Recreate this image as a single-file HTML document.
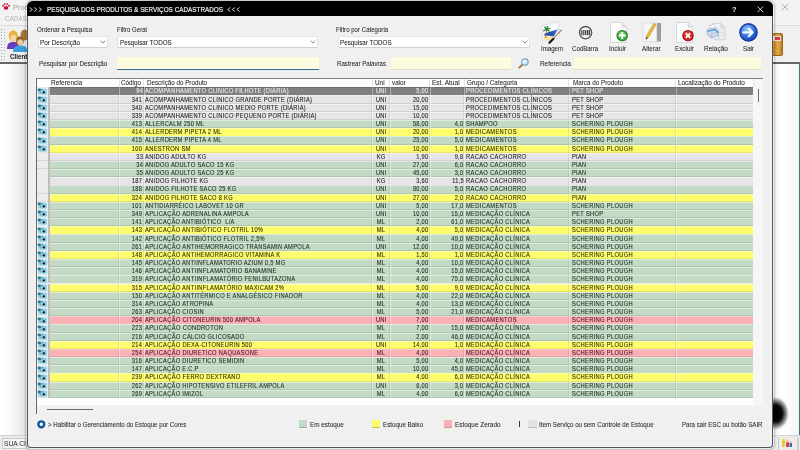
<!DOCTYPE html>
<html><head><meta charset="utf-8">
<style>
*{margin:0;padding:0;box-sizing:border-box}
html,body{width:800px;height:450px;overflow:hidden;background:#fff}
#root{position:absolute;left:0;top:0;width:800px;height:450px;overflow:hidden;will-change:transform;font-family:"Liberation Sans",sans-serif;color:#222}
.a{position:absolute}
.t{position:absolute;white-space:pre;line-height:1}
svg{position:absolute;overflow:visible}
</style></head><body><div id="root">

<div class="a" style="left:0.00px;top:0.00px;width:800.00px;height:25.00px;background:#f3f3f3"></div>
<div class="a" style="left:0.00px;top:25.00px;width:800.00px;height:1.00px;background:#dcdcdc"></div>
<div class="a" style="left:0.00px;top:26.00px;width:800.00px;height:36.30px;background:#f0f0f0"></div>
<div class="a" style="left:0.00px;top:62.30px;width:800.00px;height:1.30px;background:#666"></div>
<div class="a" style="left:0.00px;top:63.60px;width:27.00px;height:371.40px;background:linear-gradient(to right,#ffffff 0%,#fafafa 40%,#e2e2e2 100%)"></div>
<div class="a" style="left:773.00px;top:63.60px;width:27.00px;height:371.40px;background:linear-gradient(to right,#f0f0f0 0%,#ffffff 35%,#f4f4f4 100%)"></div>
<div class="a" style="left:798.60px;top:63.60px;width:1.40px;height:371.40px;background:#3d7a74"></div>
<div class="a" style="left:0.00px;top:435.00px;width:800.00px;height:15.00px;background:#ececec;border-top:1px solid #d0d0d0"></div>
<div class="a" style="left:1.50px;top:437.60px;width:25.50px;height:11.40px;background:#f4f4f4;border:1px solid #c8c8c8"></div>
<div class="t" style="left:4.00px;top:440.30px;font-size:7.0px;color:#333;transform:scaleX(0.9500);transform-origin:0 0;-webkit-text-stroke:0.05px #333;">SUA CI</div>
<div class="a" style="left:777.60px;top:437.00px;width:1.00px;height:13.00px;background:#c8c8c8"></div>
<div class="a" style="left:797.00px;top:437.00px;width:1.50px;height:13.00px;background:#d0d0d0"></div>
<svg style="left:780.5px;top:437.5px" width="12" height="10" viewBox="0 0 12 10"><path d="M1 2 L4 2 L3.5 9 L1.5 9Z" fill="#e8c020"/><circle cx="2.6" cy="2" r="1.6" fill="#f0d040"/><path d="M5 4 L8 4 L8 9 L5 9Z" fill="#d04848"/><circle cx="6.5" cy="3" r="1.5" fill="#f0c8a0"/><path d="M8.5 5 L11 5 L11 9 L8.5 9Z" fill="#3a68c8"/><circle cx="9.8" cy="4" r="1.3" fill="#f0c8a0"/></svg>
<div class="a" style="left:762.00px;top:397.00px;width:27.00px;height:33.00px;border-radius:50%;background:radial-gradient(ellipse 50% 50% at 50% 50%,#000 0%,#080808 50%,rgba(0,0,0,.5) 75%,rgba(0,0,0,0) 100%)"></div>
<svg style="left:2px;top:3.2px" width="8" height="7" viewBox="0 0 8 7"><ellipse cx="4" cy="4.9" rx="2.3" ry="1.8" fill="#c81430"/><circle cx="1" cy="2.7" r=".95" fill="#c81430"/><circle cx="2.8" cy="1.1" r=".95" fill="#c81430"/><circle cx="5.2" cy="1.1" r=".95" fill="#c81430"/><circle cx="7" cy="2.7" r=".95" fill="#c81430"/></svg>
<div class="t" style="left:13.47px;top:3.60px;font-size:7.8px;color:#a0a0a0;transform:scaleX(0.9500);transform-origin:0 0;-webkit-text-stroke:0px #a0a0a0;">Produtos</div>
<div class="t" style="left:4.61px;top:15.40px;font-size:7.4px;color:#b2b2b2;transform:scaleX(0.8600);transform-origin:0 0;-webkit-text-stroke:0px #b2b2b2;">CADASTRO</div>
<svg style="left:780.5px;top:2.5px" width="8" height="8" viewBox="0 0 8 8"><path d="M.8 .8 L7.2 7.2 M7.2 .8 L.8 7.2" stroke="#a0a0a0" stroke-width=".8"/></svg>
<div class="a" style="left:1.00px;top:28.50px;width:1.00px;height:1.00px;background:#9aa4ae"></div>
<div class="a" style="left:4.00px;top:28.50px;width:1.00px;height:1.00px;background:#aab2ba"></div>
<div class="a" style="left:1.00px;top:31.50px;width:1.00px;height:1.00px;background:#9aa4ae"></div>
<div class="a" style="left:4.00px;top:31.50px;width:1.00px;height:1.00px;background:#aab2ba"></div>
<div class="a" style="left:1.00px;top:34.50px;width:1.00px;height:1.00px;background:#9aa4ae"></div>
<div class="a" style="left:4.00px;top:34.50px;width:1.00px;height:1.00px;background:#aab2ba"></div>
<div class="a" style="left:1.00px;top:37.50px;width:1.00px;height:1.00px;background:#9aa4ae"></div>
<div class="a" style="left:4.00px;top:37.50px;width:1.00px;height:1.00px;background:#aab2ba"></div>
<div class="a" style="left:1.00px;top:40.50px;width:1.00px;height:1.00px;background:#9aa4ae"></div>
<div class="a" style="left:4.00px;top:40.50px;width:1.00px;height:1.00px;background:#aab2ba"></div>
<div class="a" style="left:1.00px;top:43.50px;width:1.00px;height:1.00px;background:#9aa4ae"></div>
<div class="a" style="left:4.00px;top:43.50px;width:1.00px;height:1.00px;background:#aab2ba"></div>
<div class="a" style="left:1.00px;top:46.50px;width:1.00px;height:1.00px;background:#9aa4ae"></div>
<div class="a" style="left:4.00px;top:46.50px;width:1.00px;height:1.00px;background:#aab2ba"></div>
<div class="a" style="left:1.00px;top:49.50px;width:1.00px;height:1.00px;background:#9aa4ae"></div>
<div class="a" style="left:4.00px;top:49.50px;width:1.00px;height:1.00px;background:#aab2ba"></div>
<div class="a" style="left:1.00px;top:52.50px;width:1.00px;height:1.00px;background:#9aa4ae"></div>
<div class="a" style="left:4.00px;top:52.50px;width:1.00px;height:1.00px;background:#aab2ba"></div>
<div class="a" style="left:1.00px;top:55.50px;width:1.00px;height:1.00px;background:#9aa4ae"></div>
<div class="a" style="left:4.00px;top:55.50px;width:1.00px;height:1.00px;background:#aab2ba"></div>
<div class="a" style="left:1.00px;top:58.50px;width:1.00px;height:1.00px;background:#9aa4ae"></div>
<div class="a" style="left:4.00px;top:58.50px;width:1.00px;height:1.00px;background:#aab2ba"></div>
<svg style="left:6px;top:28px" width="22" height="25" viewBox="0 0 22 25">
<ellipse cx="18.5" cy="7" rx="4" ry="5.5" fill="#a87838"/>
<path d="M1 21 Q1 14 6 14 L9 14 Q13 14 13 21Z" fill="#6a3ab8"/>
<ellipse cx="7.3" cy="8" rx="4.6" ry="5.8" fill="#e4b640"/>
<ellipse cx="7.5" cy="10" rx="2.8" ry="3.2" fill="#f6d4ac"/>
<path d="M7 24 Q7 17.5 13 17.5 L16 17.5 Q21.5 17.5 21.5 24Z" fill="#3a9ede"/>
<ellipse cx="14" cy="13" rx="3.8" ry="4.4" fill="#8c6028"/>
<ellipse cx="14.2" cy="14.3" rx="2.8" ry="3.1" fill="#f2c89e"/>
</svg>
<div class="t" style="left:9.52px;top:54.30px;font-size:6.6px;color:#1a1a1a;transform:scaleX(0.9500);transform-origin:0 0;font-weight:bold;-webkit-text-stroke:0.05px #1a1a1a;">Clientes</div>
<div class="a" style="left:772.00px;top:33.00px;width:10.50px;height:23.00px;border-radius:2px;background:linear-gradient(to right,#c98a2a,#e0a848 60%,#b87a22);border:1px solid #9a6a1c"></div>
<div class="a" style="left:773.00px;top:36.00px;width:8.00px;height:5.00px;background:#e8e0e0"></div>
<div class="a" style="left:774.50px;top:37.00px;width:5.00px;height:3.00px;background:#d83848"></div>
<div class="a" style="left:25.60px;top:1.40px;width:748.90px;height:447.30px;border-radius:7px 7px 5px 5px;box-shadow:0 0 2px 0.4px rgba(0,0,0,.22)"></div>
<div class="a" style="left:26.60px;top:1.40px;width:746.90px;height:446.50px;background:#f0f0f0;border:1px solid #555;border-top:none;border-radius:6px 6px 4px 4px"></div>
<div class="a" style="left:26.60px;top:1.40px;width:746.90px;height:15.00px;background:#000;border-radius:6px 6px 0 0"></div>
<svg style="left:29px;top:7px" width="14" height="5" viewBox="0 0 14 5"><path d="M.6 .5 L3.4 2.5 L.6 4.5 M5.2 .5 L8 2.5 L5.2 4.5 M9.8 .5 L12.6 2.5 L9.8 4.5" fill="none" stroke="#d8d8d8" stroke-width=".9"/></svg>
<div class="t" style="left:47.01px;top:6.00px;font-size:8.0px;color:#ececec;transform:scaleX(0.7945);transform-origin:0 0;-webkit-text-stroke:0.22px #ececec;">PESQUISA DOS PRODUTOS &amp; SERVIÇOS CADASTRADOS</div>
<svg style="left:227px;top:7px" width="14" height="5" viewBox="0 0 14 5"><path d="M3.4 .5 L.6 2.5 L3.4 4.5 M8 .5 L5.2 2.5 L8 4.5 M12.6 .5 L9.8 2.5 L12.6 4.5" fill="none" stroke="#d8d8d8" stroke-width=".9"/></svg>
<div class="t" style="left:731.57px;top:6.00px;font-size:7.8px;color:#e0e0e0;transform:scaleX(0.9500);transform-origin:0 0;font-weight:bold;-webkit-text-stroke:0.05px #e0e0e0;">?</div>
<svg style="left:756.6px;top:5.6px" width="7" height="7" viewBox="0 0 7 7"><path d="M.5 .5 L6.2 6.2 M6.2 .5 L.5 6.2" stroke="#e8e8e8" stroke-width=".9"/></svg>
<div class="t" style="left:36.82px;top:26.70px;font-size:6.3px;color:#262626;transform:scaleX(0.9846);transform-origin:0 0;-webkit-text-stroke:0.05px #262626;">Ordenar a Pesquisa</div>
<div class="t" style="left:116.73px;top:26.70px;font-size:6.3px;color:#262626;transform:scaleX(0.9587);transform-origin:0 0;-webkit-text-stroke:0.05px #262626;">Filtro Geral</div>
<div class="t" style="left:336.23px;top:26.70px;font-size:6.3px;color:#262626;transform:scaleX(0.9675);transform-origin:0 0;-webkit-text-stroke:0.05px #262626;">Filtro por Categoria</div>
<div class="a" style="left:37.60px;top:36.20px;width:70.40px;height:11.60px;background:#fff;border:1px solid #e2e2e2;border-bottom:1px solid #d0d0d0;border-radius:1.5px"></div>
<div class="t" style="left:39.91px;top:39.70px;font-size:6.5px;color:#1a1a1a;transform:scaleX(0.9796);transform-origin:0 0;-webkit-text-stroke:0.05px #1a1a1a;">Por Descrição</div>
<svg style="left:99.80px;top:40.4px" width="6" height="4" viewBox="0 0 6 4"><path d="M0.6 0.7 L3 3.1 L5.4 0.7" fill="none" stroke="#5a5a5a" stroke-width=".75"/></svg>
<div class="a" style="left:117.30px;top:36.20px;width:201.10px;height:11.60px;background:#fff;border:1px solid #e2e2e2;border-bottom:1px solid #d0d0d0;border-radius:1.5px"></div>
<div class="t" style="left:119.62px;top:39.70px;font-size:6.5px;color:#1a1a1a;transform:scaleX(0.9664);transform-origin:0 0;-webkit-text-stroke:0.05px #1a1a1a;">Pesquisar TODOS</div>
<svg style="left:310.20px;top:40.4px" width="6" height="4" viewBox="0 0 6 4"><path d="M0.6 0.7 L3 3.1 L5.4 0.7" fill="none" stroke="#5a5a5a" stroke-width=".75"/></svg>
<div class="a" style="left:337.60px;top:36.20px;width:192.60px;height:11.60px;background:#fff;border:1px solid #e2e2e2;border-bottom:1px solid #d0d0d0;border-radius:1.5px"></div>
<div class="t" style="left:339.92px;top:39.70px;font-size:6.5px;color:#1a1a1a;transform:scaleX(0.9627);transform-origin:0 0;-webkit-text-stroke:0.05px #1a1a1a;">Pesquisar TODOS</div>
<svg style="left:522.00px;top:40.4px" width="6" height="4" viewBox="0 0 6 4"><path d="M0.6 0.7 L3 3.1 L5.4 0.7" fill="none" stroke="#5a5a5a" stroke-width=".75"/></svg>
<div class="t" style="left:38.62px;top:60.60px;font-size:6.6px;color:#262626;transform:scaleX(0.9513);transform-origin:0 0;-webkit-text-stroke:0.05px #262626;">Pesquisar por Descrição</div>
<div class="t" style="left:337.22px;top:60.60px;font-size:6.6px;color:#262626;transform:scaleX(0.9295);transform-origin:0 0;-webkit-text-stroke:0.05px #262626;">Rastrear Palavras</div>
<div class="t" style="left:539.91px;top:60.60px;font-size:6.6px;color:#262626;transform:scaleX(0.9680);transform-origin:0 0;-webkit-text-stroke:0.05px #262626;">Referencia</div>
<div class="a" style="left:116.70px;top:56.70px;width:202.00px;height:13.50px;background:#fdfcdf;border-bottom:1.6px solid #3a6c94"></div>
<div class="a" style="left:391.00px;top:57.00px;width:120.00px;height:12.60px;background:#fdfcdf;border-bottom:0.8px solid #e0dfcc"></div>
<div class="a" style="left:574.00px;top:56.70px;width:186.50px;height:13.80px;background:#fdfcdf;border-bottom:0.8px solid #e0dfcc"></div>
<svg style="left:517.5px;top:57px" width="12" height="12" viewBox="0 0 12 12"><line x1="4.3" y1="7.6" x2="1.3" y2="10.7" stroke="#9a6a34" stroke-width="1.8" stroke-linecap="round"/><line x1="3.6" y1="8.3" x2="1.6" y2="10.3" stroke="#d0a070" stroke-width=".5" stroke-linecap="round"/><circle cx="6.9" cy="5" r="3.3" fill="#cfe8f4" stroke="#7098b4" stroke-width="1.05"/><circle cx="6.2" cy="4.3" r="1.2" fill="#f4fbff" opacity=".9"/></svg>
<svg style="left:538px;top:18px" width="30" height="28" viewBox="0 0 30 28">
<defs><linearGradient id="bw" x1="0" y1="0" x2="1" y2="0"><stop offset="0" stop-color="#1a3c9c"/><stop offset=".7" stop-color="#2a5cc0"/><stop offset="1" stop-color="#7ab8e8"/></linearGradient></defs>
<path d="M4 7.6 L20.8 3.6 L21.4 20.2 L4.6 23.2 Z" fill="#f6f8fa" stroke="#cfd6de" stroke-width=".6"/>
<path d="M5.6 9 L19.6 5.6 L20 18.8 L6 21.6 Z" fill="#fbfdff"/>
<ellipse cx="10.2" cy="20" rx="4.6" ry="2.4" fill="#f2e4a4"/>
<path d="M6.2 16 Q12 13.5 20.6 11 L15.6 18.6 Q11 17.2 6.4 17.4 Z" fill="url(#bw)"/>
<path d="M8.6 12 L7.6 20" stroke="#8a6a3a" stroke-width=".9"/>
<path d="M8.8 11.4 L5.8 12.6 M8.8 11.4 L11.8 10.4 M8.8 11.4 L6.8 9.2 M8.8 11.4 L11 13 M8.8 11.4 L9.4 8.8" stroke="#2a8c3c" stroke-width="1.5" stroke-linecap="round"/>
<path d="M23.6 11.8 L15.8 20.2" stroke="#a8703a" stroke-width="1.1"/>
<path d="M15.4 20.8 L11.4 24.8" stroke="#111" stroke-width="2.1" stroke-linecap="round"/>
</svg>
<div class="t" style="left:540.53px;top:45.50px;font-size:6.6px;color:#262626;transform:scaleX(0.9226);transform-origin:0 0;-webkit-text-stroke:0.05px #262626;">Imagem</div>
<svg style="left:576px;top:23px" width="20" height="20" viewBox="0 0 20 20">
<circle cx="9.6" cy="9.6" r="6.9" fill="#fafafa" stroke="#fff" stroke-width="1.2" opacity=".8"/>
<circle cx="9.6" cy="9.6" r="6.1" fill="#f8f8f8" stroke="#595959" stroke-width="1.5"/>
<path d="M5.9 6.9V12.3M7.8 6.9V12.3M9.7 6.9V12.3M11.6 6.9V12.3M13.4 6.9V12.3" stroke="#383838" stroke-width="1.15"/>
<path d="M6.85 7.2V12M8.75 7.2V12M10.65 7.2V12M12.5 7.2V12" stroke="#9a9a9a" stroke-width=".4"/>
</svg>
<div class="t" style="left:572.03px;top:45.50px;font-size:6.6px;color:#262626;transform:scaleX(0.9238);transform-origin:0 0;-webkit-text-stroke:0.05px #262626;">CodBarra</div>
<svg style="left:607.5px;top:20.5px" width="22" height="23" viewBox="0 0 22 23">
<path d="M2.5 1.5 L14 1.5 L18.5 6 L18.5 21.5 L2.5 21.5 Z" fill="#fbfbfb" stroke="#c4c4c4" stroke-width=".6"/>
<path d="M14 1.5 L14 6 L18.5 6" fill="#e2e2e2" stroke="#c4c4c4" stroke-width=".5"/>
<circle cx="14.2" cy="14.6" r="5.7" fill="#1e7a22"/>
<circle cx="14.2" cy="14.6" r="4.8" fill="#48b048"/>
<ellipse cx="13.6" cy="12.6" rx="3.2" ry="1.8" fill="#8ad88a" opacity=".6"/>
<path d="M14.2 11.2V18M10.8 14.6H17.6" stroke="#fff" stroke-width="2"/>
</svg>
<div class="t" style="left:609.21px;top:45.50px;font-size:6.6px;color:#262626;transform:scaleX(0.9710);transform-origin:0 0;-webkit-text-stroke:0.05px #262626;">Incluir</div>
<svg style="left:641px;top:21px" width="22" height="23" viewBox="0 0 22 23">
<rect x="15.5" y="2" width="4.5" height="18.5" fill="#9c9c9c"/>
<path d="M2 2 L15.8 2 L15.8 20.5 L2 20.5 Z" fill="#f4f6f8" stroke="#c4c8cc" stroke-width=".5"/>
<path d="M13 2.2 L5.4 14.8 L4.8 18.4 L7.6 16.2 L15 3.6 Z" fill="#f2bc34" stroke="#b07a12" stroke-width=".5"/>
<path d="M4.8 18.4 L5.3 16 L7 16.8Z" fill="#333"/>
</svg>
<div class="t" style="left:642.12px;top:45.50px;font-size:6.6px;color:#262626;transform:scaleX(0.9514);transform-origin:0 0;-webkit-text-stroke:0.05px #262626;">Alterar</div>
<svg style="left:674px;top:20.5px" width="22" height="23" viewBox="0 0 22 23">
<path d="M2.5 1.5 L14 1.5 L18.5 6 L18.5 21.5 L2.5 21.5 Z" fill="#fbfbfb" stroke="#c4c4c4" stroke-width=".6"/>
<path d="M14 1.5 L14 6 L18.5 6" fill="#e2e2e2" stroke="#c4c4c4" stroke-width=".5"/>
<circle cx="14" cy="14.6" r="5.7" fill="#9a1010"/>
<circle cx="14" cy="14.6" r="4.8" fill="#d42828"/>
<ellipse cx="13.4" cy="12.6" rx="3.2" ry="1.8" fill="#f07070" opacity=".5"/>
<path d="M11.7 12.3L16.3 16.9M16.3 12.3L11.7 16.9" stroke="#fff" stroke-width="1.7"/>
</svg>
<div class="t" style="left:674.72px;top:45.50px;font-size:6.6px;color:#262626;transform:scaleX(0.9541);transform-origin:0 0;-webkit-text-stroke:0.05px #262626;">Excluir</div>
<svg style="left:700px;top:18px" width="30" height="26" viewBox="0 0 30 26">
<path d="M13.2 5.6 L20.6 5.2 L24.6 9 L25.4 21.6 L15.8 22 Z" fill="#f0f2f5" stroke="#aeb6c0" stroke-width=".5"/>
<path d="M20.6 5.2 L21 9.2 L24.6 9" fill="#dde2e8" stroke="#aeb6c0" stroke-width=".4"/>
<path d="M16 10.5 L24 10.2 M16.3 12.6 L24.2 12.3 M16.6 14.7 L24.4 14.4 M16.9 16.8 L24.6 16.5 M17.2 18.9 L24.8 18.6" stroke="#c6ccd6" stroke-width=".5"/>
<path d="M9.6 7.4 L13.8 6.4 L16.2 10.2 L11.6 11.4 Z" fill="#fdfeff" stroke="#8898b0" stroke-width=".45"/>
<path d="M7.2 11.6 L14.4 9.8 L18.4 13.2 L18.4 17.4 L11.2 19.8 L7.2 16.2 Z" fill="#d0dcec" stroke="#7088a8" stroke-width=".5"/>
<path d="M7.4 13.4 L14.6 11.6 L18.2 14.8" fill="none" stroke="#3e9ad8" stroke-width="1.3"/>
<path d="M11.2 19.8 L11.2 15.8 L18.4 13.6" fill="none" stroke="#8ea2bc" stroke-width=".45"/>
<path d="M9.8 17.6 L14.6 21.4 L19.4 19.4 L18.4 17.4 L11.2 19.8 Z" fill="#eef2f8" stroke="#90a0b8" stroke-width=".4"/>
</svg>
<div class="t" style="left:704.41px;top:45.50px;font-size:6.6px;color:#262626;transform:scaleX(0.9909);transform-origin:0 0;-webkit-text-stroke:0.05px #262626;">Relação</div>
<svg style="left:737.6px;top:22px" width="22" height="22" viewBox="0 0 22 22">
<defs><radialGradient id="sg" cx="42%" cy="32%" r="70%"><stop offset="0" stop-color="#9ccaff"/><stop offset=".55" stop-color="#3c7ce8"/><stop offset="1" stop-color="#1846b4"/></radialGradient></defs>
<circle cx="10.5" cy="10.4" r="9.9" fill="#ffffff" opacity=".7"/>
<circle cx="10.5" cy="10.4" r="9.3" fill="#14369a"/>
<circle cx="10.5" cy="10.4" r="8.0" fill="url(#sg)"/>
<path d="M5.4 10.4H14.6M10.8 6.6L14.6 10.4L10.8 14.2" fill="none" stroke="#f4f8ff" stroke-width="2.2" stroke-linejoin="round" stroke-linecap="round"/>
</svg>
<div class="t" style="left:742.52px;top:45.50px;font-size:6.6px;color:#262626;transform:scaleX(0.9452);transform-origin:0 0;-webkit-text-stroke:0.05px #262626;">Sair</div>
<div class="a" style="left:36.00px;top:77.50px;width:726.80px;height:336.50px;background:#f1f1f1;border-left:1.1px solid #6a6a6a;border-top:1.2px solid #7e7e7e"></div>
<div class="a" style="left:37.10px;top:78.70px;width:716.10px;height:326.30px;background:#fff"></div>
<div class="a" style="left:753.20px;top:78.70px;width:9.60px;height:326.30px;background:#f6f6f6"></div>
<div class="a" style="left:757.50px;top:89.00px;width:1.10px;height:12.50px;background:#6e6e6e"></div>
<div class="a" style="left:47.00px;top:408.60px;width:46.10px;height:1.10px;background:#686868"></div>
<div class="t" style="left:51.01px;top:80.00px;font-size:6.5px;color:#1e1e1e;transform:scaleX(0.9953);transform-origin:0 0;-webkit-text-stroke:0.05px #1e1e1e;">Referencia</div>
<div class="t" style="left:121.32px;top:80.00px;font-size:6.5px;color:#1e1e1e;transform:scaleX(0.9654);transform-origin:0 0;-webkit-text-stroke:0.05px #1e1e1e;">Código</div>
<div class="t" style="left:146.72px;top:80.00px;font-size:6.5px;color:#1e1e1e;transform:scaleX(0.9613);transform-origin:0 0;-webkit-text-stroke:0.05px #1e1e1e;">Descrição do Produto</div>
<div class="t" style="left:374.71px;top:80.00px;font-size:6.5px;color:#1e1e1e;transform:scaleX(0.9828);transform-origin:0 0;-webkit-text-stroke:0.05px #1e1e1e;">Uni</div>
<div class="t" style="left:391.72px;top:80.00px;font-size:6.5px;color:#1e1e1e;transform:scaleX(0.9643);transform-origin:0 0;-webkit-text-stroke:0.05px #1e1e1e;">valor</div>
<div class="t" style="left:431.71px;top:80.00px;font-size:6.5px;color:#1e1e1e;transform:scaleX(1.0046);transform-origin:0 0;-webkit-text-stroke:0.05px #1e1e1e;">Est. Atual</div>
<div class="t" style="left:467.12px;top:80.00px;font-size:6.5px;color:#1e1e1e;transform:scaleX(0.9714);transform-origin:0 0;-webkit-text-stroke:0.05px #1e1e1e;">Grupo / Categoria</div>
<div class="t" style="left:572.72px;top:80.00px;font-size:6.5px;color:#1e1e1e;transform:scaleX(0.9695);transform-origin:0 0;-webkit-text-stroke:0.05px #1e1e1e;">Marca do Produto</div>
<div class="t" style="left:677.71px;top:80.00px;font-size:6.5px;color:#1e1e1e;transform:scaleX(0.9831);transform-origin:0 0;-webkit-text-stroke:0.05px #1e1e1e;">Localização do Produto</div>
<div class="a" style="left:118.50px;top:79.20px;width:1.00px;height:7.60px;background:#e2e2e2"></div>
<div class="a" style="left:143.30px;top:79.20px;width:1.00px;height:7.60px;background:#e2e2e2"></div>
<div class="a" style="left:371.90px;top:79.20px;width:1.00px;height:7.60px;background:#e2e2e2"></div>
<div class="a" style="left:389.10px;top:79.20px;width:1.00px;height:7.60px;background:#e2e2e2"></div>
<div class="a" style="left:429.30px;top:79.20px;width:1.00px;height:7.60px;background:#e2e2e2"></div>
<div class="a" style="left:463.90px;top:79.20px;width:1.00px;height:7.60px;background:#e2e2e2"></div>
<div class="a" style="left:568.30px;top:79.20px;width:1.00px;height:7.60px;background:#e2e2e2"></div>
<div class="a" style="left:675.00px;top:79.20px;width:1.00px;height:7.60px;background:#e2e2e2"></div>
<div class="a" style="left:752.70px;top:79.20px;width:1.00px;height:7.60px;background:#e2e2e2"></div>
<div class="a" style="left:37.10px;top:87.30px;width:11.10px;height:8.17px;background:#ececec"></div>
<div class="a" style="left:37.10px;top:94.88px;width:11.10px;height:0.60px;background:#d8d8d8"></div>
<svg style="left:37.3px;top:87.60px" width="10.8" height="7.6" viewBox="0 0 10.8 7.6"><rect x="0" y="0" width="10.8" height="7.6" fill="#dcf2f6"/><rect x="1" y=".7" width="8.9" height="6" rx="1.3" fill="#a6dbe8"/><rect x="3.4" y="1.4" width="6.2" height="4.9" rx="1" fill="#8ccbdc"/><ellipse cx="2.3" cy="2" rx="1.8" ry="1.4" fill="#2a7890"/><ellipse cx="5" cy="1.6" rx="1.6" ry=".8" fill="#5aa8c0"/><circle cx="3.3" cy="4.7" r=".7" fill="#7e8ea0"/><circle cx="6.8" cy="4.4" r="1.15" fill="#08141a"/></svg>
<div class="a" style="left:48.20px;top:87.30px;width:1.40px;height:8.17px;background:#bdbdbd"></div>
<div class="a" style="left:49.60px;top:87.30px;width:703.60px;height:8.17px;background:#808080"></div>
<div class="a" style="left:49.60px;top:87.30px;width:703.60px;height:0.80px;background:#6c6c6c"></div>
<div class="a" style="left:49.60px;top:94.67px;width:703.60px;height:0.80px;background:rgba(0,0,0,.12)"></div>
<div class="a" style="left:118.00px;top:87.30px;width:1.00px;height:8.17px;background:rgba(0,0,0,.07)"></div>
<div class="a" style="left:119.00px;top:87.30px;width:1.00px;height:8.17px;background:rgba(255,255,255,.4)"></div>
<div class="a" style="left:142.80px;top:87.30px;width:1.00px;height:8.17px;background:rgba(0,0,0,.07)"></div>
<div class="a" style="left:143.80px;top:87.30px;width:1.00px;height:8.17px;background:rgba(255,255,255,.4)"></div>
<div class="a" style="left:371.40px;top:87.30px;width:1.00px;height:8.17px;background:rgba(0,0,0,.07)"></div>
<div class="a" style="left:372.40px;top:87.30px;width:1.00px;height:8.17px;background:rgba(255,255,255,.4)"></div>
<div class="a" style="left:388.60px;top:87.30px;width:1.00px;height:8.17px;background:rgba(0,0,0,.07)"></div>
<div class="a" style="left:389.60px;top:87.30px;width:1.00px;height:8.17px;background:rgba(255,255,255,.4)"></div>
<div class="a" style="left:428.80px;top:87.30px;width:1.00px;height:8.17px;background:rgba(0,0,0,.07)"></div>
<div class="a" style="left:429.80px;top:87.30px;width:1.00px;height:8.17px;background:rgba(255,255,255,.4)"></div>
<div class="a" style="left:463.40px;top:87.30px;width:1.00px;height:8.17px;background:rgba(0,0,0,.07)"></div>
<div class="a" style="left:464.40px;top:87.30px;width:1.00px;height:8.17px;background:rgba(255,255,255,.4)"></div>
<div class="a" style="left:567.80px;top:87.30px;width:1.00px;height:8.17px;background:rgba(0,0,0,.07)"></div>
<div class="a" style="left:568.80px;top:87.30px;width:1.00px;height:8.17px;background:rgba(255,255,255,.4)"></div>
<div class="a" style="left:674.50px;top:87.30px;width:1.00px;height:8.17px;background:rgba(0,0,0,.07)"></div>
<div class="a" style="left:675.50px;top:87.30px;width:1.00px;height:8.17px;background:rgba(255,255,255,.4)"></div>
<div class="t" style="right:657.34px;top:88.35px;font-size:6.7px;color:#ececec;transform:scaleX(0.8520);transform-origin:100% 0;-webkit-text-stroke:0.09px #ececec;letter-spacing:0.35px;">94</div>
<div class="t" style="left:145.04px;top:88.35px;font-size:6.7px;color:#ececec;transform:scaleX(0.8564);transform-origin:0 0;-webkit-text-stroke:0.09px #ececec;letter-spacing:0.35px;">ACOMPANHAMENTO CLINICO FILHOTE (DIÁRIA)</div>
<div class="t" style="left:281.00px;width:200px;text-align:center;top:88.35px;font-size:6.7px;color:#ececec;-webkit-text-stroke:0.09px #ececec;letter-spacing:0.35px;"><span style="display:inline-block;transform:scaleX(0.8543)">UNI</span></div>
<div class="t" style="right:371.15px;top:88.35px;font-size:6.7px;color:#ececec;transform:scaleX(0.8416);transform-origin:100% 0;-webkit-text-stroke:0.09px #ececec;letter-spacing:0.35px;">5,00</div>
<div class="t" style="left:466.34px;top:88.35px;font-size:6.7px;color:#ececec;transform:scaleX(0.8604);transform-origin:0 0;-webkit-text-stroke:0.09px #ececec;letter-spacing:0.35px;">PROCEDIMENTOS CLÍNICOS</div>
<div class="t" style="left:571.74px;top:88.35px;font-size:6.7px;color:#ececec;transform:scaleX(0.8606);transform-origin:0 0;-webkit-text-stroke:0.09px #ececec;letter-spacing:0.35px;">PET SHOP</div>
<div class="a" style="left:37.10px;top:95.47px;width:11.10px;height:8.17px;background:#ececec"></div>
<div class="a" style="left:37.10px;top:103.05px;width:11.10px;height:0.60px;background:#d8d8d8"></div>
<svg style="left:37.3px;top:95.77px" width="10.8" height="7.6" viewBox="0 0 10.8 7.6"><rect x="0" y="0" width="10.8" height="7.6" fill="#dcf2f6"/><rect x="1" y=".7" width="8.9" height="6" rx="1.3" fill="#a6dbe8"/><rect x="3.4" y="1.4" width="6.2" height="4.9" rx="1" fill="#8ccbdc"/><ellipse cx="2.3" cy="2" rx="1.8" ry="1.4" fill="#2a7890"/><ellipse cx="5" cy="1.6" rx="1.6" ry=".8" fill="#5aa8c0"/><circle cx="3.3" cy="4.7" r=".7" fill="#7e8ea0"/><circle cx="6.8" cy="4.4" r="1.15" fill="#08141a"/></svg>
<div class="a" style="left:48.20px;top:95.47px;width:1.40px;height:8.17px;background:#bdbdbd"></div>
<div class="a" style="left:49.60px;top:95.47px;width:703.60px;height:8.17px;background:#e5e5e7"></div>
<div class="a" style="left:49.60px;top:95.47px;width:703.60px;height:0.70px;background:rgba(255,255,255,.55)"></div>
<div class="a" style="left:49.60px;top:102.85px;width:703.60px;height:0.80px;background:rgba(0,0,0,.09)"></div>
<div class="a" style="left:118.00px;top:95.47px;width:1.00px;height:8.17px;background:rgba(0,0,0,.07)"></div>
<div class="a" style="left:119.00px;top:95.47px;width:1.00px;height:8.17px;background:rgba(255,255,255,.4)"></div>
<div class="a" style="left:142.80px;top:95.47px;width:1.00px;height:8.17px;background:rgba(0,0,0,.07)"></div>
<div class="a" style="left:143.80px;top:95.47px;width:1.00px;height:8.17px;background:rgba(255,255,255,.4)"></div>
<div class="a" style="left:371.40px;top:95.47px;width:1.00px;height:8.17px;background:rgba(0,0,0,.07)"></div>
<div class="a" style="left:372.40px;top:95.47px;width:1.00px;height:8.17px;background:rgba(255,255,255,.4)"></div>
<div class="a" style="left:388.60px;top:95.47px;width:1.00px;height:8.17px;background:rgba(0,0,0,.07)"></div>
<div class="a" style="left:389.60px;top:95.47px;width:1.00px;height:8.17px;background:rgba(255,255,255,.4)"></div>
<div class="a" style="left:428.80px;top:95.47px;width:1.00px;height:8.17px;background:rgba(0,0,0,.07)"></div>
<div class="a" style="left:429.80px;top:95.47px;width:1.00px;height:8.17px;background:rgba(255,255,255,.4)"></div>
<div class="a" style="left:463.40px;top:95.47px;width:1.00px;height:8.17px;background:rgba(0,0,0,.07)"></div>
<div class="a" style="left:464.40px;top:95.47px;width:1.00px;height:8.17px;background:rgba(255,255,255,.4)"></div>
<div class="a" style="left:567.80px;top:95.47px;width:1.00px;height:8.17px;background:rgba(0,0,0,.07)"></div>
<div class="a" style="left:568.80px;top:95.47px;width:1.00px;height:8.17px;background:rgba(255,255,255,.4)"></div>
<div class="a" style="left:674.50px;top:95.47px;width:1.00px;height:8.17px;background:rgba(0,0,0,.07)"></div>
<div class="a" style="left:675.50px;top:95.47px;width:1.00px;height:8.17px;background:rgba(255,255,255,.4)"></div>
<div class="t" style="right:657.34px;top:96.52px;font-size:6.7px;color:#1c1c1c;transform:scaleX(0.8520);transform-origin:100% 0;-webkit-text-stroke:0.09px #1c1c1c;letter-spacing:0.35px;">341</div>
<div class="t" style="left:145.04px;top:96.52px;font-size:6.7px;color:#1c1c1c;transform:scaleX(0.8585);transform-origin:0 0;-webkit-text-stroke:0.09px #1c1c1c;letter-spacing:0.35px;">ACOMPANHAMENTO CLINICO GRANDE PORTE (DIÁRIA)</div>
<div class="t" style="left:281.00px;width:200px;text-align:center;top:96.52px;font-size:6.7px;color:#1c1c1c;-webkit-text-stroke:0.09px #1c1c1c;letter-spacing:0.35px;"><span style="display:inline-block;transform:scaleX(0.8543)">UNI</span></div>
<div class="t" style="right:371.15px;top:96.52px;font-size:6.7px;color:#1c1c1c;transform:scaleX(0.8439);transform-origin:100% 0;-webkit-text-stroke:0.09px #1c1c1c;letter-spacing:0.35px;">20,00</div>
<div class="t" style="left:466.34px;top:96.52px;font-size:6.7px;color:#1c1c1c;transform:scaleX(0.8604);transform-origin:0 0;-webkit-text-stroke:0.09px #1c1c1c;letter-spacing:0.35px;">PROCEDIMENTOS CLÍNICOS</div>
<div class="t" style="left:571.74px;top:96.52px;font-size:6.7px;color:#1c1c1c;transform:scaleX(0.8606);transform-origin:0 0;-webkit-text-stroke:0.09px #1c1c1c;letter-spacing:0.35px;">PET SHOP</div>
<div class="a" style="left:37.10px;top:103.65px;width:11.10px;height:8.17px;background:#ececec"></div>
<div class="a" style="left:37.10px;top:111.23px;width:11.10px;height:0.60px;background:#d8d8d8"></div>
<svg style="left:37.3px;top:103.95px" width="10.8" height="7.6" viewBox="0 0 10.8 7.6"><rect x="0" y="0" width="10.8" height="7.6" fill="#dcf2f6"/><rect x="1" y=".7" width="8.9" height="6" rx="1.3" fill="#a6dbe8"/><rect x="3.4" y="1.4" width="6.2" height="4.9" rx="1" fill="#8ccbdc"/><ellipse cx="2.3" cy="2" rx="1.8" ry="1.4" fill="#2a7890"/><ellipse cx="5" cy="1.6" rx="1.6" ry=".8" fill="#5aa8c0"/><circle cx="3.3" cy="4.7" r=".7" fill="#7e8ea0"/><circle cx="6.8" cy="4.4" r="1.15" fill="#08141a"/></svg>
<div class="a" style="left:48.20px;top:103.65px;width:1.40px;height:8.17px;background:#bdbdbd"></div>
<div class="a" style="left:49.60px;top:103.65px;width:703.60px;height:8.17px;background:#e5e5e7"></div>
<div class="a" style="left:49.60px;top:103.65px;width:703.60px;height:0.70px;background:rgba(255,255,255,.55)"></div>
<div class="a" style="left:49.60px;top:111.03px;width:703.60px;height:0.80px;background:rgba(0,0,0,.09)"></div>
<div class="a" style="left:118.00px;top:103.65px;width:1.00px;height:8.17px;background:rgba(0,0,0,.07)"></div>
<div class="a" style="left:119.00px;top:103.65px;width:1.00px;height:8.17px;background:rgba(255,255,255,.4)"></div>
<div class="a" style="left:142.80px;top:103.65px;width:1.00px;height:8.17px;background:rgba(0,0,0,.07)"></div>
<div class="a" style="left:143.80px;top:103.65px;width:1.00px;height:8.17px;background:rgba(255,255,255,.4)"></div>
<div class="a" style="left:371.40px;top:103.65px;width:1.00px;height:8.17px;background:rgba(0,0,0,.07)"></div>
<div class="a" style="left:372.40px;top:103.65px;width:1.00px;height:8.17px;background:rgba(255,255,255,.4)"></div>
<div class="a" style="left:388.60px;top:103.65px;width:1.00px;height:8.17px;background:rgba(0,0,0,.07)"></div>
<div class="a" style="left:389.60px;top:103.65px;width:1.00px;height:8.17px;background:rgba(255,255,255,.4)"></div>
<div class="a" style="left:428.80px;top:103.65px;width:1.00px;height:8.17px;background:rgba(0,0,0,.07)"></div>
<div class="a" style="left:429.80px;top:103.65px;width:1.00px;height:8.17px;background:rgba(255,255,255,.4)"></div>
<div class="a" style="left:463.40px;top:103.65px;width:1.00px;height:8.17px;background:rgba(0,0,0,.07)"></div>
<div class="a" style="left:464.40px;top:103.65px;width:1.00px;height:8.17px;background:rgba(255,255,255,.4)"></div>
<div class="a" style="left:567.80px;top:103.65px;width:1.00px;height:8.17px;background:rgba(0,0,0,.07)"></div>
<div class="a" style="left:568.80px;top:103.65px;width:1.00px;height:8.17px;background:rgba(255,255,255,.4)"></div>
<div class="a" style="left:674.50px;top:103.65px;width:1.00px;height:8.17px;background:rgba(0,0,0,.07)"></div>
<div class="a" style="left:675.50px;top:103.65px;width:1.00px;height:8.17px;background:rgba(255,255,255,.4)"></div>
<div class="t" style="right:657.34px;top:104.70px;font-size:6.7px;color:#1c1c1c;transform:scaleX(0.8520);transform-origin:100% 0;-webkit-text-stroke:0.09px #1c1c1c;letter-spacing:0.35px;">340</div>
<div class="t" style="left:145.04px;top:104.70px;font-size:6.7px;color:#1c1c1c;transform:scaleX(0.8574);transform-origin:0 0;-webkit-text-stroke:0.09px #1c1c1c;letter-spacing:0.35px;">ACOMPANHAMENTO CLINICO MEDIO PORTE (DIÁRIA)</div>
<div class="t" style="left:281.00px;width:200px;text-align:center;top:104.70px;font-size:6.7px;color:#1c1c1c;-webkit-text-stroke:0.09px #1c1c1c;letter-spacing:0.35px;"><span style="display:inline-block;transform:scaleX(0.8543)">UNI</span></div>
<div class="t" style="right:371.15px;top:104.70px;font-size:6.7px;color:#1c1c1c;transform:scaleX(0.8439);transform-origin:100% 0;-webkit-text-stroke:0.09px #1c1c1c;letter-spacing:0.35px;">15,00</div>
<div class="t" style="left:466.34px;top:104.70px;font-size:6.7px;color:#1c1c1c;transform:scaleX(0.8604);transform-origin:0 0;-webkit-text-stroke:0.09px #1c1c1c;letter-spacing:0.35px;">PROCEDIMENTOS CLÍNICOS</div>
<div class="t" style="left:571.74px;top:104.70px;font-size:6.7px;color:#1c1c1c;transform:scaleX(0.8606);transform-origin:0 0;-webkit-text-stroke:0.09px #1c1c1c;letter-spacing:0.35px;">PET SHOP</div>
<div class="a" style="left:37.10px;top:111.83px;width:11.10px;height:8.17px;background:#ececec"></div>
<div class="a" style="left:37.10px;top:119.40px;width:11.10px;height:0.60px;background:#d8d8d8"></div>
<svg style="left:37.3px;top:112.12px" width="10.8" height="7.6" viewBox="0 0 10.8 7.6"><rect x="0" y="0" width="10.8" height="7.6" fill="#dcf2f6"/><rect x="1" y=".7" width="8.9" height="6" rx="1.3" fill="#a6dbe8"/><rect x="3.4" y="1.4" width="6.2" height="4.9" rx="1" fill="#8ccbdc"/><ellipse cx="2.3" cy="2" rx="1.8" ry="1.4" fill="#2a7890"/><ellipse cx="5" cy="1.6" rx="1.6" ry=".8" fill="#5aa8c0"/><circle cx="3.3" cy="4.7" r=".7" fill="#7e8ea0"/><circle cx="6.8" cy="4.4" r="1.15" fill="#08141a"/></svg>
<div class="a" style="left:48.20px;top:111.83px;width:1.40px;height:8.17px;background:#bdbdbd"></div>
<div class="a" style="left:49.60px;top:111.83px;width:703.60px;height:8.17px;background:#e5e5e7"></div>
<div class="a" style="left:49.60px;top:111.83px;width:703.60px;height:0.70px;background:rgba(255,255,255,.55)"></div>
<div class="a" style="left:49.60px;top:119.20px;width:703.60px;height:0.80px;background:rgba(0,0,0,.09)"></div>
<div class="a" style="left:118.00px;top:111.83px;width:1.00px;height:8.17px;background:rgba(0,0,0,.07)"></div>
<div class="a" style="left:119.00px;top:111.83px;width:1.00px;height:8.17px;background:rgba(255,255,255,.4)"></div>
<div class="a" style="left:142.80px;top:111.83px;width:1.00px;height:8.17px;background:rgba(0,0,0,.07)"></div>
<div class="a" style="left:143.80px;top:111.83px;width:1.00px;height:8.17px;background:rgba(255,255,255,.4)"></div>
<div class="a" style="left:371.40px;top:111.83px;width:1.00px;height:8.17px;background:rgba(0,0,0,.07)"></div>
<div class="a" style="left:372.40px;top:111.83px;width:1.00px;height:8.17px;background:rgba(255,255,255,.4)"></div>
<div class="a" style="left:388.60px;top:111.83px;width:1.00px;height:8.17px;background:rgba(0,0,0,.07)"></div>
<div class="a" style="left:389.60px;top:111.83px;width:1.00px;height:8.17px;background:rgba(255,255,255,.4)"></div>
<div class="a" style="left:428.80px;top:111.83px;width:1.00px;height:8.17px;background:rgba(0,0,0,.07)"></div>
<div class="a" style="left:429.80px;top:111.83px;width:1.00px;height:8.17px;background:rgba(255,255,255,.4)"></div>
<div class="a" style="left:463.40px;top:111.83px;width:1.00px;height:8.17px;background:rgba(0,0,0,.07)"></div>
<div class="a" style="left:464.40px;top:111.83px;width:1.00px;height:8.17px;background:rgba(255,255,255,.4)"></div>
<div class="a" style="left:567.80px;top:111.83px;width:1.00px;height:8.17px;background:rgba(0,0,0,.07)"></div>
<div class="a" style="left:568.80px;top:111.83px;width:1.00px;height:8.17px;background:rgba(255,255,255,.4)"></div>
<div class="a" style="left:674.50px;top:111.83px;width:1.00px;height:8.17px;background:rgba(0,0,0,.07)"></div>
<div class="a" style="left:675.50px;top:111.83px;width:1.00px;height:8.17px;background:rgba(255,255,255,.4)"></div>
<div class="t" style="right:657.34px;top:112.88px;font-size:6.7px;color:#1c1c1c;transform:scaleX(0.8520);transform-origin:100% 0;-webkit-text-stroke:0.09px #1c1c1c;letter-spacing:0.35px;">339</div>
<div class="t" style="left:145.04px;top:112.88px;font-size:6.7px;color:#1c1c1c;transform:scaleX(0.8587);transform-origin:0 0;-webkit-text-stroke:0.09px #1c1c1c;letter-spacing:0.35px;">ACOMPANHAMENTO CLINICO PEQUENO PORTE (DIÁRIA)</div>
<div class="t" style="left:281.00px;width:200px;text-align:center;top:112.88px;font-size:6.7px;color:#1c1c1c;-webkit-text-stroke:0.09px #1c1c1c;letter-spacing:0.35px;"><span style="display:inline-block;transform:scaleX(0.8543)">UNI</span></div>
<div class="t" style="right:371.15px;top:112.88px;font-size:6.7px;color:#1c1c1c;transform:scaleX(0.8439);transform-origin:100% 0;-webkit-text-stroke:0.09px #1c1c1c;letter-spacing:0.35px;">10,00</div>
<div class="t" style="left:466.34px;top:112.88px;font-size:6.7px;color:#1c1c1c;transform:scaleX(0.8604);transform-origin:0 0;-webkit-text-stroke:0.09px #1c1c1c;letter-spacing:0.35px;">PROCEDIMENTOS CLÍNICOS</div>
<div class="t" style="left:571.74px;top:112.88px;font-size:6.7px;color:#1c1c1c;transform:scaleX(0.8606);transform-origin:0 0;-webkit-text-stroke:0.09px #1c1c1c;letter-spacing:0.35px;">PET SHOP</div>
<div class="a" style="left:37.10px;top:120.00px;width:11.10px;height:8.18px;background:#ececec"></div>
<div class="a" style="left:37.10px;top:127.58px;width:11.10px;height:0.60px;background:#d8d8d8"></div>
<svg style="left:37.3px;top:120.30px" width="10.8" height="7.6" viewBox="0 0 10.8 7.6"><rect x="0" y="0" width="10.8" height="7.6" fill="#dcf2f6"/><rect x="1" y=".7" width="8.9" height="6" rx="1.3" fill="#a6dbe8"/><rect x="3.4" y="1.4" width="6.2" height="4.9" rx="1" fill="#8ccbdc"/><ellipse cx="2.3" cy="2" rx="1.8" ry="1.4" fill="#2a7890"/><ellipse cx="5" cy="1.6" rx="1.6" ry=".8" fill="#5aa8c0"/><circle cx="3.3" cy="4.7" r=".7" fill="#7e8ea0"/><circle cx="6.8" cy="4.4" r="1.15" fill="#08141a"/></svg>
<div class="a" style="left:48.20px;top:120.00px;width:1.40px;height:8.18px;background:#bdbdbd"></div>
<div class="a" style="left:49.60px;top:120.00px;width:703.60px;height:8.18px;background:#c3dac4"></div>
<div class="a" style="left:49.60px;top:120.00px;width:703.60px;height:0.70px;background:rgba(255,255,255,.45)"></div>
<div class="a" style="left:49.60px;top:127.38px;width:703.60px;height:0.80px;background:rgba(0,0,0,.09)"></div>
<div class="a" style="left:118.00px;top:120.00px;width:1.00px;height:8.18px;background:rgba(0,0,0,.07)"></div>
<div class="a" style="left:119.00px;top:120.00px;width:1.00px;height:8.18px;background:rgba(255,255,255,.4)"></div>
<div class="a" style="left:142.80px;top:120.00px;width:1.00px;height:8.18px;background:rgba(0,0,0,.07)"></div>
<div class="a" style="left:143.80px;top:120.00px;width:1.00px;height:8.18px;background:rgba(255,255,255,.4)"></div>
<div class="a" style="left:371.40px;top:120.00px;width:1.00px;height:8.18px;background:rgba(0,0,0,.07)"></div>
<div class="a" style="left:372.40px;top:120.00px;width:1.00px;height:8.18px;background:rgba(255,255,255,.4)"></div>
<div class="a" style="left:388.60px;top:120.00px;width:1.00px;height:8.18px;background:rgba(0,0,0,.07)"></div>
<div class="a" style="left:389.60px;top:120.00px;width:1.00px;height:8.18px;background:rgba(255,255,255,.4)"></div>
<div class="a" style="left:428.80px;top:120.00px;width:1.00px;height:8.18px;background:rgba(0,0,0,.07)"></div>
<div class="a" style="left:429.80px;top:120.00px;width:1.00px;height:8.18px;background:rgba(255,255,255,.4)"></div>
<div class="a" style="left:463.40px;top:120.00px;width:1.00px;height:8.18px;background:rgba(0,0,0,.07)"></div>
<div class="a" style="left:464.40px;top:120.00px;width:1.00px;height:8.18px;background:rgba(255,255,255,.4)"></div>
<div class="a" style="left:567.80px;top:120.00px;width:1.00px;height:8.18px;background:rgba(0,0,0,.07)"></div>
<div class="a" style="left:568.80px;top:120.00px;width:1.00px;height:8.18px;background:rgba(255,255,255,.4)"></div>
<div class="a" style="left:674.50px;top:120.00px;width:1.00px;height:8.18px;background:rgba(0,0,0,.07)"></div>
<div class="a" style="left:675.50px;top:120.00px;width:1.00px;height:8.18px;background:rgba(255,255,255,.4)"></div>
<div class="t" style="right:657.34px;top:121.05px;font-size:6.7px;color:#1a2c20;transform:scaleX(0.8520);transform-origin:100% 0;-webkit-text-stroke:0.09px #1a2c20;letter-spacing:0.35px;">413</div>
<div class="t" style="left:145.04px;top:121.05px;font-size:6.7px;color:#1a2c20;transform:scaleX(0.8571);transform-origin:0 0;-webkit-text-stroke:0.09px #1a2c20;letter-spacing:0.35px;">ALLERCALM 250 ML</div>
<div class="t" style="left:281.00px;width:200px;text-align:center;top:121.05px;font-size:6.7px;color:#1a2c20;-webkit-text-stroke:0.09px #1a2c20;letter-spacing:0.35px;"><span style="display:inline-block;transform:scaleX(0.8543)">UNI</span></div>
<div class="t" style="right:371.15px;top:121.05px;font-size:6.7px;color:#1a2c20;transform:scaleX(0.8439);transform-origin:100% 0;-webkit-text-stroke:0.09px #1a2c20;letter-spacing:0.35px;">58,00</div>
<div class="t" style="right:336.55px;top:121.05px;font-size:6.7px;color:#1a2c20;transform:scaleX(0.8376);transform-origin:100% 0;-webkit-text-stroke:0.09px #1a2c20;letter-spacing:0.35px;">4,0</div>
<div class="t" style="left:466.34px;top:121.05px;font-size:6.7px;color:#1a2c20;transform:scaleX(0.8698);transform-origin:0 0;-webkit-text-stroke:0.09px #1a2c20;letter-spacing:0.35px;">SHAMPOO</div>
<div class="t" style="left:571.74px;top:121.05px;font-size:6.7px;color:#1a2c20;transform:scaleX(0.8629);transform-origin:0 0;-webkit-text-stroke:0.09px #1a2c20;letter-spacing:0.35px;">SCHERING PLOUGH</div>
<div class="a" style="left:37.10px;top:128.18px;width:11.10px;height:8.18px;background:#ececec"></div>
<div class="a" style="left:37.10px;top:135.75px;width:11.10px;height:0.60px;background:#d8d8d8"></div>
<svg style="left:37.3px;top:128.48px" width="10.8" height="7.6" viewBox="0 0 10.8 7.6"><rect x="0" y="0" width="10.8" height="7.6" fill="#dcf2f6"/><rect x="1" y=".7" width="8.9" height="6" rx="1.3" fill="#a6dbe8"/><rect x="3.4" y="1.4" width="6.2" height="4.9" rx="1" fill="#8ccbdc"/><ellipse cx="2.3" cy="2" rx="1.8" ry="1.4" fill="#2a7890"/><ellipse cx="5" cy="1.6" rx="1.6" ry=".8" fill="#5aa8c0"/><circle cx="3.3" cy="4.7" r=".7" fill="#7e8ea0"/><circle cx="6.8" cy="4.4" r="1.15" fill="#08141a"/></svg>
<div class="a" style="left:48.20px;top:128.18px;width:1.40px;height:8.18px;background:#bdbdbd"></div>
<div class="a" style="left:49.60px;top:128.18px;width:703.60px;height:8.18px;background:#fdfc6c"></div>
<div class="a" style="left:49.60px;top:128.18px;width:703.60px;height:0.70px;background:rgba(255,255,255,.45)"></div>
<div class="a" style="left:49.60px;top:135.55px;width:703.60px;height:0.80px;background:rgba(0,0,0,.09)"></div>
<div class="a" style="left:118.00px;top:128.18px;width:1.00px;height:8.18px;background:rgba(0,0,0,.07)"></div>
<div class="a" style="left:119.00px;top:128.18px;width:1.00px;height:8.18px;background:rgba(255,255,255,.4)"></div>
<div class="a" style="left:142.80px;top:128.18px;width:1.00px;height:8.18px;background:rgba(0,0,0,.07)"></div>
<div class="a" style="left:143.80px;top:128.18px;width:1.00px;height:8.18px;background:rgba(255,255,255,.4)"></div>
<div class="a" style="left:371.40px;top:128.18px;width:1.00px;height:8.18px;background:rgba(0,0,0,.07)"></div>
<div class="a" style="left:372.40px;top:128.18px;width:1.00px;height:8.18px;background:rgba(255,255,255,.4)"></div>
<div class="a" style="left:388.60px;top:128.18px;width:1.00px;height:8.18px;background:rgba(0,0,0,.07)"></div>
<div class="a" style="left:389.60px;top:128.18px;width:1.00px;height:8.18px;background:rgba(255,255,255,.4)"></div>
<div class="a" style="left:428.80px;top:128.18px;width:1.00px;height:8.18px;background:rgba(0,0,0,.07)"></div>
<div class="a" style="left:429.80px;top:128.18px;width:1.00px;height:8.18px;background:rgba(255,255,255,.4)"></div>
<div class="a" style="left:463.40px;top:128.18px;width:1.00px;height:8.18px;background:rgba(0,0,0,.07)"></div>
<div class="a" style="left:464.40px;top:128.18px;width:1.00px;height:8.18px;background:rgba(255,255,255,.4)"></div>
<div class="a" style="left:567.80px;top:128.18px;width:1.00px;height:8.18px;background:rgba(0,0,0,.07)"></div>
<div class="a" style="left:568.80px;top:128.18px;width:1.00px;height:8.18px;background:rgba(255,255,255,.4)"></div>
<div class="a" style="left:674.50px;top:128.18px;width:1.00px;height:8.18px;background:rgba(0,0,0,.07)"></div>
<div class="a" style="left:675.50px;top:128.18px;width:1.00px;height:8.18px;background:rgba(255,255,255,.4)"></div>
<div class="t" style="right:657.34px;top:129.23px;font-size:6.7px;color:#302c00;transform:scaleX(0.8520);transform-origin:100% 0;-webkit-text-stroke:0.09px #302c00;letter-spacing:0.35px;">414</div>
<div class="t" style="left:145.04px;top:129.23px;font-size:6.7px;color:#302c00;transform:scaleX(0.8558);transform-origin:0 0;-webkit-text-stroke:0.09px #302c00;letter-spacing:0.35px;">ALLERDERM PIPETA 2 ML</div>
<div class="t" style="left:281.00px;width:200px;text-align:center;top:129.23px;font-size:6.7px;color:#302c00;-webkit-text-stroke:0.09px #302c00;letter-spacing:0.35px;"><span style="display:inline-block;transform:scaleX(0.8543)">UNI</span></div>
<div class="t" style="right:371.15px;top:129.23px;font-size:6.7px;color:#302c00;transform:scaleX(0.8439);transform-origin:100% 0;-webkit-text-stroke:0.09px #302c00;letter-spacing:0.35px;">20,00</div>
<div class="t" style="right:336.55px;top:129.23px;font-size:6.7px;color:#302c00;transform:scaleX(0.8376);transform-origin:100% 0;-webkit-text-stroke:0.09px #302c00;letter-spacing:0.35px;">1,0</div>
<div class="t" style="left:466.34px;top:129.23px;font-size:6.7px;color:#302c00;transform:scaleX(0.8654);transform-origin:0 0;-webkit-text-stroke:0.09px #302c00;letter-spacing:0.35px;">MEDICAMENTOS</div>
<div class="t" style="left:571.74px;top:129.23px;font-size:6.7px;color:#302c00;transform:scaleX(0.8629);transform-origin:0 0;-webkit-text-stroke:0.09px #302c00;letter-spacing:0.35px;">SCHERING PLOUGH</div>
<div class="a" style="left:37.10px;top:136.35px;width:11.10px;height:8.18px;background:#ececec"></div>
<div class="a" style="left:37.10px;top:143.93px;width:11.10px;height:0.60px;background:#d8d8d8"></div>
<svg style="left:37.3px;top:136.65px" width="10.8" height="7.6" viewBox="0 0 10.8 7.6"><rect x="0" y="0" width="10.8" height="7.6" fill="#dcf2f6"/><rect x="1" y=".7" width="8.9" height="6" rx="1.3" fill="#a6dbe8"/><rect x="3.4" y="1.4" width="6.2" height="4.9" rx="1" fill="#8ccbdc"/><ellipse cx="2.3" cy="2" rx="1.8" ry="1.4" fill="#2a7890"/><ellipse cx="5" cy="1.6" rx="1.6" ry=".8" fill="#5aa8c0"/><circle cx="3.3" cy="4.7" r=".7" fill="#7e8ea0"/><circle cx="6.8" cy="4.4" r="1.15" fill="#08141a"/></svg>
<div class="a" style="left:48.20px;top:136.35px;width:1.40px;height:8.18px;background:#bdbdbd"></div>
<div class="a" style="left:49.60px;top:136.35px;width:703.60px;height:8.18px;background:#c3dac4"></div>
<div class="a" style="left:49.60px;top:136.35px;width:703.60px;height:0.70px;background:rgba(255,255,255,.45)"></div>
<div class="a" style="left:49.60px;top:143.72px;width:703.60px;height:0.80px;background:rgba(0,0,0,.09)"></div>
<div class="a" style="left:118.00px;top:136.35px;width:1.00px;height:8.18px;background:rgba(0,0,0,.07)"></div>
<div class="a" style="left:119.00px;top:136.35px;width:1.00px;height:8.18px;background:rgba(255,255,255,.4)"></div>
<div class="a" style="left:142.80px;top:136.35px;width:1.00px;height:8.18px;background:rgba(0,0,0,.07)"></div>
<div class="a" style="left:143.80px;top:136.35px;width:1.00px;height:8.18px;background:rgba(255,255,255,.4)"></div>
<div class="a" style="left:371.40px;top:136.35px;width:1.00px;height:8.18px;background:rgba(0,0,0,.07)"></div>
<div class="a" style="left:372.40px;top:136.35px;width:1.00px;height:8.18px;background:rgba(255,255,255,.4)"></div>
<div class="a" style="left:388.60px;top:136.35px;width:1.00px;height:8.18px;background:rgba(0,0,0,.07)"></div>
<div class="a" style="left:389.60px;top:136.35px;width:1.00px;height:8.18px;background:rgba(255,255,255,.4)"></div>
<div class="a" style="left:428.80px;top:136.35px;width:1.00px;height:8.18px;background:rgba(0,0,0,.07)"></div>
<div class="a" style="left:429.80px;top:136.35px;width:1.00px;height:8.18px;background:rgba(255,255,255,.4)"></div>
<div class="a" style="left:463.40px;top:136.35px;width:1.00px;height:8.18px;background:rgba(0,0,0,.07)"></div>
<div class="a" style="left:464.40px;top:136.35px;width:1.00px;height:8.18px;background:rgba(255,255,255,.4)"></div>
<div class="a" style="left:567.80px;top:136.35px;width:1.00px;height:8.18px;background:rgba(0,0,0,.07)"></div>
<div class="a" style="left:568.80px;top:136.35px;width:1.00px;height:8.18px;background:rgba(255,255,255,.4)"></div>
<div class="a" style="left:674.50px;top:136.35px;width:1.00px;height:8.18px;background:rgba(0,0,0,.07)"></div>
<div class="a" style="left:675.50px;top:136.35px;width:1.00px;height:8.18px;background:rgba(255,255,255,.4)"></div>
<div class="t" style="right:657.34px;top:137.40px;font-size:6.7px;color:#1a2c20;transform:scaleX(0.8520);transform-origin:100% 0;-webkit-text-stroke:0.09px #1a2c20;letter-spacing:0.35px;">415</div>
<div class="t" style="left:145.04px;top:137.40px;font-size:6.7px;color:#1a2c20;transform:scaleX(0.8558);transform-origin:0 0;-webkit-text-stroke:0.09px #1a2c20;letter-spacing:0.35px;">ALLERDERM PIPETA 4 ML</div>
<div class="t" style="left:281.00px;width:200px;text-align:center;top:137.40px;font-size:6.7px;color:#1a2c20;-webkit-text-stroke:0.09px #1a2c20;letter-spacing:0.35px;"><span style="display:inline-block;transform:scaleX(0.8543)">UNI</span></div>
<div class="t" style="right:371.15px;top:137.40px;font-size:6.7px;color:#1a2c20;transform:scaleX(0.8439);transform-origin:100% 0;-webkit-text-stroke:0.09px #1a2c20;letter-spacing:0.35px;">25,00</div>
<div class="t" style="right:336.55px;top:137.40px;font-size:6.7px;color:#1a2c20;transform:scaleX(0.8376);transform-origin:100% 0;-webkit-text-stroke:0.09px #1a2c20;letter-spacing:0.35px;">5,0</div>
<div class="t" style="left:466.34px;top:137.40px;font-size:6.7px;color:#1a2c20;transform:scaleX(0.8654);transform-origin:0 0;-webkit-text-stroke:0.09px #1a2c20;letter-spacing:0.35px;">MEDICAMENTOS</div>
<div class="t" style="left:571.74px;top:137.40px;font-size:6.7px;color:#1a2c20;transform:scaleX(0.8629);transform-origin:0 0;-webkit-text-stroke:0.09px #1a2c20;letter-spacing:0.35px;">SCHERING PLOUGH</div>
<div class="a" style="left:37.10px;top:144.53px;width:11.10px;height:8.18px;background:#ececec"></div>
<div class="a" style="left:37.10px;top:152.10px;width:11.10px;height:0.60px;background:#d8d8d8"></div>
<svg style="left:37.3px;top:144.83px" width="10.8" height="7.6" viewBox="0 0 10.8 7.6"><rect x="0" y="0" width="10.8" height="7.6" fill="#dcf2f6"/><rect x="1" y=".7" width="8.9" height="6" rx="1.3" fill="#a6dbe8"/><rect x="3.4" y="1.4" width="6.2" height="4.9" rx="1" fill="#8ccbdc"/><ellipse cx="2.3" cy="2" rx="1.8" ry="1.4" fill="#2a7890"/><ellipse cx="5" cy="1.6" rx="1.6" ry=".8" fill="#5aa8c0"/><circle cx="3.3" cy="4.7" r=".7" fill="#7e8ea0"/><circle cx="6.8" cy="4.4" r="1.15" fill="#08141a"/></svg>
<div class="a" style="left:48.20px;top:144.53px;width:1.40px;height:8.18px;background:#bdbdbd"></div>
<div class="a" style="left:49.60px;top:144.53px;width:703.60px;height:8.18px;background:#fdfc6c"></div>
<div class="a" style="left:49.60px;top:144.53px;width:703.60px;height:0.70px;background:rgba(255,255,255,.45)"></div>
<div class="a" style="left:49.60px;top:151.90px;width:703.60px;height:0.80px;background:rgba(0,0,0,.09)"></div>
<div class="a" style="left:118.00px;top:144.53px;width:1.00px;height:8.18px;background:rgba(0,0,0,.07)"></div>
<div class="a" style="left:119.00px;top:144.53px;width:1.00px;height:8.18px;background:rgba(255,255,255,.4)"></div>
<div class="a" style="left:142.80px;top:144.53px;width:1.00px;height:8.18px;background:rgba(0,0,0,.07)"></div>
<div class="a" style="left:143.80px;top:144.53px;width:1.00px;height:8.18px;background:rgba(255,255,255,.4)"></div>
<div class="a" style="left:371.40px;top:144.53px;width:1.00px;height:8.18px;background:rgba(0,0,0,.07)"></div>
<div class="a" style="left:372.40px;top:144.53px;width:1.00px;height:8.18px;background:rgba(255,255,255,.4)"></div>
<div class="a" style="left:388.60px;top:144.53px;width:1.00px;height:8.18px;background:rgba(0,0,0,.07)"></div>
<div class="a" style="left:389.60px;top:144.53px;width:1.00px;height:8.18px;background:rgba(255,255,255,.4)"></div>
<div class="a" style="left:428.80px;top:144.53px;width:1.00px;height:8.18px;background:rgba(0,0,0,.07)"></div>
<div class="a" style="left:429.80px;top:144.53px;width:1.00px;height:8.18px;background:rgba(255,255,255,.4)"></div>
<div class="a" style="left:463.40px;top:144.53px;width:1.00px;height:8.18px;background:rgba(0,0,0,.07)"></div>
<div class="a" style="left:464.40px;top:144.53px;width:1.00px;height:8.18px;background:rgba(255,255,255,.4)"></div>
<div class="a" style="left:567.80px;top:144.53px;width:1.00px;height:8.18px;background:rgba(0,0,0,.07)"></div>
<div class="a" style="left:568.80px;top:144.53px;width:1.00px;height:8.18px;background:rgba(255,255,255,.4)"></div>
<div class="a" style="left:674.50px;top:144.53px;width:1.00px;height:8.18px;background:rgba(0,0,0,.07)"></div>
<div class="a" style="left:675.50px;top:144.53px;width:1.00px;height:8.18px;background:rgba(255,255,255,.4)"></div>
<div class="t" style="right:657.34px;top:145.58px;font-size:6.7px;color:#302c00;transform:scaleX(0.8520);transform-origin:100% 0;-webkit-text-stroke:0.09px #302c00;letter-spacing:0.35px;">100</div>
<div class="t" style="left:145.04px;top:145.58px;font-size:6.7px;color:#302c00;transform:scaleX(0.8643);transform-origin:0 0;-webkit-text-stroke:0.09px #302c00;letter-spacing:0.35px;">ANESTRON SM</div>
<div class="t" style="left:281.00px;width:200px;text-align:center;top:145.58px;font-size:6.7px;color:#302c00;-webkit-text-stroke:0.09px #302c00;letter-spacing:0.35px;"><span style="display:inline-block;transform:scaleX(0.8543)">UNI</span></div>
<div class="t" style="right:371.15px;top:145.58px;font-size:6.7px;color:#302c00;transform:scaleX(0.8439);transform-origin:100% 0;-webkit-text-stroke:0.09px #302c00;letter-spacing:0.35px;">10,00</div>
<div class="t" style="right:336.55px;top:145.58px;font-size:6.7px;color:#302c00;transform:scaleX(0.8376);transform-origin:100% 0;-webkit-text-stroke:0.09px #302c00;letter-spacing:0.35px;">1,0</div>
<div class="t" style="left:466.34px;top:145.58px;font-size:6.7px;color:#302c00;transform:scaleX(0.8654);transform-origin:0 0;-webkit-text-stroke:0.09px #302c00;letter-spacing:0.35px;">MEDICAMENTOS</div>
<div class="t" style="left:571.74px;top:145.58px;font-size:6.7px;color:#302c00;transform:scaleX(0.8629);transform-origin:0 0;-webkit-text-stroke:0.09px #302c00;letter-spacing:0.35px;">SCHERING PLOUGH</div>
<div class="a" style="left:37.10px;top:152.70px;width:11.10px;height:8.18px;background:#ececec"></div>
<div class="a" style="left:37.10px;top:160.28px;width:11.10px;height:0.60px;background:#d8d8d8"></div>
<div class="a" style="left:48.20px;top:152.70px;width:1.40px;height:8.18px;background:#bdbdbd"></div>
<div class="a" style="left:49.60px;top:152.70px;width:703.60px;height:8.18px;background:#e5e5e7"></div>
<div class="a" style="left:49.60px;top:152.70px;width:703.60px;height:0.70px;background:rgba(255,255,255,.55)"></div>
<div class="a" style="left:49.60px;top:160.07px;width:703.60px;height:0.80px;background:rgba(0,0,0,.09)"></div>
<div class="a" style="left:118.00px;top:152.70px;width:1.00px;height:8.18px;background:rgba(0,0,0,.07)"></div>
<div class="a" style="left:119.00px;top:152.70px;width:1.00px;height:8.18px;background:rgba(255,255,255,.4)"></div>
<div class="a" style="left:142.80px;top:152.70px;width:1.00px;height:8.18px;background:rgba(0,0,0,.07)"></div>
<div class="a" style="left:143.80px;top:152.70px;width:1.00px;height:8.18px;background:rgba(255,255,255,.4)"></div>
<div class="a" style="left:371.40px;top:152.70px;width:1.00px;height:8.18px;background:rgba(0,0,0,.07)"></div>
<div class="a" style="left:372.40px;top:152.70px;width:1.00px;height:8.18px;background:rgba(255,255,255,.4)"></div>
<div class="a" style="left:388.60px;top:152.70px;width:1.00px;height:8.18px;background:rgba(0,0,0,.07)"></div>
<div class="a" style="left:389.60px;top:152.70px;width:1.00px;height:8.18px;background:rgba(255,255,255,.4)"></div>
<div class="a" style="left:428.80px;top:152.70px;width:1.00px;height:8.18px;background:rgba(0,0,0,.07)"></div>
<div class="a" style="left:429.80px;top:152.70px;width:1.00px;height:8.18px;background:rgba(255,255,255,.4)"></div>
<div class="a" style="left:463.40px;top:152.70px;width:1.00px;height:8.18px;background:rgba(0,0,0,.07)"></div>
<div class="a" style="left:464.40px;top:152.70px;width:1.00px;height:8.18px;background:rgba(255,255,255,.4)"></div>
<div class="a" style="left:567.80px;top:152.70px;width:1.00px;height:8.18px;background:rgba(0,0,0,.07)"></div>
<div class="a" style="left:568.80px;top:152.70px;width:1.00px;height:8.18px;background:rgba(255,255,255,.4)"></div>
<div class="a" style="left:674.50px;top:152.70px;width:1.00px;height:8.18px;background:rgba(0,0,0,.07)"></div>
<div class="a" style="left:675.50px;top:152.70px;width:1.00px;height:8.18px;background:rgba(255,255,255,.4)"></div>
<div class="t" style="right:657.34px;top:153.75px;font-size:6.7px;color:#1c1c1c;transform:scaleX(0.8520);transform-origin:100% 0;-webkit-text-stroke:0.09px #1c1c1c;letter-spacing:0.35px;">33</div>
<div class="t" style="left:145.04px;top:153.75px;font-size:6.7px;color:#1c1c1c;transform:scaleX(0.8591);transform-origin:0 0;-webkit-text-stroke:0.09px #1c1c1c;letter-spacing:0.35px;">ANIDOG ADULTO KG</div>
<div class="t" style="left:281.00px;width:200px;text-align:center;top:153.75px;font-size:6.7px;color:#1c1c1c;-webkit-text-stroke:0.09px #1c1c1c;letter-spacing:0.35px;"><span style="display:inline-block;transform:scaleX(0.8692)">KG</span></div>
<div class="t" style="right:371.15px;top:153.75px;font-size:6.7px;color:#1c1c1c;transform:scaleX(0.8416);transform-origin:100% 0;-webkit-text-stroke:0.09px #1c1c1c;letter-spacing:0.35px;">1,90</div>
<div class="t" style="right:336.55px;top:153.75px;font-size:6.7px;color:#1c1c1c;transform:scaleX(0.8376);transform-origin:100% 0;-webkit-text-stroke:0.09px #1c1c1c;letter-spacing:0.35px;">9,8</div>
<div class="t" style="left:466.34px;top:153.75px;font-size:6.7px;color:#1c1c1c;transform:scaleX(0.8665);transform-origin:0 0;-webkit-text-stroke:0.09px #1c1c1c;letter-spacing:0.35px;">RACAO CACHORRO</div>
<div class="t" style="left:571.74px;top:153.75px;font-size:6.7px;color:#1c1c1c;transform:scaleX(0.8554);transform-origin:0 0;-webkit-text-stroke:0.09px #1c1c1c;letter-spacing:0.35px;">PIAN</div>
<div class="a" style="left:37.10px;top:160.88px;width:11.10px;height:8.18px;background:#ececec"></div>
<div class="a" style="left:37.10px;top:168.45px;width:11.10px;height:0.60px;background:#d8d8d8"></div>
<div class="a" style="left:48.20px;top:160.88px;width:1.40px;height:8.18px;background:#bdbdbd"></div>
<div class="a" style="left:49.60px;top:160.88px;width:703.60px;height:8.18px;background:#c3dac4"></div>
<div class="a" style="left:49.60px;top:160.88px;width:703.60px;height:0.70px;background:rgba(255,255,255,.45)"></div>
<div class="a" style="left:49.60px;top:168.25px;width:703.60px;height:0.80px;background:rgba(0,0,0,.09)"></div>
<div class="a" style="left:118.00px;top:160.88px;width:1.00px;height:8.18px;background:rgba(0,0,0,.07)"></div>
<div class="a" style="left:119.00px;top:160.88px;width:1.00px;height:8.18px;background:rgba(255,255,255,.4)"></div>
<div class="a" style="left:142.80px;top:160.88px;width:1.00px;height:8.18px;background:rgba(0,0,0,.07)"></div>
<div class="a" style="left:143.80px;top:160.88px;width:1.00px;height:8.18px;background:rgba(255,255,255,.4)"></div>
<div class="a" style="left:371.40px;top:160.88px;width:1.00px;height:8.18px;background:rgba(0,0,0,.07)"></div>
<div class="a" style="left:372.40px;top:160.88px;width:1.00px;height:8.18px;background:rgba(255,255,255,.4)"></div>
<div class="a" style="left:388.60px;top:160.88px;width:1.00px;height:8.18px;background:rgba(0,0,0,.07)"></div>
<div class="a" style="left:389.60px;top:160.88px;width:1.00px;height:8.18px;background:rgba(255,255,255,.4)"></div>
<div class="a" style="left:428.80px;top:160.88px;width:1.00px;height:8.18px;background:rgba(0,0,0,.07)"></div>
<div class="a" style="left:429.80px;top:160.88px;width:1.00px;height:8.18px;background:rgba(255,255,255,.4)"></div>
<div class="a" style="left:463.40px;top:160.88px;width:1.00px;height:8.18px;background:rgba(0,0,0,.07)"></div>
<div class="a" style="left:464.40px;top:160.88px;width:1.00px;height:8.18px;background:rgba(255,255,255,.4)"></div>
<div class="a" style="left:567.80px;top:160.88px;width:1.00px;height:8.18px;background:rgba(0,0,0,.07)"></div>
<div class="a" style="left:568.80px;top:160.88px;width:1.00px;height:8.18px;background:rgba(255,255,255,.4)"></div>
<div class="a" style="left:674.50px;top:160.88px;width:1.00px;height:8.18px;background:rgba(0,0,0,.07)"></div>
<div class="a" style="left:675.50px;top:160.88px;width:1.00px;height:8.18px;background:rgba(255,255,255,.4)"></div>
<div class="t" style="right:657.34px;top:161.93px;font-size:6.7px;color:#1a2c20;transform:scaleX(0.8520);transform-origin:100% 0;-webkit-text-stroke:0.09px #1a2c20;letter-spacing:0.35px;">34</div>
<div class="t" style="left:145.04px;top:161.93px;font-size:6.7px;color:#1a2c20;transform:scaleX(0.8571);transform-origin:0 0;-webkit-text-stroke:0.09px #1a2c20;letter-spacing:0.35px;">ANIDOG ADULTO SACO 15 KG</div>
<div class="t" style="left:281.00px;width:200px;text-align:center;top:161.93px;font-size:6.7px;color:#1a2c20;-webkit-text-stroke:0.09px #1a2c20;letter-spacing:0.35px;"><span style="display:inline-block;transform:scaleX(0.8543)">UNI</span></div>
<div class="t" style="right:371.15px;top:161.93px;font-size:6.7px;color:#1a2c20;transform:scaleX(0.8439);transform-origin:100% 0;-webkit-text-stroke:0.09px #1a2c20;letter-spacing:0.35px;">27,00</div>
<div class="t" style="right:336.55px;top:161.93px;font-size:6.7px;color:#1a2c20;transform:scaleX(0.8376);transform-origin:100% 0;-webkit-text-stroke:0.09px #1a2c20;letter-spacing:0.35px;">6,0</div>
<div class="t" style="left:466.34px;top:161.93px;font-size:6.7px;color:#1a2c20;transform:scaleX(0.8665);transform-origin:0 0;-webkit-text-stroke:0.09px #1a2c20;letter-spacing:0.35px;">RACAO CACHORRO</div>
<div class="t" style="left:571.74px;top:161.93px;font-size:6.7px;color:#1a2c20;transform:scaleX(0.8554);transform-origin:0 0;-webkit-text-stroke:0.09px #1a2c20;letter-spacing:0.35px;">PIAN</div>
<div class="a" style="left:37.10px;top:169.05px;width:11.10px;height:8.18px;background:#ececec"></div>
<div class="a" style="left:37.10px;top:176.63px;width:11.10px;height:0.60px;background:#d8d8d8"></div>
<div class="a" style="left:48.20px;top:169.05px;width:1.40px;height:8.18px;background:#bdbdbd"></div>
<div class="a" style="left:49.60px;top:169.05px;width:703.60px;height:8.18px;background:#c3dac4"></div>
<div class="a" style="left:49.60px;top:169.05px;width:703.60px;height:0.70px;background:rgba(255,255,255,.45)"></div>
<div class="a" style="left:49.60px;top:176.43px;width:703.60px;height:0.80px;background:rgba(0,0,0,.09)"></div>
<div class="a" style="left:118.00px;top:169.05px;width:1.00px;height:8.18px;background:rgba(0,0,0,.07)"></div>
<div class="a" style="left:119.00px;top:169.05px;width:1.00px;height:8.18px;background:rgba(255,255,255,.4)"></div>
<div class="a" style="left:142.80px;top:169.05px;width:1.00px;height:8.18px;background:rgba(0,0,0,.07)"></div>
<div class="a" style="left:143.80px;top:169.05px;width:1.00px;height:8.18px;background:rgba(255,255,255,.4)"></div>
<div class="a" style="left:371.40px;top:169.05px;width:1.00px;height:8.18px;background:rgba(0,0,0,.07)"></div>
<div class="a" style="left:372.40px;top:169.05px;width:1.00px;height:8.18px;background:rgba(255,255,255,.4)"></div>
<div class="a" style="left:388.60px;top:169.05px;width:1.00px;height:8.18px;background:rgba(0,0,0,.07)"></div>
<div class="a" style="left:389.60px;top:169.05px;width:1.00px;height:8.18px;background:rgba(255,255,255,.4)"></div>
<div class="a" style="left:428.80px;top:169.05px;width:1.00px;height:8.18px;background:rgba(0,0,0,.07)"></div>
<div class="a" style="left:429.80px;top:169.05px;width:1.00px;height:8.18px;background:rgba(255,255,255,.4)"></div>
<div class="a" style="left:463.40px;top:169.05px;width:1.00px;height:8.18px;background:rgba(0,0,0,.07)"></div>
<div class="a" style="left:464.40px;top:169.05px;width:1.00px;height:8.18px;background:rgba(255,255,255,.4)"></div>
<div class="a" style="left:567.80px;top:169.05px;width:1.00px;height:8.18px;background:rgba(0,0,0,.07)"></div>
<div class="a" style="left:568.80px;top:169.05px;width:1.00px;height:8.18px;background:rgba(255,255,255,.4)"></div>
<div class="a" style="left:674.50px;top:169.05px;width:1.00px;height:8.18px;background:rgba(0,0,0,.07)"></div>
<div class="a" style="left:675.50px;top:169.05px;width:1.00px;height:8.18px;background:rgba(255,255,255,.4)"></div>
<div class="t" style="right:657.34px;top:170.10px;font-size:6.7px;color:#1a2c20;transform:scaleX(0.8520);transform-origin:100% 0;-webkit-text-stroke:0.09px #1a2c20;letter-spacing:0.35px;">35</div>
<div class="t" style="left:145.04px;top:170.10px;font-size:6.7px;color:#1a2c20;transform:scaleX(0.8571);transform-origin:0 0;-webkit-text-stroke:0.09px #1a2c20;letter-spacing:0.35px;">ANIDOG ADULTO SACO 25 KG</div>
<div class="t" style="left:281.00px;width:200px;text-align:center;top:170.10px;font-size:6.7px;color:#1a2c20;-webkit-text-stroke:0.09px #1a2c20;letter-spacing:0.35px;"><span style="display:inline-block;transform:scaleX(0.8543)">UNI</span></div>
<div class="t" style="right:371.15px;top:170.10px;font-size:6.7px;color:#1a2c20;transform:scaleX(0.8439);transform-origin:100% 0;-webkit-text-stroke:0.09px #1a2c20;letter-spacing:0.35px;">45,00</div>
<div class="t" style="right:336.55px;top:170.10px;font-size:6.7px;color:#1a2c20;transform:scaleX(0.8376);transform-origin:100% 0;-webkit-text-stroke:0.09px #1a2c20;letter-spacing:0.35px;">3,0</div>
<div class="t" style="left:466.34px;top:170.10px;font-size:6.7px;color:#1a2c20;transform:scaleX(0.8665);transform-origin:0 0;-webkit-text-stroke:0.09px #1a2c20;letter-spacing:0.35px;">RACAO CACHORRO</div>
<div class="t" style="left:571.74px;top:170.10px;font-size:6.7px;color:#1a2c20;transform:scaleX(0.8554);transform-origin:0 0;-webkit-text-stroke:0.09px #1a2c20;letter-spacing:0.35px;">PIAN</div>
<div class="a" style="left:37.10px;top:177.23px;width:11.10px;height:8.18px;background:#ececec"></div>
<div class="a" style="left:37.10px;top:184.80px;width:11.10px;height:0.60px;background:#d8d8d8"></div>
<div class="a" style="left:48.20px;top:177.23px;width:1.40px;height:8.18px;background:#bdbdbd"></div>
<div class="a" style="left:49.60px;top:177.23px;width:703.60px;height:8.18px;background:#e5e5e7"></div>
<div class="a" style="left:49.60px;top:177.23px;width:703.60px;height:0.70px;background:rgba(255,255,255,.55)"></div>
<div class="a" style="left:49.60px;top:184.60px;width:703.60px;height:0.80px;background:rgba(0,0,0,.09)"></div>
<div class="a" style="left:118.00px;top:177.23px;width:1.00px;height:8.18px;background:rgba(0,0,0,.07)"></div>
<div class="a" style="left:119.00px;top:177.23px;width:1.00px;height:8.18px;background:rgba(255,255,255,.4)"></div>
<div class="a" style="left:142.80px;top:177.23px;width:1.00px;height:8.18px;background:rgba(0,0,0,.07)"></div>
<div class="a" style="left:143.80px;top:177.23px;width:1.00px;height:8.18px;background:rgba(255,255,255,.4)"></div>
<div class="a" style="left:371.40px;top:177.23px;width:1.00px;height:8.18px;background:rgba(0,0,0,.07)"></div>
<div class="a" style="left:372.40px;top:177.23px;width:1.00px;height:8.18px;background:rgba(255,255,255,.4)"></div>
<div class="a" style="left:388.60px;top:177.23px;width:1.00px;height:8.18px;background:rgba(0,0,0,.07)"></div>
<div class="a" style="left:389.60px;top:177.23px;width:1.00px;height:8.18px;background:rgba(255,255,255,.4)"></div>
<div class="a" style="left:428.80px;top:177.23px;width:1.00px;height:8.18px;background:rgba(0,0,0,.07)"></div>
<div class="a" style="left:429.80px;top:177.23px;width:1.00px;height:8.18px;background:rgba(255,255,255,.4)"></div>
<div class="a" style="left:463.40px;top:177.23px;width:1.00px;height:8.18px;background:rgba(0,0,0,.07)"></div>
<div class="a" style="left:464.40px;top:177.23px;width:1.00px;height:8.18px;background:rgba(255,255,255,.4)"></div>
<div class="a" style="left:567.80px;top:177.23px;width:1.00px;height:8.18px;background:rgba(0,0,0,.07)"></div>
<div class="a" style="left:568.80px;top:177.23px;width:1.00px;height:8.18px;background:rgba(255,255,255,.4)"></div>
<div class="a" style="left:674.50px;top:177.23px;width:1.00px;height:8.18px;background:rgba(0,0,0,.07)"></div>
<div class="a" style="left:675.50px;top:177.23px;width:1.00px;height:8.18px;background:rgba(255,255,255,.4)"></div>
<div class="t" style="right:657.34px;top:178.28px;font-size:6.7px;color:#1c1c1c;transform:scaleX(0.8520);transform-origin:100% 0;-webkit-text-stroke:0.09px #1c1c1c;letter-spacing:0.35px;">187</div>
<div class="t" style="left:145.04px;top:178.28px;font-size:6.7px;color:#1c1c1c;transform:scaleX(0.8571);transform-origin:0 0;-webkit-text-stroke:0.09px #1c1c1c;letter-spacing:0.35px;">ANIDOG FILHOTE KG</div>
<div class="t" style="left:281.00px;width:200px;text-align:center;top:178.28px;font-size:6.7px;color:#1c1c1c;-webkit-text-stroke:0.09px #1c1c1c;letter-spacing:0.35px;"><span style="display:inline-block;transform:scaleX(0.8692)">KG</span></div>
<div class="t" style="right:371.15px;top:178.28px;font-size:6.7px;color:#1c1c1c;transform:scaleX(0.8416);transform-origin:100% 0;-webkit-text-stroke:0.09px #1c1c1c;letter-spacing:0.35px;">3,60</div>
<div class="t" style="right:336.55px;top:178.28px;font-size:6.7px;color:#1c1c1c;transform:scaleX(0.8384);transform-origin:100% 0;-webkit-text-stroke:0.09px #1c1c1c;letter-spacing:0.35px;">11,5</div>
<div class="t" style="left:466.34px;top:178.28px;font-size:6.7px;color:#1c1c1c;transform:scaleX(0.8665);transform-origin:0 0;-webkit-text-stroke:0.09px #1c1c1c;letter-spacing:0.35px;">RACAO CACHORRO</div>
<div class="t" style="left:571.74px;top:178.28px;font-size:6.7px;color:#1c1c1c;transform:scaleX(0.8554);transform-origin:0 0;-webkit-text-stroke:0.09px #1c1c1c;letter-spacing:0.35px;">PIAN</div>
<div class="a" style="left:37.10px;top:185.40px;width:11.10px;height:8.18px;background:#ececec"></div>
<div class="a" style="left:37.10px;top:192.98px;width:11.10px;height:0.60px;background:#d8d8d8"></div>
<div class="a" style="left:48.20px;top:185.40px;width:1.40px;height:8.18px;background:#bdbdbd"></div>
<div class="a" style="left:49.60px;top:185.40px;width:703.60px;height:8.18px;background:#c3dac4"></div>
<div class="a" style="left:49.60px;top:185.40px;width:703.60px;height:0.70px;background:rgba(255,255,255,.45)"></div>
<div class="a" style="left:49.60px;top:192.78px;width:703.60px;height:0.80px;background:rgba(0,0,0,.09)"></div>
<div class="a" style="left:118.00px;top:185.40px;width:1.00px;height:8.18px;background:rgba(0,0,0,.07)"></div>
<div class="a" style="left:119.00px;top:185.40px;width:1.00px;height:8.18px;background:rgba(255,255,255,.4)"></div>
<div class="a" style="left:142.80px;top:185.40px;width:1.00px;height:8.18px;background:rgba(0,0,0,.07)"></div>
<div class="a" style="left:143.80px;top:185.40px;width:1.00px;height:8.18px;background:rgba(255,255,255,.4)"></div>
<div class="a" style="left:371.40px;top:185.40px;width:1.00px;height:8.18px;background:rgba(0,0,0,.07)"></div>
<div class="a" style="left:372.40px;top:185.40px;width:1.00px;height:8.18px;background:rgba(255,255,255,.4)"></div>
<div class="a" style="left:388.60px;top:185.40px;width:1.00px;height:8.18px;background:rgba(0,0,0,.07)"></div>
<div class="a" style="left:389.60px;top:185.40px;width:1.00px;height:8.18px;background:rgba(255,255,255,.4)"></div>
<div class="a" style="left:428.80px;top:185.40px;width:1.00px;height:8.18px;background:rgba(0,0,0,.07)"></div>
<div class="a" style="left:429.80px;top:185.40px;width:1.00px;height:8.18px;background:rgba(255,255,255,.4)"></div>
<div class="a" style="left:463.40px;top:185.40px;width:1.00px;height:8.18px;background:rgba(0,0,0,.07)"></div>
<div class="a" style="left:464.40px;top:185.40px;width:1.00px;height:8.18px;background:rgba(255,255,255,.4)"></div>
<div class="a" style="left:567.80px;top:185.40px;width:1.00px;height:8.18px;background:rgba(0,0,0,.07)"></div>
<div class="a" style="left:568.80px;top:185.40px;width:1.00px;height:8.18px;background:rgba(255,255,255,.4)"></div>
<div class="a" style="left:674.50px;top:185.40px;width:1.00px;height:8.18px;background:rgba(0,0,0,.07)"></div>
<div class="a" style="left:675.50px;top:185.40px;width:1.00px;height:8.18px;background:rgba(255,255,255,.4)"></div>
<div class="t" style="right:657.34px;top:186.45px;font-size:6.7px;color:#1a2c20;transform:scaleX(0.8520);transform-origin:100% 0;-webkit-text-stroke:0.09px #1a2c20;letter-spacing:0.35px;">188</div>
<div class="t" style="left:145.04px;top:186.45px;font-size:6.7px;color:#1a2c20;transform:scaleX(0.8558);transform-origin:0 0;-webkit-text-stroke:0.09px #1a2c20;letter-spacing:0.35px;">ANIDOG FILHOTE SACO 25 KG</div>
<div class="t" style="left:281.00px;width:200px;text-align:center;top:186.45px;font-size:6.7px;color:#1a2c20;-webkit-text-stroke:0.09px #1a2c20;letter-spacing:0.35px;"><span style="display:inline-block;transform:scaleX(0.8543)">UNI</span></div>
<div class="t" style="right:371.15px;top:186.45px;font-size:6.7px;color:#1a2c20;transform:scaleX(0.8439);transform-origin:100% 0;-webkit-text-stroke:0.09px #1a2c20;letter-spacing:0.35px;">80,00</div>
<div class="t" style="right:336.55px;top:186.45px;font-size:6.7px;color:#1a2c20;transform:scaleX(0.8376);transform-origin:100% 0;-webkit-text-stroke:0.09px #1a2c20;letter-spacing:0.35px;">5,0</div>
<div class="t" style="left:466.34px;top:186.45px;font-size:6.7px;color:#1a2c20;transform:scaleX(0.8665);transform-origin:0 0;-webkit-text-stroke:0.09px #1a2c20;letter-spacing:0.35px;">RACAO CACHORRO</div>
<div class="t" style="left:571.74px;top:186.45px;font-size:6.7px;color:#1a2c20;transform:scaleX(0.8554);transform-origin:0 0;-webkit-text-stroke:0.09px #1a2c20;letter-spacing:0.35px;">PIAN</div>
<div class="a" style="left:37.10px;top:193.57px;width:11.10px;height:8.18px;background:#ececec"></div>
<div class="a" style="left:37.10px;top:201.15px;width:11.10px;height:0.60px;background:#d8d8d8"></div>
<div class="a" style="left:48.20px;top:193.57px;width:1.40px;height:8.18px;background:#bdbdbd"></div>
<div class="a" style="left:49.60px;top:193.57px;width:703.60px;height:8.18px;background:#fdfc6c"></div>
<div class="a" style="left:49.60px;top:193.57px;width:703.60px;height:0.70px;background:rgba(255,255,255,.45)"></div>
<div class="a" style="left:49.60px;top:200.95px;width:703.60px;height:0.80px;background:rgba(0,0,0,.09)"></div>
<div class="a" style="left:118.00px;top:193.57px;width:1.00px;height:8.18px;background:rgba(0,0,0,.07)"></div>
<div class="a" style="left:119.00px;top:193.57px;width:1.00px;height:8.18px;background:rgba(255,255,255,.4)"></div>
<div class="a" style="left:142.80px;top:193.57px;width:1.00px;height:8.18px;background:rgba(0,0,0,.07)"></div>
<div class="a" style="left:143.80px;top:193.57px;width:1.00px;height:8.18px;background:rgba(255,255,255,.4)"></div>
<div class="a" style="left:371.40px;top:193.57px;width:1.00px;height:8.18px;background:rgba(0,0,0,.07)"></div>
<div class="a" style="left:372.40px;top:193.57px;width:1.00px;height:8.18px;background:rgba(255,255,255,.4)"></div>
<div class="a" style="left:388.60px;top:193.57px;width:1.00px;height:8.18px;background:rgba(0,0,0,.07)"></div>
<div class="a" style="left:389.60px;top:193.57px;width:1.00px;height:8.18px;background:rgba(255,255,255,.4)"></div>
<div class="a" style="left:428.80px;top:193.57px;width:1.00px;height:8.18px;background:rgba(0,0,0,.07)"></div>
<div class="a" style="left:429.80px;top:193.57px;width:1.00px;height:8.18px;background:rgba(255,255,255,.4)"></div>
<div class="a" style="left:463.40px;top:193.57px;width:1.00px;height:8.18px;background:rgba(0,0,0,.07)"></div>
<div class="a" style="left:464.40px;top:193.57px;width:1.00px;height:8.18px;background:rgba(255,255,255,.4)"></div>
<div class="a" style="left:567.80px;top:193.57px;width:1.00px;height:8.18px;background:rgba(0,0,0,.07)"></div>
<div class="a" style="left:568.80px;top:193.57px;width:1.00px;height:8.18px;background:rgba(255,255,255,.4)"></div>
<div class="a" style="left:674.50px;top:193.57px;width:1.00px;height:8.18px;background:rgba(0,0,0,.07)"></div>
<div class="a" style="left:675.50px;top:193.57px;width:1.00px;height:8.18px;background:rgba(255,255,255,.4)"></div>
<div class="t" style="right:657.34px;top:194.62px;font-size:6.7px;color:#302c00;transform:scaleX(0.8520);transform-origin:100% 0;-webkit-text-stroke:0.09px #302c00;letter-spacing:0.35px;">324</div>
<div class="t" style="left:145.04px;top:194.62px;font-size:6.7px;color:#302c00;transform:scaleX(0.8560);transform-origin:0 0;-webkit-text-stroke:0.09px #302c00;letter-spacing:0.35px;">ANIDOG FILHOTE SACO 8 KG</div>
<div class="t" style="left:281.00px;width:200px;text-align:center;top:194.62px;font-size:6.7px;color:#302c00;-webkit-text-stroke:0.09px #302c00;letter-spacing:0.35px;"><span style="display:inline-block;transform:scaleX(0.8543)">UNI</span></div>
<div class="t" style="right:371.15px;top:194.62px;font-size:6.7px;color:#302c00;transform:scaleX(0.8439);transform-origin:100% 0;-webkit-text-stroke:0.09px #302c00;letter-spacing:0.35px;">27,00</div>
<div class="t" style="right:336.55px;top:194.62px;font-size:6.7px;color:#302c00;transform:scaleX(0.8376);transform-origin:100% 0;-webkit-text-stroke:0.09px #302c00;letter-spacing:0.35px;">2,0</div>
<div class="t" style="left:466.34px;top:194.62px;font-size:6.7px;color:#302c00;transform:scaleX(0.8665);transform-origin:0 0;-webkit-text-stroke:0.09px #302c00;letter-spacing:0.35px;">RACAO CACHORRO</div>
<div class="t" style="left:571.74px;top:194.62px;font-size:6.7px;color:#302c00;transform:scaleX(0.8554);transform-origin:0 0;-webkit-text-stroke:0.09px #302c00;letter-spacing:0.35px;">PIAN</div>
<div class="a" style="left:37.10px;top:201.75px;width:11.10px;height:8.18px;background:#ececec"></div>
<div class="a" style="left:37.10px;top:209.33px;width:11.10px;height:0.60px;background:#d8d8d8"></div>
<svg style="left:37.3px;top:202.05px" width="10.8" height="7.6" viewBox="0 0 10.8 7.6"><rect x="0" y="0" width="10.8" height="7.6" fill="#dcf2f6"/><rect x="1" y=".7" width="8.9" height="6" rx="1.3" fill="#a6dbe8"/><rect x="3.4" y="1.4" width="6.2" height="4.9" rx="1" fill="#8ccbdc"/><ellipse cx="2.3" cy="2" rx="1.8" ry="1.4" fill="#2a7890"/><ellipse cx="5" cy="1.6" rx="1.6" ry=".8" fill="#5aa8c0"/><circle cx="3.3" cy="4.7" r=".7" fill="#7e8ea0"/><circle cx="6.8" cy="4.4" r="1.15" fill="#08141a"/></svg>
<div class="a" style="left:48.20px;top:201.75px;width:1.40px;height:8.18px;background:#bdbdbd"></div>
<div class="a" style="left:49.60px;top:201.75px;width:703.60px;height:8.18px;background:#c3dac4"></div>
<div class="a" style="left:49.60px;top:201.75px;width:703.60px;height:0.70px;background:rgba(255,255,255,.45)"></div>
<div class="a" style="left:49.60px;top:209.12px;width:703.60px;height:0.80px;background:rgba(0,0,0,.09)"></div>
<div class="a" style="left:118.00px;top:201.75px;width:1.00px;height:8.18px;background:rgba(0,0,0,.07)"></div>
<div class="a" style="left:119.00px;top:201.75px;width:1.00px;height:8.18px;background:rgba(255,255,255,.4)"></div>
<div class="a" style="left:142.80px;top:201.75px;width:1.00px;height:8.18px;background:rgba(0,0,0,.07)"></div>
<div class="a" style="left:143.80px;top:201.75px;width:1.00px;height:8.18px;background:rgba(255,255,255,.4)"></div>
<div class="a" style="left:371.40px;top:201.75px;width:1.00px;height:8.18px;background:rgba(0,0,0,.07)"></div>
<div class="a" style="left:372.40px;top:201.75px;width:1.00px;height:8.18px;background:rgba(255,255,255,.4)"></div>
<div class="a" style="left:388.60px;top:201.75px;width:1.00px;height:8.18px;background:rgba(0,0,0,.07)"></div>
<div class="a" style="left:389.60px;top:201.75px;width:1.00px;height:8.18px;background:rgba(255,255,255,.4)"></div>
<div class="a" style="left:428.80px;top:201.75px;width:1.00px;height:8.18px;background:rgba(0,0,0,.07)"></div>
<div class="a" style="left:429.80px;top:201.75px;width:1.00px;height:8.18px;background:rgba(255,255,255,.4)"></div>
<div class="a" style="left:463.40px;top:201.75px;width:1.00px;height:8.18px;background:rgba(0,0,0,.07)"></div>
<div class="a" style="left:464.40px;top:201.75px;width:1.00px;height:8.18px;background:rgba(255,255,255,.4)"></div>
<div class="a" style="left:567.80px;top:201.75px;width:1.00px;height:8.18px;background:rgba(0,0,0,.07)"></div>
<div class="a" style="left:568.80px;top:201.75px;width:1.00px;height:8.18px;background:rgba(255,255,255,.4)"></div>
<div class="a" style="left:674.50px;top:201.75px;width:1.00px;height:8.18px;background:rgba(0,0,0,.07)"></div>
<div class="a" style="left:675.50px;top:201.75px;width:1.00px;height:8.18px;background:rgba(255,255,255,.4)"></div>
<div class="t" style="right:657.34px;top:202.80px;font-size:6.7px;color:#1a2c20;transform:scaleX(0.8520);transform-origin:100% 0;-webkit-text-stroke:0.09px #1a2c20;letter-spacing:0.35px;">101</div>
<div class="t" style="left:145.04px;top:202.80px;font-size:6.7px;color:#1a2c20;transform:scaleX(0.8559);transform-origin:0 0;-webkit-text-stroke:0.09px #1a2c20;letter-spacing:0.35px;">ANTIDIARRÉICO LABOVET 10 GR</div>
<div class="t" style="left:281.00px;width:200px;text-align:center;top:202.80px;font-size:6.7px;color:#1a2c20;-webkit-text-stroke:0.09px #1a2c20;letter-spacing:0.35px;"><span style="display:inline-block;transform:scaleX(0.8543)">UNI</span></div>
<div class="t" style="right:371.15px;top:202.80px;font-size:6.7px;color:#1a2c20;transform:scaleX(0.8416);transform-origin:100% 0;-webkit-text-stroke:0.09px #1a2c20;letter-spacing:0.35px;">5,00</div>
<div class="t" style="right:336.55px;top:202.80px;font-size:6.7px;color:#1a2c20;transform:scaleX(0.8416);transform-origin:100% 0;-webkit-text-stroke:0.09px #1a2c20;letter-spacing:0.35px;">17,0</div>
<div class="t" style="left:466.34px;top:202.80px;font-size:6.7px;color:#1a2c20;transform:scaleX(0.8654);transform-origin:0 0;-webkit-text-stroke:0.09px #1a2c20;letter-spacing:0.35px;">MEDICAMENTOS</div>
<div class="t" style="left:571.74px;top:202.80px;font-size:6.7px;color:#1a2c20;transform:scaleX(0.8629);transform-origin:0 0;-webkit-text-stroke:0.09px #1a2c20;letter-spacing:0.35px;">SCHERING PLOUGH</div>
<div class="a" style="left:37.10px;top:209.93px;width:11.10px;height:8.18px;background:#ececec"></div>
<div class="a" style="left:37.10px;top:217.50px;width:11.10px;height:0.60px;background:#d8d8d8"></div>
<svg style="left:37.3px;top:210.23px" width="10.8" height="7.6" viewBox="0 0 10.8 7.6"><rect x="0" y="0" width="10.8" height="7.6" fill="#dcf2f6"/><rect x="1" y=".7" width="8.9" height="6" rx="1.3" fill="#a6dbe8"/><rect x="3.4" y="1.4" width="6.2" height="4.9" rx="1" fill="#8ccbdc"/><ellipse cx="2.3" cy="2" rx="1.8" ry="1.4" fill="#2a7890"/><ellipse cx="5" cy="1.6" rx="1.6" ry=".8" fill="#5aa8c0"/><circle cx="3.3" cy="4.7" r=".7" fill="#7e8ea0"/><circle cx="6.8" cy="4.4" r="1.15" fill="#08141a"/></svg>
<div class="a" style="left:48.20px;top:209.93px;width:1.40px;height:8.18px;background:#bdbdbd"></div>
<div class="a" style="left:49.60px;top:209.93px;width:703.60px;height:8.18px;background:#c3dac4"></div>
<div class="a" style="left:49.60px;top:209.93px;width:703.60px;height:0.70px;background:rgba(255,255,255,.45)"></div>
<div class="a" style="left:49.60px;top:217.30px;width:703.60px;height:0.80px;background:rgba(0,0,0,.09)"></div>
<div class="a" style="left:118.00px;top:209.93px;width:1.00px;height:8.18px;background:rgba(0,0,0,.07)"></div>
<div class="a" style="left:119.00px;top:209.93px;width:1.00px;height:8.18px;background:rgba(255,255,255,.4)"></div>
<div class="a" style="left:142.80px;top:209.93px;width:1.00px;height:8.18px;background:rgba(0,0,0,.07)"></div>
<div class="a" style="left:143.80px;top:209.93px;width:1.00px;height:8.18px;background:rgba(255,255,255,.4)"></div>
<div class="a" style="left:371.40px;top:209.93px;width:1.00px;height:8.18px;background:rgba(0,0,0,.07)"></div>
<div class="a" style="left:372.40px;top:209.93px;width:1.00px;height:8.18px;background:rgba(255,255,255,.4)"></div>
<div class="a" style="left:388.60px;top:209.93px;width:1.00px;height:8.18px;background:rgba(0,0,0,.07)"></div>
<div class="a" style="left:389.60px;top:209.93px;width:1.00px;height:8.18px;background:rgba(255,255,255,.4)"></div>
<div class="a" style="left:428.80px;top:209.93px;width:1.00px;height:8.18px;background:rgba(0,0,0,.07)"></div>
<div class="a" style="left:429.80px;top:209.93px;width:1.00px;height:8.18px;background:rgba(255,255,255,.4)"></div>
<div class="a" style="left:463.40px;top:209.93px;width:1.00px;height:8.18px;background:rgba(0,0,0,.07)"></div>
<div class="a" style="left:464.40px;top:209.93px;width:1.00px;height:8.18px;background:rgba(255,255,255,.4)"></div>
<div class="a" style="left:567.80px;top:209.93px;width:1.00px;height:8.18px;background:rgba(0,0,0,.07)"></div>
<div class="a" style="left:568.80px;top:209.93px;width:1.00px;height:8.18px;background:rgba(255,255,255,.4)"></div>
<div class="a" style="left:674.50px;top:209.93px;width:1.00px;height:8.18px;background:rgba(0,0,0,.07)"></div>
<div class="a" style="left:675.50px;top:209.93px;width:1.00px;height:8.18px;background:rgba(255,255,255,.4)"></div>
<div class="t" style="right:657.34px;top:210.98px;font-size:6.7px;color:#1a2c20;transform:scaleX(0.8520);transform-origin:100% 0;-webkit-text-stroke:0.09px #1a2c20;letter-spacing:0.35px;">349</div>
<div class="t" style="left:145.04px;top:210.98px;font-size:6.7px;color:#1a2c20;transform:scaleX(0.8593);transform-origin:0 0;-webkit-text-stroke:0.09px #1a2c20;letter-spacing:0.35px;">APLICAÇÃO ADRENALINA AMPOLA</div>
<div class="t" style="left:281.00px;width:200px;text-align:center;top:210.98px;font-size:6.7px;color:#1a2c20;-webkit-text-stroke:0.09px #1a2c20;letter-spacing:0.35px;"><span style="display:inline-block;transform:scaleX(0.8543)">UNI</span></div>
<div class="t" style="right:371.15px;top:210.98px;font-size:6.7px;color:#1a2c20;transform:scaleX(0.8439);transform-origin:100% 0;-webkit-text-stroke:0.09px #1a2c20;letter-spacing:0.35px;">10,00</div>
<div class="t" style="right:336.55px;top:210.98px;font-size:6.7px;color:#1a2c20;transform:scaleX(0.8416);transform-origin:100% 0;-webkit-text-stroke:0.09px #1a2c20;letter-spacing:0.35px;">15,0</div>
<div class="t" style="left:466.34px;top:210.98px;font-size:6.7px;color:#1a2c20;transform:scaleX(0.8579);transform-origin:0 0;-webkit-text-stroke:0.09px #1a2c20;letter-spacing:0.35px;">MEDICAÇÃO CLÍNICA</div>
<div class="t" style="left:571.74px;top:210.98px;font-size:6.7px;color:#1a2c20;transform:scaleX(0.8606);transform-origin:0 0;-webkit-text-stroke:0.09px #1a2c20;letter-spacing:0.35px;">PET SHOP</div>
<div class="a" style="left:37.10px;top:218.10px;width:11.10px;height:8.18px;background:#ececec"></div>
<div class="a" style="left:37.10px;top:225.68px;width:11.10px;height:0.60px;background:#d8d8d8"></div>
<svg style="left:37.3px;top:218.40px" width="10.8" height="7.6" viewBox="0 0 10.8 7.6"><rect x="0" y="0" width="10.8" height="7.6" fill="#dcf2f6"/><rect x="1" y=".7" width="8.9" height="6" rx="1.3" fill="#a6dbe8"/><rect x="3.4" y="1.4" width="6.2" height="4.9" rx="1" fill="#8ccbdc"/><ellipse cx="2.3" cy="2" rx="1.8" ry="1.4" fill="#2a7890"/><ellipse cx="5" cy="1.6" rx="1.6" ry=".8" fill="#5aa8c0"/><circle cx="3.3" cy="4.7" r=".7" fill="#7e8ea0"/><circle cx="6.8" cy="4.4" r="1.15" fill="#08141a"/></svg>
<div class="a" style="left:48.20px;top:218.10px;width:1.40px;height:8.18px;background:#bdbdbd"></div>
<div class="a" style="left:49.60px;top:218.10px;width:703.60px;height:8.18px;background:#c3dac4"></div>
<div class="a" style="left:49.60px;top:218.10px;width:703.60px;height:0.70px;background:rgba(255,255,255,.45)"></div>
<div class="a" style="left:49.60px;top:225.48px;width:703.60px;height:0.80px;background:rgba(0,0,0,.09)"></div>
<div class="a" style="left:118.00px;top:218.10px;width:1.00px;height:8.18px;background:rgba(0,0,0,.07)"></div>
<div class="a" style="left:119.00px;top:218.10px;width:1.00px;height:8.18px;background:rgba(255,255,255,.4)"></div>
<div class="a" style="left:142.80px;top:218.10px;width:1.00px;height:8.18px;background:rgba(0,0,0,.07)"></div>
<div class="a" style="left:143.80px;top:218.10px;width:1.00px;height:8.18px;background:rgba(255,255,255,.4)"></div>
<div class="a" style="left:371.40px;top:218.10px;width:1.00px;height:8.18px;background:rgba(0,0,0,.07)"></div>
<div class="a" style="left:372.40px;top:218.10px;width:1.00px;height:8.18px;background:rgba(255,255,255,.4)"></div>
<div class="a" style="left:388.60px;top:218.10px;width:1.00px;height:8.18px;background:rgba(0,0,0,.07)"></div>
<div class="a" style="left:389.60px;top:218.10px;width:1.00px;height:8.18px;background:rgba(255,255,255,.4)"></div>
<div class="a" style="left:428.80px;top:218.10px;width:1.00px;height:8.18px;background:rgba(0,0,0,.07)"></div>
<div class="a" style="left:429.80px;top:218.10px;width:1.00px;height:8.18px;background:rgba(255,255,255,.4)"></div>
<div class="a" style="left:463.40px;top:218.10px;width:1.00px;height:8.18px;background:rgba(0,0,0,.07)"></div>
<div class="a" style="left:464.40px;top:218.10px;width:1.00px;height:8.18px;background:rgba(255,255,255,.4)"></div>
<div class="a" style="left:567.80px;top:218.10px;width:1.00px;height:8.18px;background:rgba(0,0,0,.07)"></div>
<div class="a" style="left:568.80px;top:218.10px;width:1.00px;height:8.18px;background:rgba(255,255,255,.4)"></div>
<div class="a" style="left:674.50px;top:218.10px;width:1.00px;height:8.18px;background:rgba(0,0,0,.07)"></div>
<div class="a" style="left:675.50px;top:218.10px;width:1.00px;height:8.18px;background:rgba(255,255,255,.4)"></div>
<div class="t" style="right:657.34px;top:219.15px;font-size:6.7px;color:#1a2c20;transform:scaleX(0.8520);transform-origin:100% 0;-webkit-text-stroke:0.09px #1a2c20;letter-spacing:0.35px;">141</div>
<div class="t" style="left:145.04px;top:219.15px;font-size:6.7px;color:#1a2c20;transform:scaleX(0.8516);transform-origin:0 0;-webkit-text-stroke:0.09px #1a2c20;letter-spacing:0.35px;">APLICAÇÃO ANTIBIÓTICO  L/A</div>
<div class="t" style="left:281.00px;width:200px;text-align:center;top:219.15px;font-size:6.7px;color:#1a2c20;-webkit-text-stroke:0.09px #1a2c20;letter-spacing:0.35px;"><span style="display:inline-block;transform:scaleX(0.8668)">ML</span></div>
<div class="t" style="right:371.15px;top:219.15px;font-size:6.7px;color:#1a2c20;transform:scaleX(0.8416);transform-origin:100% 0;-webkit-text-stroke:0.09px #1a2c20;letter-spacing:0.35px;">2,00</div>
<div class="t" style="right:336.55px;top:219.15px;font-size:6.7px;color:#1a2c20;transform:scaleX(0.8416);transform-origin:100% 0;-webkit-text-stroke:0.09px #1a2c20;letter-spacing:0.35px;">61,0</div>
<div class="t" style="left:466.34px;top:219.15px;font-size:6.7px;color:#1a2c20;transform:scaleX(0.8579);transform-origin:0 0;-webkit-text-stroke:0.09px #1a2c20;letter-spacing:0.35px;">MEDICAÇÃO CLÍNICA</div>
<div class="t" style="left:571.74px;top:219.15px;font-size:6.7px;color:#1a2c20;transform:scaleX(0.8629);transform-origin:0 0;-webkit-text-stroke:0.09px #1a2c20;letter-spacing:0.35px;">SCHERING PLOUGH</div>
<div class="a" style="left:37.10px;top:226.28px;width:11.10px;height:8.18px;background:#ececec"></div>
<div class="a" style="left:37.10px;top:233.85px;width:11.10px;height:0.60px;background:#d8d8d8"></div>
<svg style="left:37.3px;top:226.58px" width="10.8" height="7.6" viewBox="0 0 10.8 7.6"><rect x="0" y="0" width="10.8" height="7.6" fill="#dcf2f6"/><rect x="1" y=".7" width="8.9" height="6" rx="1.3" fill="#a6dbe8"/><rect x="3.4" y="1.4" width="6.2" height="4.9" rx="1" fill="#8ccbdc"/><ellipse cx="2.3" cy="2" rx="1.8" ry="1.4" fill="#2a7890"/><ellipse cx="5" cy="1.6" rx="1.6" ry=".8" fill="#5aa8c0"/><circle cx="3.3" cy="4.7" r=".7" fill="#7e8ea0"/><circle cx="6.8" cy="4.4" r="1.15" fill="#08141a"/></svg>
<div class="a" style="left:48.20px;top:226.28px;width:1.40px;height:8.18px;background:#bdbdbd"></div>
<div class="a" style="left:49.60px;top:226.28px;width:703.60px;height:8.18px;background:#fdfc6c"></div>
<div class="a" style="left:49.60px;top:226.28px;width:703.60px;height:0.70px;background:rgba(255,255,255,.45)"></div>
<div class="a" style="left:49.60px;top:233.65px;width:703.60px;height:0.80px;background:rgba(0,0,0,.09)"></div>
<div class="a" style="left:118.00px;top:226.28px;width:1.00px;height:8.18px;background:rgba(0,0,0,.07)"></div>
<div class="a" style="left:119.00px;top:226.28px;width:1.00px;height:8.18px;background:rgba(255,255,255,.4)"></div>
<div class="a" style="left:142.80px;top:226.28px;width:1.00px;height:8.18px;background:rgba(0,0,0,.07)"></div>
<div class="a" style="left:143.80px;top:226.28px;width:1.00px;height:8.18px;background:rgba(255,255,255,.4)"></div>
<div class="a" style="left:371.40px;top:226.28px;width:1.00px;height:8.18px;background:rgba(0,0,0,.07)"></div>
<div class="a" style="left:372.40px;top:226.28px;width:1.00px;height:8.18px;background:rgba(255,255,255,.4)"></div>
<div class="a" style="left:388.60px;top:226.28px;width:1.00px;height:8.18px;background:rgba(0,0,0,.07)"></div>
<div class="a" style="left:389.60px;top:226.28px;width:1.00px;height:8.18px;background:rgba(255,255,255,.4)"></div>
<div class="a" style="left:428.80px;top:226.28px;width:1.00px;height:8.18px;background:rgba(0,0,0,.07)"></div>
<div class="a" style="left:429.80px;top:226.28px;width:1.00px;height:8.18px;background:rgba(255,255,255,.4)"></div>
<div class="a" style="left:463.40px;top:226.28px;width:1.00px;height:8.18px;background:rgba(0,0,0,.07)"></div>
<div class="a" style="left:464.40px;top:226.28px;width:1.00px;height:8.18px;background:rgba(255,255,255,.4)"></div>
<div class="a" style="left:567.80px;top:226.28px;width:1.00px;height:8.18px;background:rgba(0,0,0,.07)"></div>
<div class="a" style="left:568.80px;top:226.28px;width:1.00px;height:8.18px;background:rgba(255,255,255,.4)"></div>
<div class="a" style="left:674.50px;top:226.28px;width:1.00px;height:8.18px;background:rgba(0,0,0,.07)"></div>
<div class="a" style="left:675.50px;top:226.28px;width:1.00px;height:8.18px;background:rgba(255,255,255,.4)"></div>
<div class="t" style="right:657.34px;top:227.33px;font-size:6.7px;color:#302c00;transform:scaleX(0.8520);transform-origin:100% 0;-webkit-text-stroke:0.09px #302c00;letter-spacing:0.35px;">143</div>
<div class="t" style="left:145.04px;top:227.33px;font-size:6.7px;color:#302c00;transform:scaleX(0.8544);transform-origin:0 0;-webkit-text-stroke:0.09px #302c00;letter-spacing:0.35px;">APLICAÇÃO ANTIBIÓTICO FLOTRIL 10%</div>
<div class="t" style="left:281.00px;width:200px;text-align:center;top:227.33px;font-size:6.7px;color:#302c00;-webkit-text-stroke:0.09px #302c00;letter-spacing:0.35px;"><span style="display:inline-block;transform:scaleX(0.8668)">ML</span></div>
<div class="t" style="right:371.15px;top:227.33px;font-size:6.7px;color:#302c00;transform:scaleX(0.8416);transform-origin:100% 0;-webkit-text-stroke:0.09px #302c00;letter-spacing:0.35px;">4,00</div>
<div class="t" style="right:336.55px;top:227.33px;font-size:6.7px;color:#302c00;transform:scaleX(0.8376);transform-origin:100% 0;-webkit-text-stroke:0.09px #302c00;letter-spacing:0.35px;">5,0</div>
<div class="t" style="left:466.34px;top:227.33px;font-size:6.7px;color:#302c00;transform:scaleX(0.8579);transform-origin:0 0;-webkit-text-stroke:0.09px #302c00;letter-spacing:0.35px;">MEDICAÇÃO CLÍNICA</div>
<div class="t" style="left:571.74px;top:227.33px;font-size:6.7px;color:#302c00;transform:scaleX(0.8629);transform-origin:0 0;-webkit-text-stroke:0.09px #302c00;letter-spacing:0.35px;">SCHERING PLOUGH</div>
<div class="a" style="left:37.10px;top:234.45px;width:11.10px;height:8.18px;background:#ececec"></div>
<div class="a" style="left:37.10px;top:242.03px;width:11.10px;height:0.60px;background:#d8d8d8"></div>
<svg style="left:37.3px;top:234.75px" width="10.8" height="7.6" viewBox="0 0 10.8 7.6"><rect x="0" y="0" width="10.8" height="7.6" fill="#dcf2f6"/><rect x="1" y=".7" width="8.9" height="6" rx="1.3" fill="#a6dbe8"/><rect x="3.4" y="1.4" width="6.2" height="4.9" rx="1" fill="#8ccbdc"/><ellipse cx="2.3" cy="2" rx="1.8" ry="1.4" fill="#2a7890"/><ellipse cx="5" cy="1.6" rx="1.6" ry=".8" fill="#5aa8c0"/><circle cx="3.3" cy="4.7" r=".7" fill="#7e8ea0"/><circle cx="6.8" cy="4.4" r="1.15" fill="#08141a"/></svg>
<div class="a" style="left:48.20px;top:234.45px;width:1.40px;height:8.18px;background:#bdbdbd"></div>
<div class="a" style="left:49.60px;top:234.45px;width:703.60px;height:8.18px;background:#c3dac4"></div>
<div class="a" style="left:49.60px;top:234.45px;width:703.60px;height:0.70px;background:rgba(255,255,255,.45)"></div>
<div class="a" style="left:49.60px;top:241.82px;width:703.60px;height:0.80px;background:rgba(0,0,0,.09)"></div>
<div class="a" style="left:118.00px;top:234.45px;width:1.00px;height:8.18px;background:rgba(0,0,0,.07)"></div>
<div class="a" style="left:119.00px;top:234.45px;width:1.00px;height:8.18px;background:rgba(255,255,255,.4)"></div>
<div class="a" style="left:142.80px;top:234.45px;width:1.00px;height:8.18px;background:rgba(0,0,0,.07)"></div>
<div class="a" style="left:143.80px;top:234.45px;width:1.00px;height:8.18px;background:rgba(255,255,255,.4)"></div>
<div class="a" style="left:371.40px;top:234.45px;width:1.00px;height:8.18px;background:rgba(0,0,0,.07)"></div>
<div class="a" style="left:372.40px;top:234.45px;width:1.00px;height:8.18px;background:rgba(255,255,255,.4)"></div>
<div class="a" style="left:388.60px;top:234.45px;width:1.00px;height:8.18px;background:rgba(0,0,0,.07)"></div>
<div class="a" style="left:389.60px;top:234.45px;width:1.00px;height:8.18px;background:rgba(255,255,255,.4)"></div>
<div class="a" style="left:428.80px;top:234.45px;width:1.00px;height:8.18px;background:rgba(0,0,0,.07)"></div>
<div class="a" style="left:429.80px;top:234.45px;width:1.00px;height:8.18px;background:rgba(255,255,255,.4)"></div>
<div class="a" style="left:463.40px;top:234.45px;width:1.00px;height:8.18px;background:rgba(0,0,0,.07)"></div>
<div class="a" style="left:464.40px;top:234.45px;width:1.00px;height:8.18px;background:rgba(255,255,255,.4)"></div>
<div class="a" style="left:567.80px;top:234.45px;width:1.00px;height:8.18px;background:rgba(0,0,0,.07)"></div>
<div class="a" style="left:568.80px;top:234.45px;width:1.00px;height:8.18px;background:rgba(255,255,255,.4)"></div>
<div class="a" style="left:674.50px;top:234.45px;width:1.00px;height:8.18px;background:rgba(0,0,0,.07)"></div>
<div class="a" style="left:675.50px;top:234.45px;width:1.00px;height:8.18px;background:rgba(255,255,255,.4)"></div>
<div class="t" style="right:657.34px;top:235.50px;font-size:6.7px;color:#1a2c20;transform:scaleX(0.8520);transform-origin:100% 0;-webkit-text-stroke:0.09px #1a2c20;letter-spacing:0.35px;">142</div>
<div class="t" style="left:145.04px;top:235.50px;font-size:6.7px;color:#1a2c20;transform:scaleX(0.8533);transform-origin:0 0;-webkit-text-stroke:0.09px #1a2c20;letter-spacing:0.35px;">APLICAÇÃO ANTIBIÓTICO FLOTRIL 2,5%</div>
<div class="t" style="left:281.00px;width:200px;text-align:center;top:235.50px;font-size:6.7px;color:#1a2c20;-webkit-text-stroke:0.09px #1a2c20;letter-spacing:0.35px;"><span style="display:inline-block;transform:scaleX(0.8668)">ML</span></div>
<div class="t" style="right:371.15px;top:235.50px;font-size:6.7px;color:#1a2c20;transform:scaleX(0.8416);transform-origin:100% 0;-webkit-text-stroke:0.09px #1a2c20;letter-spacing:0.35px;">4,00</div>
<div class="t" style="right:336.55px;top:235.50px;font-size:6.7px;color:#1a2c20;transform:scaleX(0.8416);transform-origin:100% 0;-webkit-text-stroke:0.09px #1a2c20;letter-spacing:0.35px;">49,0</div>
<div class="t" style="left:466.34px;top:235.50px;font-size:6.7px;color:#1a2c20;transform:scaleX(0.8579);transform-origin:0 0;-webkit-text-stroke:0.09px #1a2c20;letter-spacing:0.35px;">MEDICAÇÃO CLÍNICA</div>
<div class="t" style="left:571.74px;top:235.50px;font-size:6.7px;color:#1a2c20;transform:scaleX(0.8629);transform-origin:0 0;-webkit-text-stroke:0.09px #1a2c20;letter-spacing:0.35px;">SCHERING PLOUGH</div>
<div class="a" style="left:37.10px;top:242.62px;width:11.10px;height:8.18px;background:#ececec"></div>
<div class="a" style="left:37.10px;top:250.20px;width:11.10px;height:0.60px;background:#d8d8d8"></div>
<svg style="left:37.3px;top:242.93px" width="10.8" height="7.6" viewBox="0 0 10.8 7.6"><rect x="0" y="0" width="10.8" height="7.6" fill="#dcf2f6"/><rect x="1" y=".7" width="8.9" height="6" rx="1.3" fill="#a6dbe8"/><rect x="3.4" y="1.4" width="6.2" height="4.9" rx="1" fill="#8ccbdc"/><ellipse cx="2.3" cy="2" rx="1.8" ry="1.4" fill="#2a7890"/><ellipse cx="5" cy="1.6" rx="1.6" ry=".8" fill="#5aa8c0"/><circle cx="3.3" cy="4.7" r=".7" fill="#7e8ea0"/><circle cx="6.8" cy="4.4" r="1.15" fill="#08141a"/></svg>
<div class="a" style="left:48.20px;top:242.62px;width:1.40px;height:8.18px;background:#bdbdbd"></div>
<div class="a" style="left:49.60px;top:242.62px;width:703.60px;height:8.18px;background:#c3dac4"></div>
<div class="a" style="left:49.60px;top:242.62px;width:703.60px;height:0.70px;background:rgba(255,255,255,.45)"></div>
<div class="a" style="left:49.60px;top:250.00px;width:703.60px;height:0.80px;background:rgba(0,0,0,.09)"></div>
<div class="a" style="left:118.00px;top:242.62px;width:1.00px;height:8.18px;background:rgba(0,0,0,.07)"></div>
<div class="a" style="left:119.00px;top:242.62px;width:1.00px;height:8.18px;background:rgba(255,255,255,.4)"></div>
<div class="a" style="left:142.80px;top:242.62px;width:1.00px;height:8.18px;background:rgba(0,0,0,.07)"></div>
<div class="a" style="left:143.80px;top:242.62px;width:1.00px;height:8.18px;background:rgba(255,255,255,.4)"></div>
<div class="a" style="left:371.40px;top:242.62px;width:1.00px;height:8.18px;background:rgba(0,0,0,.07)"></div>
<div class="a" style="left:372.40px;top:242.62px;width:1.00px;height:8.18px;background:rgba(255,255,255,.4)"></div>
<div class="a" style="left:388.60px;top:242.62px;width:1.00px;height:8.18px;background:rgba(0,0,0,.07)"></div>
<div class="a" style="left:389.60px;top:242.62px;width:1.00px;height:8.18px;background:rgba(255,255,255,.4)"></div>
<div class="a" style="left:428.80px;top:242.62px;width:1.00px;height:8.18px;background:rgba(0,0,0,.07)"></div>
<div class="a" style="left:429.80px;top:242.62px;width:1.00px;height:8.18px;background:rgba(255,255,255,.4)"></div>
<div class="a" style="left:463.40px;top:242.62px;width:1.00px;height:8.18px;background:rgba(0,0,0,.07)"></div>
<div class="a" style="left:464.40px;top:242.62px;width:1.00px;height:8.18px;background:rgba(255,255,255,.4)"></div>
<div class="a" style="left:567.80px;top:242.62px;width:1.00px;height:8.18px;background:rgba(0,0,0,.07)"></div>
<div class="a" style="left:568.80px;top:242.62px;width:1.00px;height:8.18px;background:rgba(255,255,255,.4)"></div>
<div class="a" style="left:674.50px;top:242.62px;width:1.00px;height:8.18px;background:rgba(0,0,0,.07)"></div>
<div class="a" style="left:675.50px;top:242.62px;width:1.00px;height:8.18px;background:rgba(255,255,255,.4)"></div>
<div class="t" style="right:657.34px;top:243.68px;font-size:6.7px;color:#1a2c20;transform:scaleX(0.8520);transform-origin:100% 0;-webkit-text-stroke:0.09px #1a2c20;letter-spacing:0.35px;">261</div>
<div class="t" style="left:145.04px;top:243.68px;font-size:6.7px;color:#1a2c20;transform:scaleX(0.8606);transform-origin:0 0;-webkit-text-stroke:0.09px #1a2c20;letter-spacing:0.35px;">APLICAÇÃO ANTIHEMORRAGICO TRANSAMIN AMPOLA</div>
<div class="t" style="left:281.00px;width:200px;text-align:center;top:243.68px;font-size:6.7px;color:#1a2c20;-webkit-text-stroke:0.09px #1a2c20;letter-spacing:0.35px;"><span style="display:inline-block;transform:scaleX(0.8543)">UNI</span></div>
<div class="t" style="right:371.15px;top:243.68px;font-size:6.7px;color:#1a2c20;transform:scaleX(0.8439);transform-origin:100% 0;-webkit-text-stroke:0.09px #1a2c20;letter-spacing:0.35px;">12,00</div>
<div class="t" style="right:336.55px;top:243.68px;font-size:6.7px;color:#1a2c20;transform:scaleX(0.8416);transform-origin:100% 0;-webkit-text-stroke:0.09px #1a2c20;letter-spacing:0.35px;">10,0</div>
<div class="t" style="left:466.34px;top:243.68px;font-size:6.7px;color:#1a2c20;transform:scaleX(0.8579);transform-origin:0 0;-webkit-text-stroke:0.09px #1a2c20;letter-spacing:0.35px;">MEDICAÇÃO CLÍNICA</div>
<div class="t" style="left:571.74px;top:243.68px;font-size:6.7px;color:#1a2c20;transform:scaleX(0.8629);transform-origin:0 0;-webkit-text-stroke:0.09px #1a2c20;letter-spacing:0.35px;">SCHERING PLOUGH</div>
<div class="a" style="left:37.10px;top:250.80px;width:11.10px;height:8.18px;background:#ececec"></div>
<div class="a" style="left:37.10px;top:258.38px;width:11.10px;height:0.60px;background:#d8d8d8"></div>
<svg style="left:37.3px;top:251.10px" width="10.8" height="7.6" viewBox="0 0 10.8 7.6"><rect x="0" y="0" width="10.8" height="7.6" fill="#dcf2f6"/><rect x="1" y=".7" width="8.9" height="6" rx="1.3" fill="#a6dbe8"/><rect x="3.4" y="1.4" width="6.2" height="4.9" rx="1" fill="#8ccbdc"/><ellipse cx="2.3" cy="2" rx="1.8" ry="1.4" fill="#2a7890"/><ellipse cx="5" cy="1.6" rx="1.6" ry=".8" fill="#5aa8c0"/><circle cx="3.3" cy="4.7" r=".7" fill="#7e8ea0"/><circle cx="6.8" cy="4.4" r="1.15" fill="#08141a"/></svg>
<div class="a" style="left:48.20px;top:250.80px;width:1.40px;height:8.18px;background:#bdbdbd"></div>
<div class="a" style="left:49.60px;top:250.80px;width:703.60px;height:8.18px;background:#fdfc6c"></div>
<div class="a" style="left:49.60px;top:250.80px;width:703.60px;height:0.70px;background:rgba(255,255,255,.45)"></div>
<div class="a" style="left:49.60px;top:258.18px;width:703.60px;height:0.80px;background:rgba(0,0,0,.09)"></div>
<div class="a" style="left:118.00px;top:250.80px;width:1.00px;height:8.18px;background:rgba(0,0,0,.07)"></div>
<div class="a" style="left:119.00px;top:250.80px;width:1.00px;height:8.18px;background:rgba(255,255,255,.4)"></div>
<div class="a" style="left:142.80px;top:250.80px;width:1.00px;height:8.18px;background:rgba(0,0,0,.07)"></div>
<div class="a" style="left:143.80px;top:250.80px;width:1.00px;height:8.18px;background:rgba(255,255,255,.4)"></div>
<div class="a" style="left:371.40px;top:250.80px;width:1.00px;height:8.18px;background:rgba(0,0,0,.07)"></div>
<div class="a" style="left:372.40px;top:250.80px;width:1.00px;height:8.18px;background:rgba(255,255,255,.4)"></div>
<div class="a" style="left:388.60px;top:250.80px;width:1.00px;height:8.18px;background:rgba(0,0,0,.07)"></div>
<div class="a" style="left:389.60px;top:250.80px;width:1.00px;height:8.18px;background:rgba(255,255,255,.4)"></div>
<div class="a" style="left:428.80px;top:250.80px;width:1.00px;height:8.18px;background:rgba(0,0,0,.07)"></div>
<div class="a" style="left:429.80px;top:250.80px;width:1.00px;height:8.18px;background:rgba(255,255,255,.4)"></div>
<div class="a" style="left:463.40px;top:250.80px;width:1.00px;height:8.18px;background:rgba(0,0,0,.07)"></div>
<div class="a" style="left:464.40px;top:250.80px;width:1.00px;height:8.18px;background:rgba(255,255,255,.4)"></div>
<div class="a" style="left:567.80px;top:250.80px;width:1.00px;height:8.18px;background:rgba(0,0,0,.07)"></div>
<div class="a" style="left:568.80px;top:250.80px;width:1.00px;height:8.18px;background:rgba(255,255,255,.4)"></div>
<div class="a" style="left:674.50px;top:250.80px;width:1.00px;height:8.18px;background:rgba(0,0,0,.07)"></div>
<div class="a" style="left:675.50px;top:250.80px;width:1.00px;height:8.18px;background:rgba(255,255,255,.4)"></div>
<div class="t" style="right:657.34px;top:251.85px;font-size:6.7px;color:#302c00;transform:scaleX(0.8520);transform-origin:100% 0;-webkit-text-stroke:0.09px #302c00;letter-spacing:0.35px;">148</div>
<div class="t" style="left:145.04px;top:251.85px;font-size:6.7px;color:#302c00;transform:scaleX(0.8577);transform-origin:0 0;-webkit-text-stroke:0.09px #302c00;letter-spacing:0.35px;">APLICAÇÃO ANTIHEMORRAGICO VITAMINA K</div>
<div class="t" style="left:281.00px;width:200px;text-align:center;top:251.85px;font-size:6.7px;color:#302c00;-webkit-text-stroke:0.09px #302c00;letter-spacing:0.35px;"><span style="display:inline-block;transform:scaleX(0.8668)">ML</span></div>
<div class="t" style="right:371.15px;top:251.85px;font-size:6.7px;color:#302c00;transform:scaleX(0.8416);transform-origin:100% 0;-webkit-text-stroke:0.09px #302c00;letter-spacing:0.35px;">1,50</div>
<div class="t" style="right:336.55px;top:251.85px;font-size:6.7px;color:#302c00;transform:scaleX(0.8376);transform-origin:100% 0;-webkit-text-stroke:0.09px #302c00;letter-spacing:0.35px;">1,0</div>
<div class="t" style="left:466.34px;top:251.85px;font-size:6.7px;color:#302c00;transform:scaleX(0.8579);transform-origin:0 0;-webkit-text-stroke:0.09px #302c00;letter-spacing:0.35px;">MEDICAÇÃO CLÍNICA</div>
<div class="t" style="left:571.74px;top:251.85px;font-size:6.7px;color:#302c00;transform:scaleX(0.8629);transform-origin:0 0;-webkit-text-stroke:0.09px #302c00;letter-spacing:0.35px;">SCHERING PLOUGH</div>
<div class="a" style="left:37.10px;top:258.98px;width:11.10px;height:8.18px;background:#ececec"></div>
<div class="a" style="left:37.10px;top:266.55px;width:11.10px;height:0.60px;background:#d8d8d8"></div>
<svg style="left:37.3px;top:259.28px" width="10.8" height="7.6" viewBox="0 0 10.8 7.6"><rect x="0" y="0" width="10.8" height="7.6" fill="#dcf2f6"/><rect x="1" y=".7" width="8.9" height="6" rx="1.3" fill="#a6dbe8"/><rect x="3.4" y="1.4" width="6.2" height="4.9" rx="1" fill="#8ccbdc"/><ellipse cx="2.3" cy="2" rx="1.8" ry="1.4" fill="#2a7890"/><ellipse cx="5" cy="1.6" rx="1.6" ry=".8" fill="#5aa8c0"/><circle cx="3.3" cy="4.7" r=".7" fill="#7e8ea0"/><circle cx="6.8" cy="4.4" r="1.15" fill="#08141a"/></svg>
<div class="a" style="left:48.20px;top:258.98px;width:1.40px;height:8.18px;background:#bdbdbd"></div>
<div class="a" style="left:49.60px;top:258.98px;width:703.60px;height:8.18px;background:#c3dac4"></div>
<div class="a" style="left:49.60px;top:258.98px;width:703.60px;height:0.70px;background:rgba(255,255,255,.45)"></div>
<div class="a" style="left:49.60px;top:266.35px;width:703.60px;height:0.80px;background:rgba(0,0,0,.09)"></div>
<div class="a" style="left:118.00px;top:258.98px;width:1.00px;height:8.18px;background:rgba(0,0,0,.07)"></div>
<div class="a" style="left:119.00px;top:258.98px;width:1.00px;height:8.18px;background:rgba(255,255,255,.4)"></div>
<div class="a" style="left:142.80px;top:258.98px;width:1.00px;height:8.18px;background:rgba(0,0,0,.07)"></div>
<div class="a" style="left:143.80px;top:258.98px;width:1.00px;height:8.18px;background:rgba(255,255,255,.4)"></div>
<div class="a" style="left:371.40px;top:258.98px;width:1.00px;height:8.18px;background:rgba(0,0,0,.07)"></div>
<div class="a" style="left:372.40px;top:258.98px;width:1.00px;height:8.18px;background:rgba(255,255,255,.4)"></div>
<div class="a" style="left:388.60px;top:258.98px;width:1.00px;height:8.18px;background:rgba(0,0,0,.07)"></div>
<div class="a" style="left:389.60px;top:258.98px;width:1.00px;height:8.18px;background:rgba(255,255,255,.4)"></div>
<div class="a" style="left:428.80px;top:258.98px;width:1.00px;height:8.18px;background:rgba(0,0,0,.07)"></div>
<div class="a" style="left:429.80px;top:258.98px;width:1.00px;height:8.18px;background:rgba(255,255,255,.4)"></div>
<div class="a" style="left:463.40px;top:258.98px;width:1.00px;height:8.18px;background:rgba(0,0,0,.07)"></div>
<div class="a" style="left:464.40px;top:258.98px;width:1.00px;height:8.18px;background:rgba(255,255,255,.4)"></div>
<div class="a" style="left:567.80px;top:258.98px;width:1.00px;height:8.18px;background:rgba(0,0,0,.07)"></div>
<div class="a" style="left:568.80px;top:258.98px;width:1.00px;height:8.18px;background:rgba(255,255,255,.4)"></div>
<div class="a" style="left:674.50px;top:258.98px;width:1.00px;height:8.18px;background:rgba(0,0,0,.07)"></div>
<div class="a" style="left:675.50px;top:258.98px;width:1.00px;height:8.18px;background:rgba(255,255,255,.4)"></div>
<div class="t" style="right:657.34px;top:260.03px;font-size:6.7px;color:#1a2c20;transform:scaleX(0.8520);transform-origin:100% 0;-webkit-text-stroke:0.09px #1a2c20;letter-spacing:0.35px;">145</div>
<div class="t" style="left:145.04px;top:260.03px;font-size:6.7px;color:#1a2c20;transform:scaleX(0.8547);transform-origin:0 0;-webkit-text-stroke:0.09px #1a2c20;letter-spacing:0.35px;">APLICAÇÃO ANTIINFLAMATORIO AZIUM 0,5 MG</div>
<div class="t" style="left:281.00px;width:200px;text-align:center;top:260.03px;font-size:6.7px;color:#1a2c20;-webkit-text-stroke:0.09px #1a2c20;letter-spacing:0.35px;"><span style="display:inline-block;transform:scaleX(0.8668)">ML</span></div>
<div class="t" style="right:371.15px;top:260.03px;font-size:6.7px;color:#1a2c20;transform:scaleX(0.8416);transform-origin:100% 0;-webkit-text-stroke:0.09px #1a2c20;letter-spacing:0.35px;">4,00</div>
<div class="t" style="right:336.55px;top:260.03px;font-size:6.7px;color:#1a2c20;transform:scaleX(0.8416);transform-origin:100% 0;-webkit-text-stroke:0.09px #1a2c20;letter-spacing:0.35px;">10,0</div>
<div class="t" style="left:466.34px;top:260.03px;font-size:6.7px;color:#1a2c20;transform:scaleX(0.8579);transform-origin:0 0;-webkit-text-stroke:0.09px #1a2c20;letter-spacing:0.35px;">MEDICAÇÃO CLÍNICA</div>
<div class="t" style="left:571.74px;top:260.03px;font-size:6.7px;color:#1a2c20;transform:scaleX(0.8629);transform-origin:0 0;-webkit-text-stroke:0.09px #1a2c20;letter-spacing:0.35px;">SCHERING PLOUGH</div>
<div class="a" style="left:37.10px;top:267.15px;width:11.10px;height:8.18px;background:#ececec"></div>
<div class="a" style="left:37.10px;top:274.73px;width:11.10px;height:0.60px;background:#d8d8d8"></div>
<svg style="left:37.3px;top:267.45px" width="10.8" height="7.6" viewBox="0 0 10.8 7.6"><rect x="0" y="0" width="10.8" height="7.6" fill="#dcf2f6"/><rect x="1" y=".7" width="8.9" height="6" rx="1.3" fill="#a6dbe8"/><rect x="3.4" y="1.4" width="6.2" height="4.9" rx="1" fill="#8ccbdc"/><ellipse cx="2.3" cy="2" rx="1.8" ry="1.4" fill="#2a7890"/><ellipse cx="5" cy="1.6" rx="1.6" ry=".8" fill="#5aa8c0"/><circle cx="3.3" cy="4.7" r=".7" fill="#7e8ea0"/><circle cx="6.8" cy="4.4" r="1.15" fill="#08141a"/></svg>
<div class="a" style="left:48.20px;top:267.15px;width:1.40px;height:8.18px;background:#bdbdbd"></div>
<div class="a" style="left:49.60px;top:267.15px;width:703.60px;height:8.18px;background:#c3dac4"></div>
<div class="a" style="left:49.60px;top:267.15px;width:703.60px;height:0.70px;background:rgba(255,255,255,.45)"></div>
<div class="a" style="left:49.60px;top:274.53px;width:703.60px;height:0.80px;background:rgba(0,0,0,.09)"></div>
<div class="a" style="left:118.00px;top:267.15px;width:1.00px;height:8.18px;background:rgba(0,0,0,.07)"></div>
<div class="a" style="left:119.00px;top:267.15px;width:1.00px;height:8.18px;background:rgba(255,255,255,.4)"></div>
<div class="a" style="left:142.80px;top:267.15px;width:1.00px;height:8.18px;background:rgba(0,0,0,.07)"></div>
<div class="a" style="left:143.80px;top:267.15px;width:1.00px;height:8.18px;background:rgba(255,255,255,.4)"></div>
<div class="a" style="left:371.40px;top:267.15px;width:1.00px;height:8.18px;background:rgba(0,0,0,.07)"></div>
<div class="a" style="left:372.40px;top:267.15px;width:1.00px;height:8.18px;background:rgba(255,255,255,.4)"></div>
<div class="a" style="left:388.60px;top:267.15px;width:1.00px;height:8.18px;background:rgba(0,0,0,.07)"></div>
<div class="a" style="left:389.60px;top:267.15px;width:1.00px;height:8.18px;background:rgba(255,255,255,.4)"></div>
<div class="a" style="left:428.80px;top:267.15px;width:1.00px;height:8.18px;background:rgba(0,0,0,.07)"></div>
<div class="a" style="left:429.80px;top:267.15px;width:1.00px;height:8.18px;background:rgba(255,255,255,.4)"></div>
<div class="a" style="left:463.40px;top:267.15px;width:1.00px;height:8.18px;background:rgba(0,0,0,.07)"></div>
<div class="a" style="left:464.40px;top:267.15px;width:1.00px;height:8.18px;background:rgba(255,255,255,.4)"></div>
<div class="a" style="left:567.80px;top:267.15px;width:1.00px;height:8.18px;background:rgba(0,0,0,.07)"></div>
<div class="a" style="left:568.80px;top:267.15px;width:1.00px;height:8.18px;background:rgba(255,255,255,.4)"></div>
<div class="a" style="left:674.50px;top:267.15px;width:1.00px;height:8.18px;background:rgba(0,0,0,.07)"></div>
<div class="a" style="left:675.50px;top:267.15px;width:1.00px;height:8.18px;background:rgba(255,255,255,.4)"></div>
<div class="t" style="right:657.34px;top:268.20px;font-size:6.7px;color:#1a2c20;transform:scaleX(0.8520);transform-origin:100% 0;-webkit-text-stroke:0.09px #1a2c20;letter-spacing:0.35px;">146</div>
<div class="t" style="left:145.04px;top:268.20px;font-size:6.7px;color:#1a2c20;transform:scaleX(0.8578);transform-origin:0 0;-webkit-text-stroke:0.09px #1a2c20;letter-spacing:0.35px;">APLICAÇÃO ANTIINFLAMATORIO BANAMINE</div>
<div class="t" style="left:281.00px;width:200px;text-align:center;top:268.20px;font-size:6.7px;color:#1a2c20;-webkit-text-stroke:0.09px #1a2c20;letter-spacing:0.35px;"><span style="display:inline-block;transform:scaleX(0.8668)">ML</span></div>
<div class="t" style="right:371.15px;top:268.20px;font-size:6.7px;color:#1a2c20;transform:scaleX(0.8416);transform-origin:100% 0;-webkit-text-stroke:0.09px #1a2c20;letter-spacing:0.35px;">4,00</div>
<div class="t" style="right:336.55px;top:268.20px;font-size:6.7px;color:#1a2c20;transform:scaleX(0.8416);transform-origin:100% 0;-webkit-text-stroke:0.09px #1a2c20;letter-spacing:0.35px;">15,0</div>
<div class="t" style="left:466.34px;top:268.20px;font-size:6.7px;color:#1a2c20;transform:scaleX(0.8579);transform-origin:0 0;-webkit-text-stroke:0.09px #1a2c20;letter-spacing:0.35px;">MEDICAÇÃO CLÍNICA</div>
<div class="t" style="left:571.74px;top:268.20px;font-size:6.7px;color:#1a2c20;transform:scaleX(0.8629);transform-origin:0 0;-webkit-text-stroke:0.09px #1a2c20;letter-spacing:0.35px;">SCHERING PLOUGH</div>
<div class="a" style="left:37.10px;top:275.32px;width:11.10px;height:8.18px;background:#ececec"></div>
<div class="a" style="left:37.10px;top:282.90px;width:11.10px;height:0.60px;background:#d8d8d8"></div>
<svg style="left:37.3px;top:275.62px" width="10.8" height="7.6" viewBox="0 0 10.8 7.6"><rect x="0" y="0" width="10.8" height="7.6" fill="#dcf2f6"/><rect x="1" y=".7" width="8.9" height="6" rx="1.3" fill="#a6dbe8"/><rect x="3.4" y="1.4" width="6.2" height="4.9" rx="1" fill="#8ccbdc"/><ellipse cx="2.3" cy="2" rx="1.8" ry="1.4" fill="#2a7890"/><ellipse cx="5" cy="1.6" rx="1.6" ry=".8" fill="#5aa8c0"/><circle cx="3.3" cy="4.7" r=".7" fill="#7e8ea0"/><circle cx="6.8" cy="4.4" r="1.15" fill="#08141a"/></svg>
<div class="a" style="left:48.20px;top:275.32px;width:1.40px;height:8.18px;background:#bdbdbd"></div>
<div class="a" style="left:49.60px;top:275.32px;width:703.60px;height:8.18px;background:#c3dac4"></div>
<div class="a" style="left:49.60px;top:275.32px;width:703.60px;height:0.70px;background:rgba(255,255,255,.45)"></div>
<div class="a" style="left:49.60px;top:282.70px;width:703.60px;height:0.80px;background:rgba(0,0,0,.09)"></div>
<div class="a" style="left:118.00px;top:275.32px;width:1.00px;height:8.18px;background:rgba(0,0,0,.07)"></div>
<div class="a" style="left:119.00px;top:275.32px;width:1.00px;height:8.18px;background:rgba(255,255,255,.4)"></div>
<div class="a" style="left:142.80px;top:275.32px;width:1.00px;height:8.18px;background:rgba(0,0,0,.07)"></div>
<div class="a" style="left:143.80px;top:275.32px;width:1.00px;height:8.18px;background:rgba(255,255,255,.4)"></div>
<div class="a" style="left:371.40px;top:275.32px;width:1.00px;height:8.18px;background:rgba(0,0,0,.07)"></div>
<div class="a" style="left:372.40px;top:275.32px;width:1.00px;height:8.18px;background:rgba(255,255,255,.4)"></div>
<div class="a" style="left:388.60px;top:275.32px;width:1.00px;height:8.18px;background:rgba(0,0,0,.07)"></div>
<div class="a" style="left:389.60px;top:275.32px;width:1.00px;height:8.18px;background:rgba(255,255,255,.4)"></div>
<div class="a" style="left:428.80px;top:275.32px;width:1.00px;height:8.18px;background:rgba(0,0,0,.07)"></div>
<div class="a" style="left:429.80px;top:275.32px;width:1.00px;height:8.18px;background:rgba(255,255,255,.4)"></div>
<div class="a" style="left:463.40px;top:275.32px;width:1.00px;height:8.18px;background:rgba(0,0,0,.07)"></div>
<div class="a" style="left:464.40px;top:275.32px;width:1.00px;height:8.18px;background:rgba(255,255,255,.4)"></div>
<div class="a" style="left:567.80px;top:275.32px;width:1.00px;height:8.18px;background:rgba(0,0,0,.07)"></div>
<div class="a" style="left:568.80px;top:275.32px;width:1.00px;height:8.18px;background:rgba(255,255,255,.4)"></div>
<div class="a" style="left:674.50px;top:275.32px;width:1.00px;height:8.18px;background:rgba(0,0,0,.07)"></div>
<div class="a" style="left:675.50px;top:275.32px;width:1.00px;height:8.18px;background:rgba(255,255,255,.4)"></div>
<div class="t" style="right:657.34px;top:276.38px;font-size:6.7px;color:#1a2c20;transform:scaleX(0.8520);transform-origin:100% 0;-webkit-text-stroke:0.09px #1a2c20;letter-spacing:0.35px;">319</div>
<div class="t" style="left:145.04px;top:276.38px;font-size:6.7px;color:#1a2c20;transform:scaleX(0.8577);transform-origin:0 0;-webkit-text-stroke:0.09px #1a2c20;letter-spacing:0.35px;">APLICAÇÃO ANTIINFLAMATÓRIO FENILBUTAZONA</div>
<div class="t" style="left:281.00px;width:200px;text-align:center;top:276.38px;font-size:6.7px;color:#1a2c20;-webkit-text-stroke:0.09px #1a2c20;letter-spacing:0.35px;"><span style="display:inline-block;transform:scaleX(0.8668)">ML</span></div>
<div class="t" style="right:371.15px;top:276.38px;font-size:6.7px;color:#1a2c20;transform:scaleX(0.8416);transform-origin:100% 0;-webkit-text-stroke:0.09px #1a2c20;letter-spacing:0.35px;">4,00</div>
<div class="t" style="right:336.55px;top:276.38px;font-size:6.7px;color:#1a2c20;transform:scaleX(0.8416);transform-origin:100% 0;-webkit-text-stroke:0.09px #1a2c20;letter-spacing:0.35px;">75,0</div>
<div class="t" style="left:466.34px;top:276.38px;font-size:6.7px;color:#1a2c20;transform:scaleX(0.8579);transform-origin:0 0;-webkit-text-stroke:0.09px #1a2c20;letter-spacing:0.35px;">MEDICAÇÃO CLÍNICA</div>
<div class="t" style="left:571.74px;top:276.38px;font-size:6.7px;color:#1a2c20;transform:scaleX(0.8629);transform-origin:0 0;-webkit-text-stroke:0.09px #1a2c20;letter-spacing:0.35px;">SCHERING PLOUGH</div>
<div class="a" style="left:37.10px;top:283.50px;width:11.10px;height:8.18px;background:#ececec"></div>
<div class="a" style="left:37.10px;top:291.07px;width:11.10px;height:0.60px;background:#d8d8d8"></div>
<svg style="left:37.3px;top:283.80px" width="10.8" height="7.6" viewBox="0 0 10.8 7.6"><rect x="0" y="0" width="10.8" height="7.6" fill="#dcf2f6"/><rect x="1" y=".7" width="8.9" height="6" rx="1.3" fill="#a6dbe8"/><rect x="3.4" y="1.4" width="6.2" height="4.9" rx="1" fill="#8ccbdc"/><ellipse cx="2.3" cy="2" rx="1.8" ry="1.4" fill="#2a7890"/><ellipse cx="5" cy="1.6" rx="1.6" ry=".8" fill="#5aa8c0"/><circle cx="3.3" cy="4.7" r=".7" fill="#7e8ea0"/><circle cx="6.8" cy="4.4" r="1.15" fill="#08141a"/></svg>
<div class="a" style="left:48.20px;top:283.50px;width:1.40px;height:8.18px;background:#bdbdbd"></div>
<div class="a" style="left:49.60px;top:283.50px;width:703.60px;height:8.18px;background:#fdfc6c"></div>
<div class="a" style="left:49.60px;top:283.50px;width:703.60px;height:0.70px;background:rgba(255,255,255,.45)"></div>
<div class="a" style="left:49.60px;top:290.88px;width:703.60px;height:0.80px;background:rgba(0,0,0,.09)"></div>
<div class="a" style="left:118.00px;top:283.50px;width:1.00px;height:8.18px;background:rgba(0,0,0,.07)"></div>
<div class="a" style="left:119.00px;top:283.50px;width:1.00px;height:8.18px;background:rgba(255,255,255,.4)"></div>
<div class="a" style="left:142.80px;top:283.50px;width:1.00px;height:8.18px;background:rgba(0,0,0,.07)"></div>
<div class="a" style="left:143.80px;top:283.50px;width:1.00px;height:8.18px;background:rgba(255,255,255,.4)"></div>
<div class="a" style="left:371.40px;top:283.50px;width:1.00px;height:8.18px;background:rgba(0,0,0,.07)"></div>
<div class="a" style="left:372.40px;top:283.50px;width:1.00px;height:8.18px;background:rgba(255,255,255,.4)"></div>
<div class="a" style="left:388.60px;top:283.50px;width:1.00px;height:8.18px;background:rgba(0,0,0,.07)"></div>
<div class="a" style="left:389.60px;top:283.50px;width:1.00px;height:8.18px;background:rgba(255,255,255,.4)"></div>
<div class="a" style="left:428.80px;top:283.50px;width:1.00px;height:8.18px;background:rgba(0,0,0,.07)"></div>
<div class="a" style="left:429.80px;top:283.50px;width:1.00px;height:8.18px;background:rgba(255,255,255,.4)"></div>
<div class="a" style="left:463.40px;top:283.50px;width:1.00px;height:8.18px;background:rgba(0,0,0,.07)"></div>
<div class="a" style="left:464.40px;top:283.50px;width:1.00px;height:8.18px;background:rgba(255,255,255,.4)"></div>
<div class="a" style="left:567.80px;top:283.50px;width:1.00px;height:8.18px;background:rgba(0,0,0,.07)"></div>
<div class="a" style="left:568.80px;top:283.50px;width:1.00px;height:8.18px;background:rgba(255,255,255,.4)"></div>
<div class="a" style="left:674.50px;top:283.50px;width:1.00px;height:8.18px;background:rgba(0,0,0,.07)"></div>
<div class="a" style="left:675.50px;top:283.50px;width:1.00px;height:8.18px;background:rgba(255,255,255,.4)"></div>
<div class="t" style="right:657.34px;top:284.55px;font-size:6.7px;color:#302c00;transform:scaleX(0.8520);transform-origin:100% 0;-webkit-text-stroke:0.09px #302c00;letter-spacing:0.35px;">315</div>
<div class="t" style="left:145.04px;top:284.55px;font-size:6.7px;color:#302c00;transform:scaleX(0.8577);transform-origin:0 0;-webkit-text-stroke:0.09px #302c00;letter-spacing:0.35px;">APLICAÇÃO ANTIINFLAMATÓRIO MAXICAM 2%</div>
<div class="t" style="left:281.00px;width:200px;text-align:center;top:284.55px;font-size:6.7px;color:#302c00;-webkit-text-stroke:0.09px #302c00;letter-spacing:0.35px;"><span style="display:inline-block;transform:scaleX(0.8668)">ML</span></div>
<div class="t" style="right:371.15px;top:284.55px;font-size:6.7px;color:#302c00;transform:scaleX(0.8416);transform-origin:100% 0;-webkit-text-stroke:0.09px #302c00;letter-spacing:0.35px;">5,00</div>
<div class="t" style="right:336.55px;top:284.55px;font-size:6.7px;color:#302c00;transform:scaleX(0.8376);transform-origin:100% 0;-webkit-text-stroke:0.09px #302c00;letter-spacing:0.35px;">9,0</div>
<div class="t" style="left:466.34px;top:284.55px;font-size:6.7px;color:#302c00;transform:scaleX(0.8579);transform-origin:0 0;-webkit-text-stroke:0.09px #302c00;letter-spacing:0.35px;">MEDICAÇÃO CLÍNICA</div>
<div class="t" style="left:571.74px;top:284.55px;font-size:6.7px;color:#302c00;transform:scaleX(0.8629);transform-origin:0 0;-webkit-text-stroke:0.09px #302c00;letter-spacing:0.35px;">SCHERING PLOUGH</div>
<div class="a" style="left:37.10px;top:291.68px;width:11.10px;height:8.18px;background:#ececec"></div>
<div class="a" style="left:37.10px;top:299.25px;width:11.10px;height:0.60px;background:#d8d8d8"></div>
<svg style="left:37.3px;top:291.98px" width="10.8" height="7.6" viewBox="0 0 10.8 7.6"><rect x="0" y="0" width="10.8" height="7.6" fill="#dcf2f6"/><rect x="1" y=".7" width="8.9" height="6" rx="1.3" fill="#a6dbe8"/><rect x="3.4" y="1.4" width="6.2" height="4.9" rx="1" fill="#8ccbdc"/><ellipse cx="2.3" cy="2" rx="1.8" ry="1.4" fill="#2a7890"/><ellipse cx="5" cy="1.6" rx="1.6" ry=".8" fill="#5aa8c0"/><circle cx="3.3" cy="4.7" r=".7" fill="#7e8ea0"/><circle cx="6.8" cy="4.4" r="1.15" fill="#08141a"/></svg>
<div class="a" style="left:48.20px;top:291.68px;width:1.40px;height:8.18px;background:#bdbdbd"></div>
<div class="a" style="left:49.60px;top:291.68px;width:703.60px;height:8.18px;background:#c3dac4"></div>
<div class="a" style="left:49.60px;top:291.68px;width:703.60px;height:0.70px;background:rgba(255,255,255,.45)"></div>
<div class="a" style="left:49.60px;top:299.05px;width:703.60px;height:0.80px;background:rgba(0,0,0,.09)"></div>
<div class="a" style="left:118.00px;top:291.68px;width:1.00px;height:8.18px;background:rgba(0,0,0,.07)"></div>
<div class="a" style="left:119.00px;top:291.68px;width:1.00px;height:8.18px;background:rgba(255,255,255,.4)"></div>
<div class="a" style="left:142.80px;top:291.68px;width:1.00px;height:8.18px;background:rgba(0,0,0,.07)"></div>
<div class="a" style="left:143.80px;top:291.68px;width:1.00px;height:8.18px;background:rgba(255,255,255,.4)"></div>
<div class="a" style="left:371.40px;top:291.68px;width:1.00px;height:8.18px;background:rgba(0,0,0,.07)"></div>
<div class="a" style="left:372.40px;top:291.68px;width:1.00px;height:8.18px;background:rgba(255,255,255,.4)"></div>
<div class="a" style="left:388.60px;top:291.68px;width:1.00px;height:8.18px;background:rgba(0,0,0,.07)"></div>
<div class="a" style="left:389.60px;top:291.68px;width:1.00px;height:8.18px;background:rgba(255,255,255,.4)"></div>
<div class="a" style="left:428.80px;top:291.68px;width:1.00px;height:8.18px;background:rgba(0,0,0,.07)"></div>
<div class="a" style="left:429.80px;top:291.68px;width:1.00px;height:8.18px;background:rgba(255,255,255,.4)"></div>
<div class="a" style="left:463.40px;top:291.68px;width:1.00px;height:8.18px;background:rgba(0,0,0,.07)"></div>
<div class="a" style="left:464.40px;top:291.68px;width:1.00px;height:8.18px;background:rgba(255,255,255,.4)"></div>
<div class="a" style="left:567.80px;top:291.68px;width:1.00px;height:8.18px;background:rgba(0,0,0,.07)"></div>
<div class="a" style="left:568.80px;top:291.68px;width:1.00px;height:8.18px;background:rgba(255,255,255,.4)"></div>
<div class="a" style="left:674.50px;top:291.68px;width:1.00px;height:8.18px;background:rgba(0,0,0,.07)"></div>
<div class="a" style="left:675.50px;top:291.68px;width:1.00px;height:8.18px;background:rgba(255,255,255,.4)"></div>
<div class="t" style="right:657.34px;top:292.73px;font-size:6.7px;color:#1a2c20;transform:scaleX(0.8520);transform-origin:100% 0;-webkit-text-stroke:0.09px #1a2c20;letter-spacing:0.35px;">150</div>
<div class="t" style="left:145.04px;top:292.73px;font-size:6.7px;color:#1a2c20;transform:scaleX(0.8576);transform-origin:0 0;-webkit-text-stroke:0.09px #1a2c20;letter-spacing:0.35px;">APLICAÇÃO ANTITÉRMICO E ANALGÉSICO FINADOR</div>
<div class="t" style="left:281.00px;width:200px;text-align:center;top:292.73px;font-size:6.7px;color:#1a2c20;-webkit-text-stroke:0.09px #1a2c20;letter-spacing:0.35px;"><span style="display:inline-block;transform:scaleX(0.8668)">ML</span></div>
<div class="t" style="right:371.15px;top:292.73px;font-size:6.7px;color:#1a2c20;transform:scaleX(0.8416);transform-origin:100% 0;-webkit-text-stroke:0.09px #1a2c20;letter-spacing:0.35px;">4,00</div>
<div class="t" style="right:336.55px;top:292.73px;font-size:6.7px;color:#1a2c20;transform:scaleX(0.8416);transform-origin:100% 0;-webkit-text-stroke:0.09px #1a2c20;letter-spacing:0.35px;">22,0</div>
<div class="t" style="left:466.34px;top:292.73px;font-size:6.7px;color:#1a2c20;transform:scaleX(0.8579);transform-origin:0 0;-webkit-text-stroke:0.09px #1a2c20;letter-spacing:0.35px;">MEDICAÇÃO CLÍNICA</div>
<div class="t" style="left:571.74px;top:292.73px;font-size:6.7px;color:#1a2c20;transform:scaleX(0.8629);transform-origin:0 0;-webkit-text-stroke:0.09px #1a2c20;letter-spacing:0.35px;">SCHERING PLOUGH</div>
<div class="a" style="left:37.10px;top:299.85px;width:11.10px;height:8.18px;background:#ececec"></div>
<div class="a" style="left:37.10px;top:307.43px;width:11.10px;height:0.60px;background:#d8d8d8"></div>
<svg style="left:37.3px;top:300.15px" width="10.8" height="7.6" viewBox="0 0 10.8 7.6"><rect x="0" y="0" width="10.8" height="7.6" fill="#dcf2f6"/><rect x="1" y=".7" width="8.9" height="6" rx="1.3" fill="#a6dbe8"/><rect x="3.4" y="1.4" width="6.2" height="4.9" rx="1" fill="#8ccbdc"/><ellipse cx="2.3" cy="2" rx="1.8" ry="1.4" fill="#2a7890"/><ellipse cx="5" cy="1.6" rx="1.6" ry=".8" fill="#5aa8c0"/><circle cx="3.3" cy="4.7" r=".7" fill="#7e8ea0"/><circle cx="6.8" cy="4.4" r="1.15" fill="#08141a"/></svg>
<div class="a" style="left:48.20px;top:299.85px;width:1.40px;height:8.18px;background:#bdbdbd"></div>
<div class="a" style="left:49.60px;top:299.85px;width:703.60px;height:8.18px;background:#c3dac4"></div>
<div class="a" style="left:49.60px;top:299.85px;width:703.60px;height:0.70px;background:rgba(255,255,255,.45)"></div>
<div class="a" style="left:49.60px;top:307.23px;width:703.60px;height:0.80px;background:rgba(0,0,0,.09)"></div>
<div class="a" style="left:118.00px;top:299.85px;width:1.00px;height:8.18px;background:rgba(0,0,0,.07)"></div>
<div class="a" style="left:119.00px;top:299.85px;width:1.00px;height:8.18px;background:rgba(255,255,255,.4)"></div>
<div class="a" style="left:142.80px;top:299.85px;width:1.00px;height:8.18px;background:rgba(0,0,0,.07)"></div>
<div class="a" style="left:143.80px;top:299.85px;width:1.00px;height:8.18px;background:rgba(255,255,255,.4)"></div>
<div class="a" style="left:371.40px;top:299.85px;width:1.00px;height:8.18px;background:rgba(0,0,0,.07)"></div>
<div class="a" style="left:372.40px;top:299.85px;width:1.00px;height:8.18px;background:rgba(255,255,255,.4)"></div>
<div class="a" style="left:388.60px;top:299.85px;width:1.00px;height:8.18px;background:rgba(0,0,0,.07)"></div>
<div class="a" style="left:389.60px;top:299.85px;width:1.00px;height:8.18px;background:rgba(255,255,255,.4)"></div>
<div class="a" style="left:428.80px;top:299.85px;width:1.00px;height:8.18px;background:rgba(0,0,0,.07)"></div>
<div class="a" style="left:429.80px;top:299.85px;width:1.00px;height:8.18px;background:rgba(255,255,255,.4)"></div>
<div class="a" style="left:463.40px;top:299.85px;width:1.00px;height:8.18px;background:rgba(0,0,0,.07)"></div>
<div class="a" style="left:464.40px;top:299.85px;width:1.00px;height:8.18px;background:rgba(255,255,255,.4)"></div>
<div class="a" style="left:567.80px;top:299.85px;width:1.00px;height:8.18px;background:rgba(0,0,0,.07)"></div>
<div class="a" style="left:568.80px;top:299.85px;width:1.00px;height:8.18px;background:rgba(255,255,255,.4)"></div>
<div class="a" style="left:674.50px;top:299.85px;width:1.00px;height:8.18px;background:rgba(0,0,0,.07)"></div>
<div class="a" style="left:675.50px;top:299.85px;width:1.00px;height:8.18px;background:rgba(255,255,255,.4)"></div>
<div class="t" style="right:657.34px;top:300.90px;font-size:6.7px;color:#1a2c20;transform:scaleX(0.8520);transform-origin:100% 0;-webkit-text-stroke:0.09px #1a2c20;letter-spacing:0.35px;">314</div>
<div class="t" style="left:145.04px;top:300.90px;font-size:6.7px;color:#1a2c20;transform:scaleX(0.8585);transform-origin:0 0;-webkit-text-stroke:0.09px #1a2c20;letter-spacing:0.35px;">APLICAÇÃO ATROPINA</div>
<div class="t" style="left:281.00px;width:200px;text-align:center;top:300.90px;font-size:6.7px;color:#1a2c20;-webkit-text-stroke:0.09px #1a2c20;letter-spacing:0.35px;"><span style="display:inline-block;transform:scaleX(0.8668)">ML</span></div>
<div class="t" style="right:371.15px;top:300.90px;font-size:6.7px;color:#1a2c20;transform:scaleX(0.8416);transform-origin:100% 0;-webkit-text-stroke:0.09px #1a2c20;letter-spacing:0.35px;">4,00</div>
<div class="t" style="right:336.55px;top:300.90px;font-size:6.7px;color:#1a2c20;transform:scaleX(0.8416);transform-origin:100% 0;-webkit-text-stroke:0.09px #1a2c20;letter-spacing:0.35px;">13,0</div>
<div class="t" style="left:466.34px;top:300.90px;font-size:6.7px;color:#1a2c20;transform:scaleX(0.8579);transform-origin:0 0;-webkit-text-stroke:0.09px #1a2c20;letter-spacing:0.35px;">MEDICAÇÃO CLÍNICA</div>
<div class="t" style="left:571.74px;top:300.90px;font-size:6.7px;color:#1a2c20;transform:scaleX(0.8629);transform-origin:0 0;-webkit-text-stroke:0.09px #1a2c20;letter-spacing:0.35px;">SCHERING PLOUGH</div>
<div class="a" style="left:37.10px;top:308.03px;width:11.10px;height:8.18px;background:#ececec"></div>
<div class="a" style="left:37.10px;top:315.60px;width:11.10px;height:0.60px;background:#d8d8d8"></div>
<svg style="left:37.3px;top:308.33px" width="10.8" height="7.6" viewBox="0 0 10.8 7.6"><rect x="0" y="0" width="10.8" height="7.6" fill="#dcf2f6"/><rect x="1" y=".7" width="8.9" height="6" rx="1.3" fill="#a6dbe8"/><rect x="3.4" y="1.4" width="6.2" height="4.9" rx="1" fill="#8ccbdc"/><ellipse cx="2.3" cy="2" rx="1.8" ry="1.4" fill="#2a7890"/><ellipse cx="5" cy="1.6" rx="1.6" ry=".8" fill="#5aa8c0"/><circle cx="3.3" cy="4.7" r=".7" fill="#7e8ea0"/><circle cx="6.8" cy="4.4" r="1.15" fill="#08141a"/></svg>
<div class="a" style="left:48.20px;top:308.03px;width:1.40px;height:8.18px;background:#bdbdbd"></div>
<div class="a" style="left:49.60px;top:308.03px;width:703.60px;height:8.18px;background:#c3dac4"></div>
<div class="a" style="left:49.60px;top:308.03px;width:703.60px;height:0.70px;background:rgba(255,255,255,.45)"></div>
<div class="a" style="left:49.60px;top:315.40px;width:703.60px;height:0.80px;background:rgba(0,0,0,.09)"></div>
<div class="a" style="left:118.00px;top:308.03px;width:1.00px;height:8.18px;background:rgba(0,0,0,.07)"></div>
<div class="a" style="left:119.00px;top:308.03px;width:1.00px;height:8.18px;background:rgba(255,255,255,.4)"></div>
<div class="a" style="left:142.80px;top:308.03px;width:1.00px;height:8.18px;background:rgba(0,0,0,.07)"></div>
<div class="a" style="left:143.80px;top:308.03px;width:1.00px;height:8.18px;background:rgba(255,255,255,.4)"></div>
<div class="a" style="left:371.40px;top:308.03px;width:1.00px;height:8.18px;background:rgba(0,0,0,.07)"></div>
<div class="a" style="left:372.40px;top:308.03px;width:1.00px;height:8.18px;background:rgba(255,255,255,.4)"></div>
<div class="a" style="left:388.60px;top:308.03px;width:1.00px;height:8.18px;background:rgba(0,0,0,.07)"></div>
<div class="a" style="left:389.60px;top:308.03px;width:1.00px;height:8.18px;background:rgba(255,255,255,.4)"></div>
<div class="a" style="left:428.80px;top:308.03px;width:1.00px;height:8.18px;background:rgba(0,0,0,.07)"></div>
<div class="a" style="left:429.80px;top:308.03px;width:1.00px;height:8.18px;background:rgba(255,255,255,.4)"></div>
<div class="a" style="left:463.40px;top:308.03px;width:1.00px;height:8.18px;background:rgba(0,0,0,.07)"></div>
<div class="a" style="left:464.40px;top:308.03px;width:1.00px;height:8.18px;background:rgba(255,255,255,.4)"></div>
<div class="a" style="left:567.80px;top:308.03px;width:1.00px;height:8.18px;background:rgba(0,0,0,.07)"></div>
<div class="a" style="left:568.80px;top:308.03px;width:1.00px;height:8.18px;background:rgba(255,255,255,.4)"></div>
<div class="a" style="left:674.50px;top:308.03px;width:1.00px;height:8.18px;background:rgba(0,0,0,.07)"></div>
<div class="a" style="left:675.50px;top:308.03px;width:1.00px;height:8.18px;background:rgba(255,255,255,.4)"></div>
<div class="t" style="right:657.34px;top:309.08px;font-size:6.7px;color:#1a2c20;transform:scaleX(0.8520);transform-origin:100% 0;-webkit-text-stroke:0.09px #1a2c20;letter-spacing:0.35px;">263</div>
<div class="t" style="left:145.04px;top:309.08px;font-size:6.7px;color:#1a2c20;transform:scaleX(0.8562);transform-origin:0 0;-webkit-text-stroke:0.09px #1a2c20;letter-spacing:0.35px;">APLICAÇÃO CIOSIN</div>
<div class="t" style="left:281.00px;width:200px;text-align:center;top:309.08px;font-size:6.7px;color:#1a2c20;-webkit-text-stroke:0.09px #1a2c20;letter-spacing:0.35px;"><span style="display:inline-block;transform:scaleX(0.8668)">ML</span></div>
<div class="t" style="right:371.15px;top:309.08px;font-size:6.7px;color:#1a2c20;transform:scaleX(0.8416);transform-origin:100% 0;-webkit-text-stroke:0.09px #1a2c20;letter-spacing:0.35px;">5,00</div>
<div class="t" style="right:336.55px;top:309.08px;font-size:6.7px;color:#1a2c20;transform:scaleX(0.8416);transform-origin:100% 0;-webkit-text-stroke:0.09px #1a2c20;letter-spacing:0.35px;">21,0</div>
<div class="t" style="left:466.34px;top:309.08px;font-size:6.7px;color:#1a2c20;transform:scaleX(0.8579);transform-origin:0 0;-webkit-text-stroke:0.09px #1a2c20;letter-spacing:0.35px;">MEDICAÇÃO CLÍNICA</div>
<div class="t" style="left:571.74px;top:309.08px;font-size:6.7px;color:#1a2c20;transform:scaleX(0.8629);transform-origin:0 0;-webkit-text-stroke:0.09px #1a2c20;letter-spacing:0.35px;">SCHERING PLOUGH</div>
<div class="a" style="left:37.10px;top:316.20px;width:11.10px;height:8.18px;background:#ececec"></div>
<div class="a" style="left:37.10px;top:323.78px;width:11.10px;height:0.60px;background:#d8d8d8"></div>
<svg style="left:37.3px;top:316.50px" width="10.8" height="7.6" viewBox="0 0 10.8 7.6"><rect x="0" y="0" width="10.8" height="7.6" fill="#dcf2f6"/><rect x="1" y=".7" width="8.9" height="6" rx="1.3" fill="#a6dbe8"/><rect x="3.4" y="1.4" width="6.2" height="4.9" rx="1" fill="#8ccbdc"/><ellipse cx="2.3" cy="2" rx="1.8" ry="1.4" fill="#2a7890"/><ellipse cx="5" cy="1.6" rx="1.6" ry=".8" fill="#5aa8c0"/><circle cx="3.3" cy="4.7" r=".7" fill="#7e8ea0"/><circle cx="6.8" cy="4.4" r="1.15" fill="#08141a"/></svg>
<div class="a" style="left:48.20px;top:316.20px;width:1.40px;height:8.18px;background:#bdbdbd"></div>
<div class="a" style="left:49.60px;top:316.20px;width:703.60px;height:8.18px;background:#f9b1b5"></div>
<div class="a" style="left:49.60px;top:316.20px;width:703.60px;height:0.70px;background:rgba(255,255,255,.35)"></div>
<div class="a" style="left:49.60px;top:323.58px;width:703.60px;height:0.80px;background:rgba(0,0,0,.08)"></div>
<div class="a" style="left:118.00px;top:316.20px;width:1.00px;height:8.18px;background:rgba(0,0,0,.07)"></div>
<div class="a" style="left:119.00px;top:316.20px;width:1.00px;height:8.18px;background:rgba(255,255,255,.4)"></div>
<div class="a" style="left:142.80px;top:316.20px;width:1.00px;height:8.18px;background:rgba(0,0,0,.07)"></div>
<div class="a" style="left:143.80px;top:316.20px;width:1.00px;height:8.18px;background:rgba(255,255,255,.4)"></div>
<div class="a" style="left:371.40px;top:316.20px;width:1.00px;height:8.18px;background:rgba(0,0,0,.07)"></div>
<div class="a" style="left:372.40px;top:316.20px;width:1.00px;height:8.18px;background:rgba(255,255,255,.4)"></div>
<div class="a" style="left:388.60px;top:316.20px;width:1.00px;height:8.18px;background:rgba(0,0,0,.07)"></div>
<div class="a" style="left:389.60px;top:316.20px;width:1.00px;height:8.18px;background:rgba(255,255,255,.4)"></div>
<div class="a" style="left:428.80px;top:316.20px;width:1.00px;height:8.18px;background:rgba(0,0,0,.07)"></div>
<div class="a" style="left:429.80px;top:316.20px;width:1.00px;height:8.18px;background:rgba(255,255,255,.4)"></div>
<div class="a" style="left:463.40px;top:316.20px;width:1.00px;height:8.18px;background:rgba(0,0,0,.07)"></div>
<div class="a" style="left:464.40px;top:316.20px;width:1.00px;height:8.18px;background:rgba(255,255,255,.4)"></div>
<div class="a" style="left:567.80px;top:316.20px;width:1.00px;height:8.18px;background:rgba(0,0,0,.07)"></div>
<div class="a" style="left:568.80px;top:316.20px;width:1.00px;height:8.18px;background:rgba(255,255,255,.4)"></div>
<div class="a" style="left:674.50px;top:316.20px;width:1.00px;height:8.18px;background:rgba(0,0,0,.07)"></div>
<div class="a" style="left:675.50px;top:316.20px;width:1.00px;height:8.18px;background:rgba(255,255,255,.4)"></div>
<div class="t" style="right:657.34px;top:317.25px;font-size:6.7px;color:#4c1220;transform:scaleX(0.8520);transform-origin:100% 0;-webkit-text-stroke:0.09px #4c1220;letter-spacing:0.35px;">204</div>
<div class="t" style="left:145.04px;top:317.25px;font-size:6.7px;color:#4c1220;transform:scaleX(0.8571);transform-origin:0 0;-webkit-text-stroke:0.09px #4c1220;letter-spacing:0.35px;">APLICAÇÃO CITONEURIN 500 AMPOLA</div>
<div class="t" style="left:281.00px;width:200px;text-align:center;top:317.25px;font-size:6.7px;color:#4c1220;-webkit-text-stroke:0.09px #4c1220;letter-spacing:0.35px;"><span style="display:inline-block;transform:scaleX(0.8543)">UNI</span></div>
<div class="t" style="right:371.15px;top:317.25px;font-size:6.7px;color:#4c1220;transform:scaleX(0.8416);transform-origin:100% 0;-webkit-text-stroke:0.09px #4c1220;letter-spacing:0.35px;">7,00</div>
<div class="t" style="left:466.34px;top:317.25px;font-size:6.7px;color:#4c1220;transform:scaleX(0.8654);transform-origin:0 0;-webkit-text-stroke:0.09px #4c1220;letter-spacing:0.35px;">MEDICAMENTOS</div>
<div class="t" style="left:571.74px;top:317.25px;font-size:6.7px;color:#4c1220;transform:scaleX(0.8629);transform-origin:0 0;-webkit-text-stroke:0.09px #4c1220;letter-spacing:0.35px;">SCHERING PLOUGH</div>
<div class="a" style="left:37.10px;top:324.38px;width:11.10px;height:8.18px;background:#ececec"></div>
<div class="a" style="left:37.10px;top:331.95px;width:11.10px;height:0.60px;background:#d8d8d8"></div>
<svg style="left:37.3px;top:324.68px" width="10.8" height="7.6" viewBox="0 0 10.8 7.6"><rect x="0" y="0" width="10.8" height="7.6" fill="#dcf2f6"/><rect x="1" y=".7" width="8.9" height="6" rx="1.3" fill="#a6dbe8"/><rect x="3.4" y="1.4" width="6.2" height="4.9" rx="1" fill="#8ccbdc"/><ellipse cx="2.3" cy="2" rx="1.8" ry="1.4" fill="#2a7890"/><ellipse cx="5" cy="1.6" rx="1.6" ry=".8" fill="#5aa8c0"/><circle cx="3.3" cy="4.7" r=".7" fill="#7e8ea0"/><circle cx="6.8" cy="4.4" r="1.15" fill="#08141a"/></svg>
<div class="a" style="left:48.20px;top:324.38px;width:1.40px;height:8.18px;background:#bdbdbd"></div>
<div class="a" style="left:49.60px;top:324.38px;width:703.60px;height:8.18px;background:#c3dac4"></div>
<div class="a" style="left:49.60px;top:324.38px;width:703.60px;height:0.70px;background:rgba(255,255,255,.45)"></div>
<div class="a" style="left:49.60px;top:331.75px;width:703.60px;height:0.80px;background:rgba(0,0,0,.09)"></div>
<div class="a" style="left:118.00px;top:324.38px;width:1.00px;height:8.18px;background:rgba(0,0,0,.07)"></div>
<div class="a" style="left:119.00px;top:324.38px;width:1.00px;height:8.18px;background:rgba(255,255,255,.4)"></div>
<div class="a" style="left:142.80px;top:324.38px;width:1.00px;height:8.18px;background:rgba(0,0,0,.07)"></div>
<div class="a" style="left:143.80px;top:324.38px;width:1.00px;height:8.18px;background:rgba(255,255,255,.4)"></div>
<div class="a" style="left:371.40px;top:324.38px;width:1.00px;height:8.18px;background:rgba(0,0,0,.07)"></div>
<div class="a" style="left:372.40px;top:324.38px;width:1.00px;height:8.18px;background:rgba(255,255,255,.4)"></div>
<div class="a" style="left:388.60px;top:324.38px;width:1.00px;height:8.18px;background:rgba(0,0,0,.07)"></div>
<div class="a" style="left:389.60px;top:324.38px;width:1.00px;height:8.18px;background:rgba(255,255,255,.4)"></div>
<div class="a" style="left:428.80px;top:324.38px;width:1.00px;height:8.18px;background:rgba(0,0,0,.07)"></div>
<div class="a" style="left:429.80px;top:324.38px;width:1.00px;height:8.18px;background:rgba(255,255,255,.4)"></div>
<div class="a" style="left:463.40px;top:324.38px;width:1.00px;height:8.18px;background:rgba(0,0,0,.07)"></div>
<div class="a" style="left:464.40px;top:324.38px;width:1.00px;height:8.18px;background:rgba(255,255,255,.4)"></div>
<div class="a" style="left:567.80px;top:324.38px;width:1.00px;height:8.18px;background:rgba(0,0,0,.07)"></div>
<div class="a" style="left:568.80px;top:324.38px;width:1.00px;height:8.18px;background:rgba(255,255,255,.4)"></div>
<div class="a" style="left:674.50px;top:324.38px;width:1.00px;height:8.18px;background:rgba(0,0,0,.07)"></div>
<div class="a" style="left:675.50px;top:324.38px;width:1.00px;height:8.18px;background:rgba(255,255,255,.4)"></div>
<div class="t" style="right:657.34px;top:325.43px;font-size:6.7px;color:#1a2c20;transform:scaleX(0.8520);transform-origin:100% 0;-webkit-text-stroke:0.09px #1a2c20;letter-spacing:0.35px;">223</div>
<div class="t" style="left:145.04px;top:325.43px;font-size:6.7px;color:#1a2c20;transform:scaleX(0.8636);transform-origin:0 0;-webkit-text-stroke:0.09px #1a2c20;letter-spacing:0.35px;">APLICAÇÃO CONDROTON</div>
<div class="t" style="left:281.00px;width:200px;text-align:center;top:325.43px;font-size:6.7px;color:#1a2c20;-webkit-text-stroke:0.09px #1a2c20;letter-spacing:0.35px;"><span style="display:inline-block;transform:scaleX(0.8668)">ML</span></div>
<div class="t" style="right:371.15px;top:325.43px;font-size:6.7px;color:#1a2c20;transform:scaleX(0.8416);transform-origin:100% 0;-webkit-text-stroke:0.09px #1a2c20;letter-spacing:0.35px;">7,00</div>
<div class="t" style="right:336.55px;top:325.43px;font-size:6.7px;color:#1a2c20;transform:scaleX(0.8416);transform-origin:100% 0;-webkit-text-stroke:0.09px #1a2c20;letter-spacing:0.35px;">15,0</div>
<div class="t" style="left:466.34px;top:325.43px;font-size:6.7px;color:#1a2c20;transform:scaleX(0.8579);transform-origin:0 0;-webkit-text-stroke:0.09px #1a2c20;letter-spacing:0.35px;">MEDICAÇÃO CLÍNICA</div>
<div class="t" style="left:571.74px;top:325.43px;font-size:6.7px;color:#1a2c20;transform:scaleX(0.8629);transform-origin:0 0;-webkit-text-stroke:0.09px #1a2c20;letter-spacing:0.35px;">SCHERING PLOUGH</div>
<div class="a" style="left:37.10px;top:332.55px;width:11.10px;height:8.18px;background:#ececec"></div>
<div class="a" style="left:37.10px;top:340.12px;width:11.10px;height:0.60px;background:#d8d8d8"></div>
<svg style="left:37.3px;top:332.85px" width="10.8" height="7.6" viewBox="0 0 10.8 7.6"><rect x="0" y="0" width="10.8" height="7.6" fill="#dcf2f6"/><rect x="1" y=".7" width="8.9" height="6" rx="1.3" fill="#a6dbe8"/><rect x="3.4" y="1.4" width="6.2" height="4.9" rx="1" fill="#8ccbdc"/><ellipse cx="2.3" cy="2" rx="1.8" ry="1.4" fill="#2a7890"/><ellipse cx="5" cy="1.6" rx="1.6" ry=".8" fill="#5aa8c0"/><circle cx="3.3" cy="4.7" r=".7" fill="#7e8ea0"/><circle cx="6.8" cy="4.4" r="1.15" fill="#08141a"/></svg>
<div class="a" style="left:48.20px;top:332.55px;width:1.40px;height:8.18px;background:#bdbdbd"></div>
<div class="a" style="left:49.60px;top:332.55px;width:703.60px;height:8.18px;background:#c3dac4"></div>
<div class="a" style="left:49.60px;top:332.55px;width:703.60px;height:0.70px;background:rgba(255,255,255,.45)"></div>
<div class="a" style="left:49.60px;top:339.93px;width:703.60px;height:0.80px;background:rgba(0,0,0,.09)"></div>
<div class="a" style="left:118.00px;top:332.55px;width:1.00px;height:8.18px;background:rgba(0,0,0,.07)"></div>
<div class="a" style="left:119.00px;top:332.55px;width:1.00px;height:8.18px;background:rgba(255,255,255,.4)"></div>
<div class="a" style="left:142.80px;top:332.55px;width:1.00px;height:8.18px;background:rgba(0,0,0,.07)"></div>
<div class="a" style="left:143.80px;top:332.55px;width:1.00px;height:8.18px;background:rgba(255,255,255,.4)"></div>
<div class="a" style="left:371.40px;top:332.55px;width:1.00px;height:8.18px;background:rgba(0,0,0,.07)"></div>
<div class="a" style="left:372.40px;top:332.55px;width:1.00px;height:8.18px;background:rgba(255,255,255,.4)"></div>
<div class="a" style="left:388.60px;top:332.55px;width:1.00px;height:8.18px;background:rgba(0,0,0,.07)"></div>
<div class="a" style="left:389.60px;top:332.55px;width:1.00px;height:8.18px;background:rgba(255,255,255,.4)"></div>
<div class="a" style="left:428.80px;top:332.55px;width:1.00px;height:8.18px;background:rgba(0,0,0,.07)"></div>
<div class="a" style="left:429.80px;top:332.55px;width:1.00px;height:8.18px;background:rgba(255,255,255,.4)"></div>
<div class="a" style="left:463.40px;top:332.55px;width:1.00px;height:8.18px;background:rgba(0,0,0,.07)"></div>
<div class="a" style="left:464.40px;top:332.55px;width:1.00px;height:8.18px;background:rgba(255,255,255,.4)"></div>
<div class="a" style="left:567.80px;top:332.55px;width:1.00px;height:8.18px;background:rgba(0,0,0,.07)"></div>
<div class="a" style="left:568.80px;top:332.55px;width:1.00px;height:8.18px;background:rgba(255,255,255,.4)"></div>
<div class="a" style="left:674.50px;top:332.55px;width:1.00px;height:8.18px;background:rgba(0,0,0,.07)"></div>
<div class="a" style="left:675.50px;top:332.55px;width:1.00px;height:8.18px;background:rgba(255,255,255,.4)"></div>
<div class="t" style="right:657.34px;top:333.60px;font-size:6.7px;color:#1a2c20;transform:scaleX(0.8520);transform-origin:100% 0;-webkit-text-stroke:0.09px #1a2c20;letter-spacing:0.35px;">216</div>
<div class="t" style="left:145.04px;top:333.60px;font-size:6.7px;color:#1a2c20;transform:scaleX(0.8589);transform-origin:0 0;-webkit-text-stroke:0.09px #1a2c20;letter-spacing:0.35px;">APLICAÇÃO CÁLCIO GLICOSADO</div>
<div class="t" style="left:281.00px;width:200px;text-align:center;top:333.60px;font-size:6.7px;color:#1a2c20;-webkit-text-stroke:0.09px #1a2c20;letter-spacing:0.35px;"><span style="display:inline-block;transform:scaleX(0.8668)">ML</span></div>
<div class="t" style="right:371.15px;top:333.60px;font-size:6.7px;color:#1a2c20;transform:scaleX(0.8416);transform-origin:100% 0;-webkit-text-stroke:0.09px #1a2c20;letter-spacing:0.35px;">2,00</div>
<div class="t" style="right:336.55px;top:333.60px;font-size:6.7px;color:#1a2c20;transform:scaleX(0.8416);transform-origin:100% 0;-webkit-text-stroke:0.09px #1a2c20;letter-spacing:0.35px;">46,0</div>
<div class="t" style="left:466.34px;top:333.60px;font-size:6.7px;color:#1a2c20;transform:scaleX(0.8579);transform-origin:0 0;-webkit-text-stroke:0.09px #1a2c20;letter-spacing:0.35px;">MEDICAÇÃO CLÍNICA</div>
<div class="t" style="left:571.74px;top:333.60px;font-size:6.7px;color:#1a2c20;transform:scaleX(0.8629);transform-origin:0 0;-webkit-text-stroke:0.09px #1a2c20;letter-spacing:0.35px;">SCHERING PLOUGH</div>
<div class="a" style="left:37.10px;top:340.73px;width:11.10px;height:8.18px;background:#ececec"></div>
<div class="a" style="left:37.10px;top:348.30px;width:11.10px;height:0.60px;background:#d8d8d8"></div>
<svg style="left:37.3px;top:341.03px" width="10.8" height="7.6" viewBox="0 0 10.8 7.6"><rect x="0" y="0" width="10.8" height="7.6" fill="#dcf2f6"/><rect x="1" y=".7" width="8.9" height="6" rx="1.3" fill="#a6dbe8"/><rect x="3.4" y="1.4" width="6.2" height="4.9" rx="1" fill="#8ccbdc"/><ellipse cx="2.3" cy="2" rx="1.8" ry="1.4" fill="#2a7890"/><ellipse cx="5" cy="1.6" rx="1.6" ry=".8" fill="#5aa8c0"/><circle cx="3.3" cy="4.7" r=".7" fill="#7e8ea0"/><circle cx="6.8" cy="4.4" r="1.15" fill="#08141a"/></svg>
<div class="a" style="left:48.20px;top:340.73px;width:1.40px;height:8.18px;background:#bdbdbd"></div>
<div class="a" style="left:49.60px;top:340.73px;width:703.60px;height:8.18px;background:#fdfc6c"></div>
<div class="a" style="left:49.60px;top:340.73px;width:703.60px;height:0.70px;background:rgba(255,255,255,.45)"></div>
<div class="a" style="left:49.60px;top:348.10px;width:703.60px;height:0.80px;background:rgba(0,0,0,.09)"></div>
<div class="a" style="left:118.00px;top:340.73px;width:1.00px;height:8.18px;background:rgba(0,0,0,.07)"></div>
<div class="a" style="left:119.00px;top:340.73px;width:1.00px;height:8.18px;background:rgba(255,255,255,.4)"></div>
<div class="a" style="left:142.80px;top:340.73px;width:1.00px;height:8.18px;background:rgba(0,0,0,.07)"></div>
<div class="a" style="left:143.80px;top:340.73px;width:1.00px;height:8.18px;background:rgba(255,255,255,.4)"></div>
<div class="a" style="left:371.40px;top:340.73px;width:1.00px;height:8.18px;background:rgba(0,0,0,.07)"></div>
<div class="a" style="left:372.40px;top:340.73px;width:1.00px;height:8.18px;background:rgba(255,255,255,.4)"></div>
<div class="a" style="left:388.60px;top:340.73px;width:1.00px;height:8.18px;background:rgba(0,0,0,.07)"></div>
<div class="a" style="left:389.60px;top:340.73px;width:1.00px;height:8.18px;background:rgba(255,255,255,.4)"></div>
<div class="a" style="left:428.80px;top:340.73px;width:1.00px;height:8.18px;background:rgba(0,0,0,.07)"></div>
<div class="a" style="left:429.80px;top:340.73px;width:1.00px;height:8.18px;background:rgba(255,255,255,.4)"></div>
<div class="a" style="left:463.40px;top:340.73px;width:1.00px;height:8.18px;background:rgba(0,0,0,.07)"></div>
<div class="a" style="left:464.40px;top:340.73px;width:1.00px;height:8.18px;background:rgba(255,255,255,.4)"></div>
<div class="a" style="left:567.80px;top:340.73px;width:1.00px;height:8.18px;background:rgba(0,0,0,.07)"></div>
<div class="a" style="left:568.80px;top:340.73px;width:1.00px;height:8.18px;background:rgba(255,255,255,.4)"></div>
<div class="a" style="left:674.50px;top:340.73px;width:1.00px;height:8.18px;background:rgba(0,0,0,.07)"></div>
<div class="a" style="left:675.50px;top:340.73px;width:1.00px;height:8.18px;background:rgba(255,255,255,.4)"></div>
<div class="t" style="right:657.34px;top:341.78px;font-size:6.7px;color:#302c00;transform:scaleX(0.8520);transform-origin:100% 0;-webkit-text-stroke:0.09px #302c00;letter-spacing:0.35px;">214</div>
<div class="t" style="left:145.04px;top:341.78px;font-size:6.7px;color:#302c00;transform:scaleX(0.8566);transform-origin:0 0;-webkit-text-stroke:0.09px #302c00;letter-spacing:0.35px;">APLICAÇÃO DEXA-CITONEURIN 500</div>
<div class="t" style="left:281.00px;width:200px;text-align:center;top:341.78px;font-size:6.7px;color:#302c00;-webkit-text-stroke:0.09px #302c00;letter-spacing:0.35px;"><span style="display:inline-block;transform:scaleX(0.8543)">UNI</span></div>
<div class="t" style="right:371.15px;top:341.78px;font-size:6.7px;color:#302c00;transform:scaleX(0.8439);transform-origin:100% 0;-webkit-text-stroke:0.09px #302c00;letter-spacing:0.35px;">14,00</div>
<div class="t" style="right:336.55px;top:341.78px;font-size:6.7px;color:#302c00;transform:scaleX(0.8376);transform-origin:100% 0;-webkit-text-stroke:0.09px #302c00;letter-spacing:0.35px;">1,0</div>
<div class="t" style="left:466.34px;top:341.78px;font-size:6.7px;color:#302c00;transform:scaleX(0.8579);transform-origin:0 0;-webkit-text-stroke:0.09px #302c00;letter-spacing:0.35px;">MEDICAÇÃO CLÍNICA</div>
<div class="t" style="left:571.74px;top:341.78px;font-size:6.7px;color:#302c00;transform:scaleX(0.8629);transform-origin:0 0;-webkit-text-stroke:0.09px #302c00;letter-spacing:0.35px;">SCHERING PLOUGH</div>
<div class="a" style="left:37.10px;top:348.90px;width:11.10px;height:8.18px;background:#ececec"></div>
<div class="a" style="left:37.10px;top:356.48px;width:11.10px;height:0.60px;background:#d8d8d8"></div>
<svg style="left:37.3px;top:349.20px" width="10.8" height="7.6" viewBox="0 0 10.8 7.6"><rect x="0" y="0" width="10.8" height="7.6" fill="#dcf2f6"/><rect x="1" y=".7" width="8.9" height="6" rx="1.3" fill="#a6dbe8"/><rect x="3.4" y="1.4" width="6.2" height="4.9" rx="1" fill="#8ccbdc"/><ellipse cx="2.3" cy="2" rx="1.8" ry="1.4" fill="#2a7890"/><ellipse cx="5" cy="1.6" rx="1.6" ry=".8" fill="#5aa8c0"/><circle cx="3.3" cy="4.7" r=".7" fill="#7e8ea0"/><circle cx="6.8" cy="4.4" r="1.15" fill="#08141a"/></svg>
<div class="a" style="left:48.20px;top:348.90px;width:1.40px;height:8.18px;background:#bdbdbd"></div>
<div class="a" style="left:49.60px;top:348.90px;width:703.60px;height:8.18px;background:#f9b1b5"></div>
<div class="a" style="left:49.60px;top:348.90px;width:703.60px;height:0.70px;background:rgba(255,255,255,.35)"></div>
<div class="a" style="left:49.60px;top:356.28px;width:703.60px;height:0.80px;background:rgba(0,0,0,.08)"></div>
<div class="a" style="left:118.00px;top:348.90px;width:1.00px;height:8.18px;background:rgba(0,0,0,.07)"></div>
<div class="a" style="left:119.00px;top:348.90px;width:1.00px;height:8.18px;background:rgba(255,255,255,.4)"></div>
<div class="a" style="left:142.80px;top:348.90px;width:1.00px;height:8.18px;background:rgba(0,0,0,.07)"></div>
<div class="a" style="left:143.80px;top:348.90px;width:1.00px;height:8.18px;background:rgba(255,255,255,.4)"></div>
<div class="a" style="left:371.40px;top:348.90px;width:1.00px;height:8.18px;background:rgba(0,0,0,.07)"></div>
<div class="a" style="left:372.40px;top:348.90px;width:1.00px;height:8.18px;background:rgba(255,255,255,.4)"></div>
<div class="a" style="left:388.60px;top:348.90px;width:1.00px;height:8.18px;background:rgba(0,0,0,.07)"></div>
<div class="a" style="left:389.60px;top:348.90px;width:1.00px;height:8.18px;background:rgba(255,255,255,.4)"></div>
<div class="a" style="left:428.80px;top:348.90px;width:1.00px;height:8.18px;background:rgba(0,0,0,.07)"></div>
<div class="a" style="left:429.80px;top:348.90px;width:1.00px;height:8.18px;background:rgba(255,255,255,.4)"></div>
<div class="a" style="left:463.40px;top:348.90px;width:1.00px;height:8.18px;background:rgba(0,0,0,.07)"></div>
<div class="a" style="left:464.40px;top:348.90px;width:1.00px;height:8.18px;background:rgba(255,255,255,.4)"></div>
<div class="a" style="left:567.80px;top:348.90px;width:1.00px;height:8.18px;background:rgba(0,0,0,.07)"></div>
<div class="a" style="left:568.80px;top:348.90px;width:1.00px;height:8.18px;background:rgba(255,255,255,.4)"></div>
<div class="a" style="left:674.50px;top:348.90px;width:1.00px;height:8.18px;background:rgba(0,0,0,.07)"></div>
<div class="a" style="left:675.50px;top:348.90px;width:1.00px;height:8.18px;background:rgba(255,255,255,.4)"></div>
<div class="t" style="right:657.34px;top:349.95px;font-size:6.7px;color:#4c1220;transform:scaleX(0.8520);transform-origin:100% 0;-webkit-text-stroke:0.09px #4c1220;letter-spacing:0.35px;">254</div>
<div class="t" style="left:145.04px;top:349.95px;font-size:6.7px;color:#4c1220;transform:scaleX(0.8603);transform-origin:0 0;-webkit-text-stroke:0.09px #4c1220;letter-spacing:0.35px;">APLICAÇÃO DIURETICO NAQUASONE</div>
<div class="t" style="left:281.00px;width:200px;text-align:center;top:349.95px;font-size:6.7px;color:#4c1220;-webkit-text-stroke:0.09px #4c1220;letter-spacing:0.35px;"><span style="display:inline-block;transform:scaleX(0.8668)">ML</span></div>
<div class="t" style="right:371.15px;top:349.95px;font-size:6.7px;color:#4c1220;transform:scaleX(0.8416);transform-origin:100% 0;-webkit-text-stroke:0.09px #4c1220;letter-spacing:0.35px;">4,00</div>
<div class="t" style="left:466.34px;top:349.95px;font-size:6.7px;color:#4c1220;transform:scaleX(0.8579);transform-origin:0 0;-webkit-text-stroke:0.09px #4c1220;letter-spacing:0.35px;">MEDICAÇÃO CLÍNICA</div>
<div class="t" style="left:571.74px;top:349.95px;font-size:6.7px;color:#4c1220;transform:scaleX(0.8629);transform-origin:0 0;-webkit-text-stroke:0.09px #4c1220;letter-spacing:0.35px;">SCHERING PLOUGH</div>
<div class="a" style="left:37.10px;top:357.08px;width:11.10px;height:8.18px;background:#ececec"></div>
<div class="a" style="left:37.10px;top:364.65px;width:11.10px;height:0.60px;background:#d8d8d8"></div>
<svg style="left:37.3px;top:357.38px" width="10.8" height="7.6" viewBox="0 0 10.8 7.6"><rect x="0" y="0" width="10.8" height="7.6" fill="#dcf2f6"/><rect x="1" y=".7" width="8.9" height="6" rx="1.3" fill="#a6dbe8"/><rect x="3.4" y="1.4" width="6.2" height="4.9" rx="1" fill="#8ccbdc"/><ellipse cx="2.3" cy="2" rx="1.8" ry="1.4" fill="#2a7890"/><ellipse cx="5" cy="1.6" rx="1.6" ry=".8" fill="#5aa8c0"/><circle cx="3.3" cy="4.7" r=".7" fill="#7e8ea0"/><circle cx="6.8" cy="4.4" r="1.15" fill="#08141a"/></svg>
<div class="a" style="left:48.20px;top:357.08px;width:1.40px;height:8.18px;background:#bdbdbd"></div>
<div class="a" style="left:49.60px;top:357.08px;width:703.60px;height:8.18px;background:#c3dac4"></div>
<div class="a" style="left:49.60px;top:357.08px;width:703.60px;height:0.70px;background:rgba(255,255,255,.45)"></div>
<div class="a" style="left:49.60px;top:364.45px;width:703.60px;height:0.80px;background:rgba(0,0,0,.09)"></div>
<div class="a" style="left:118.00px;top:357.08px;width:1.00px;height:8.18px;background:rgba(0,0,0,.07)"></div>
<div class="a" style="left:119.00px;top:357.08px;width:1.00px;height:8.18px;background:rgba(255,255,255,.4)"></div>
<div class="a" style="left:142.80px;top:357.08px;width:1.00px;height:8.18px;background:rgba(0,0,0,.07)"></div>
<div class="a" style="left:143.80px;top:357.08px;width:1.00px;height:8.18px;background:rgba(255,255,255,.4)"></div>
<div class="a" style="left:371.40px;top:357.08px;width:1.00px;height:8.18px;background:rgba(0,0,0,.07)"></div>
<div class="a" style="left:372.40px;top:357.08px;width:1.00px;height:8.18px;background:rgba(255,255,255,.4)"></div>
<div class="a" style="left:388.60px;top:357.08px;width:1.00px;height:8.18px;background:rgba(0,0,0,.07)"></div>
<div class="a" style="left:389.60px;top:357.08px;width:1.00px;height:8.18px;background:rgba(255,255,255,.4)"></div>
<div class="a" style="left:428.80px;top:357.08px;width:1.00px;height:8.18px;background:rgba(0,0,0,.07)"></div>
<div class="a" style="left:429.80px;top:357.08px;width:1.00px;height:8.18px;background:rgba(255,255,255,.4)"></div>
<div class="a" style="left:463.40px;top:357.08px;width:1.00px;height:8.18px;background:rgba(0,0,0,.07)"></div>
<div class="a" style="left:464.40px;top:357.08px;width:1.00px;height:8.18px;background:rgba(255,255,255,.4)"></div>
<div class="a" style="left:567.80px;top:357.08px;width:1.00px;height:8.18px;background:rgba(0,0,0,.07)"></div>
<div class="a" style="left:568.80px;top:357.08px;width:1.00px;height:8.18px;background:rgba(255,255,255,.4)"></div>
<div class="a" style="left:674.50px;top:357.08px;width:1.00px;height:8.18px;background:rgba(0,0,0,.07)"></div>
<div class="a" style="left:675.50px;top:357.08px;width:1.00px;height:8.18px;background:rgba(255,255,255,.4)"></div>
<div class="t" style="right:657.34px;top:358.13px;font-size:6.7px;color:#1a2c20;transform:scaleX(0.8520);transform-origin:100% 0;-webkit-text-stroke:0.09px #1a2c20;letter-spacing:0.35px;">316</div>
<div class="t" style="left:145.04px;top:358.13px;font-size:6.7px;color:#1a2c20;transform:scaleX(0.8563);transform-origin:0 0;-webkit-text-stroke:0.09px #1a2c20;letter-spacing:0.35px;">APLICAÇÃO DIURETICO SEMIDIN</div>
<div class="t" style="left:281.00px;width:200px;text-align:center;top:358.13px;font-size:6.7px;color:#1a2c20;-webkit-text-stroke:0.09px #1a2c20;letter-spacing:0.35px;"><span style="display:inline-block;transform:scaleX(0.8668)">ML</span></div>
<div class="t" style="right:371.15px;top:358.13px;font-size:6.7px;color:#1a2c20;transform:scaleX(0.8416);transform-origin:100% 0;-webkit-text-stroke:0.09px #1a2c20;letter-spacing:0.35px;">5,00</div>
<div class="t" style="right:336.55px;top:358.13px;font-size:6.7px;color:#1a2c20;transform:scaleX(0.8376);transform-origin:100% 0;-webkit-text-stroke:0.09px #1a2c20;letter-spacing:0.35px;">4,0</div>
<div class="t" style="left:466.34px;top:358.13px;font-size:6.7px;color:#1a2c20;transform:scaleX(0.8579);transform-origin:0 0;-webkit-text-stroke:0.09px #1a2c20;letter-spacing:0.35px;">MEDICAÇÃO CLÍNICA</div>
<div class="t" style="left:571.74px;top:358.13px;font-size:6.7px;color:#1a2c20;transform:scaleX(0.8629);transform-origin:0 0;-webkit-text-stroke:0.09px #1a2c20;letter-spacing:0.35px;">SCHERING PLOUGH</div>
<div class="a" style="left:37.10px;top:365.25px;width:11.10px;height:8.18px;background:#ececec"></div>
<div class="a" style="left:37.10px;top:372.83px;width:11.10px;height:0.60px;background:#d8d8d8"></div>
<svg style="left:37.3px;top:365.55px" width="10.8" height="7.6" viewBox="0 0 10.8 7.6"><rect x="0" y="0" width="10.8" height="7.6" fill="#dcf2f6"/><rect x="1" y=".7" width="8.9" height="6" rx="1.3" fill="#a6dbe8"/><rect x="3.4" y="1.4" width="6.2" height="4.9" rx="1" fill="#8ccbdc"/><ellipse cx="2.3" cy="2" rx="1.8" ry="1.4" fill="#2a7890"/><ellipse cx="5" cy="1.6" rx="1.6" ry=".8" fill="#5aa8c0"/><circle cx="3.3" cy="4.7" r=".7" fill="#7e8ea0"/><circle cx="6.8" cy="4.4" r="1.15" fill="#08141a"/></svg>
<div class="a" style="left:48.20px;top:365.25px;width:1.40px;height:8.18px;background:#bdbdbd"></div>
<div class="a" style="left:49.60px;top:365.25px;width:703.60px;height:8.18px;background:#c3dac4"></div>
<div class="a" style="left:49.60px;top:365.25px;width:703.60px;height:0.70px;background:rgba(255,255,255,.45)"></div>
<div class="a" style="left:49.60px;top:372.63px;width:703.60px;height:0.80px;background:rgba(0,0,0,.09)"></div>
<div class="a" style="left:118.00px;top:365.25px;width:1.00px;height:8.18px;background:rgba(0,0,0,.07)"></div>
<div class="a" style="left:119.00px;top:365.25px;width:1.00px;height:8.18px;background:rgba(255,255,255,.4)"></div>
<div class="a" style="left:142.80px;top:365.25px;width:1.00px;height:8.18px;background:rgba(0,0,0,.07)"></div>
<div class="a" style="left:143.80px;top:365.25px;width:1.00px;height:8.18px;background:rgba(255,255,255,.4)"></div>
<div class="a" style="left:371.40px;top:365.25px;width:1.00px;height:8.18px;background:rgba(0,0,0,.07)"></div>
<div class="a" style="left:372.40px;top:365.25px;width:1.00px;height:8.18px;background:rgba(255,255,255,.4)"></div>
<div class="a" style="left:388.60px;top:365.25px;width:1.00px;height:8.18px;background:rgba(0,0,0,.07)"></div>
<div class="a" style="left:389.60px;top:365.25px;width:1.00px;height:8.18px;background:rgba(255,255,255,.4)"></div>
<div class="a" style="left:428.80px;top:365.25px;width:1.00px;height:8.18px;background:rgba(0,0,0,.07)"></div>
<div class="a" style="left:429.80px;top:365.25px;width:1.00px;height:8.18px;background:rgba(255,255,255,.4)"></div>
<div class="a" style="left:463.40px;top:365.25px;width:1.00px;height:8.18px;background:rgba(0,0,0,.07)"></div>
<div class="a" style="left:464.40px;top:365.25px;width:1.00px;height:8.18px;background:rgba(255,255,255,.4)"></div>
<div class="a" style="left:567.80px;top:365.25px;width:1.00px;height:8.18px;background:rgba(0,0,0,.07)"></div>
<div class="a" style="left:568.80px;top:365.25px;width:1.00px;height:8.18px;background:rgba(255,255,255,.4)"></div>
<div class="a" style="left:674.50px;top:365.25px;width:1.00px;height:8.18px;background:rgba(0,0,0,.07)"></div>
<div class="a" style="left:675.50px;top:365.25px;width:1.00px;height:8.18px;background:rgba(255,255,255,.4)"></div>
<div class="t" style="right:657.34px;top:366.30px;font-size:6.7px;color:#1a2c20;transform:scaleX(0.8520);transform-origin:100% 0;-webkit-text-stroke:0.09px #1a2c20;letter-spacing:0.35px;">147</div>
<div class="t" style="left:145.04px;top:366.30px;font-size:6.7px;color:#1a2c20;transform:scaleX(0.8543);transform-origin:0 0;-webkit-text-stroke:0.09px #1a2c20;letter-spacing:0.35px;">APLICAÇÃO E.C.P</div>
<div class="t" style="left:281.00px;width:200px;text-align:center;top:366.30px;font-size:6.7px;color:#1a2c20;-webkit-text-stroke:0.09px #1a2c20;letter-spacing:0.35px;"><span style="display:inline-block;transform:scaleX(0.8668)">ML</span></div>
<div class="t" style="right:371.15px;top:366.30px;font-size:6.7px;color:#1a2c20;transform:scaleX(0.8439);transform-origin:100% 0;-webkit-text-stroke:0.09px #1a2c20;letter-spacing:0.35px;">10,00</div>
<div class="t" style="right:336.55px;top:366.30px;font-size:6.7px;color:#1a2c20;transform:scaleX(0.8416);transform-origin:100% 0;-webkit-text-stroke:0.09px #1a2c20;letter-spacing:0.35px;">45,0</div>
<div class="t" style="left:466.34px;top:366.30px;font-size:6.7px;color:#1a2c20;transform:scaleX(0.8579);transform-origin:0 0;-webkit-text-stroke:0.09px #1a2c20;letter-spacing:0.35px;">MEDICAÇÃO CLÍNICA</div>
<div class="t" style="left:571.74px;top:366.30px;font-size:6.7px;color:#1a2c20;transform:scaleX(0.8629);transform-origin:0 0;-webkit-text-stroke:0.09px #1a2c20;letter-spacing:0.35px;">SCHERING PLOUGH</div>
<div class="a" style="left:37.10px;top:373.43px;width:11.10px;height:8.18px;background:#ececec"></div>
<div class="a" style="left:37.10px;top:381.00px;width:11.10px;height:0.60px;background:#d8d8d8"></div>
<svg style="left:37.3px;top:373.73px" width="10.8" height="7.6" viewBox="0 0 10.8 7.6"><rect x="0" y="0" width="10.8" height="7.6" fill="#dcf2f6"/><rect x="1" y=".7" width="8.9" height="6" rx="1.3" fill="#a6dbe8"/><rect x="3.4" y="1.4" width="6.2" height="4.9" rx="1" fill="#8ccbdc"/><ellipse cx="2.3" cy="2" rx="1.8" ry="1.4" fill="#2a7890"/><ellipse cx="5" cy="1.6" rx="1.6" ry=".8" fill="#5aa8c0"/><circle cx="3.3" cy="4.7" r=".7" fill="#7e8ea0"/><circle cx="6.8" cy="4.4" r="1.15" fill="#08141a"/></svg>
<div class="a" style="left:48.20px;top:373.43px;width:1.40px;height:8.18px;background:#bdbdbd"></div>
<div class="a" style="left:49.60px;top:373.43px;width:703.60px;height:8.18px;background:#fdfc6c"></div>
<div class="a" style="left:49.60px;top:373.43px;width:703.60px;height:0.70px;background:rgba(255,255,255,.45)"></div>
<div class="a" style="left:49.60px;top:380.80px;width:703.60px;height:0.80px;background:rgba(0,0,0,.09)"></div>
<div class="a" style="left:118.00px;top:373.43px;width:1.00px;height:8.18px;background:rgba(0,0,0,.07)"></div>
<div class="a" style="left:119.00px;top:373.43px;width:1.00px;height:8.18px;background:rgba(255,255,255,.4)"></div>
<div class="a" style="left:142.80px;top:373.43px;width:1.00px;height:8.18px;background:rgba(0,0,0,.07)"></div>
<div class="a" style="left:143.80px;top:373.43px;width:1.00px;height:8.18px;background:rgba(255,255,255,.4)"></div>
<div class="a" style="left:371.40px;top:373.43px;width:1.00px;height:8.18px;background:rgba(0,0,0,.07)"></div>
<div class="a" style="left:372.40px;top:373.43px;width:1.00px;height:8.18px;background:rgba(255,255,255,.4)"></div>
<div class="a" style="left:388.60px;top:373.43px;width:1.00px;height:8.18px;background:rgba(0,0,0,.07)"></div>
<div class="a" style="left:389.60px;top:373.43px;width:1.00px;height:8.18px;background:rgba(255,255,255,.4)"></div>
<div class="a" style="left:428.80px;top:373.43px;width:1.00px;height:8.18px;background:rgba(0,0,0,.07)"></div>
<div class="a" style="left:429.80px;top:373.43px;width:1.00px;height:8.18px;background:rgba(255,255,255,.4)"></div>
<div class="a" style="left:463.40px;top:373.43px;width:1.00px;height:8.18px;background:rgba(0,0,0,.07)"></div>
<div class="a" style="left:464.40px;top:373.43px;width:1.00px;height:8.18px;background:rgba(255,255,255,.4)"></div>
<div class="a" style="left:567.80px;top:373.43px;width:1.00px;height:8.18px;background:rgba(0,0,0,.07)"></div>
<div class="a" style="left:568.80px;top:373.43px;width:1.00px;height:8.18px;background:rgba(255,255,255,.4)"></div>
<div class="a" style="left:674.50px;top:373.43px;width:1.00px;height:8.18px;background:rgba(0,0,0,.07)"></div>
<div class="a" style="left:675.50px;top:373.43px;width:1.00px;height:8.18px;background:rgba(255,255,255,.4)"></div>
<div class="t" style="right:657.34px;top:374.48px;font-size:6.7px;color:#302c00;transform:scaleX(0.8520);transform-origin:100% 0;-webkit-text-stroke:0.09px #302c00;letter-spacing:0.35px;">239</div>
<div class="t" style="left:145.04px;top:374.48px;font-size:6.7px;color:#302c00;transform:scaleX(0.8616);transform-origin:0 0;-webkit-text-stroke:0.09px #302c00;letter-spacing:0.35px;">APLICAÇÃO FERRO DEXTRANO</div>
<div class="t" style="left:281.00px;width:200px;text-align:center;top:374.48px;font-size:6.7px;color:#302c00;-webkit-text-stroke:0.09px #302c00;letter-spacing:0.35px;"><span style="display:inline-block;transform:scaleX(0.8668)">ML</span></div>
<div class="t" style="right:371.15px;top:374.48px;font-size:6.7px;color:#302c00;transform:scaleX(0.8416);transform-origin:100% 0;-webkit-text-stroke:0.09px #302c00;letter-spacing:0.35px;">4,00</div>
<div class="t" style="right:336.55px;top:374.48px;font-size:6.7px;color:#302c00;transform:scaleX(0.8376);transform-origin:100% 0;-webkit-text-stroke:0.09px #302c00;letter-spacing:0.35px;">6,0</div>
<div class="t" style="left:466.34px;top:374.48px;font-size:6.7px;color:#302c00;transform:scaleX(0.8579);transform-origin:0 0;-webkit-text-stroke:0.09px #302c00;letter-spacing:0.35px;">MEDICAÇÃO CLÍNICA</div>
<div class="t" style="left:571.74px;top:374.48px;font-size:6.7px;color:#302c00;transform:scaleX(0.8629);transform-origin:0 0;-webkit-text-stroke:0.09px #302c00;letter-spacing:0.35px;">SCHERING PLOUGH</div>
<div class="a" style="left:37.10px;top:381.60px;width:11.10px;height:8.18px;background:#ececec"></div>
<div class="a" style="left:37.10px;top:389.18px;width:11.10px;height:0.60px;background:#d8d8d8"></div>
<svg style="left:37.3px;top:381.90px" width="10.8" height="7.6" viewBox="0 0 10.8 7.6"><rect x="0" y="0" width="10.8" height="7.6" fill="#dcf2f6"/><rect x="1" y=".7" width="8.9" height="6" rx="1.3" fill="#a6dbe8"/><rect x="3.4" y="1.4" width="6.2" height="4.9" rx="1" fill="#8ccbdc"/><ellipse cx="2.3" cy="2" rx="1.8" ry="1.4" fill="#2a7890"/><ellipse cx="5" cy="1.6" rx="1.6" ry=".8" fill="#5aa8c0"/><circle cx="3.3" cy="4.7" r=".7" fill="#7e8ea0"/><circle cx="6.8" cy="4.4" r="1.15" fill="#08141a"/></svg>
<div class="a" style="left:48.20px;top:381.60px;width:1.40px;height:8.18px;background:#bdbdbd"></div>
<div class="a" style="left:49.60px;top:381.60px;width:703.60px;height:8.18px;background:#c3dac4"></div>
<div class="a" style="left:49.60px;top:381.60px;width:703.60px;height:0.70px;background:rgba(255,255,255,.45)"></div>
<div class="a" style="left:49.60px;top:388.98px;width:703.60px;height:0.80px;background:rgba(0,0,0,.09)"></div>
<div class="a" style="left:118.00px;top:381.60px;width:1.00px;height:8.18px;background:rgba(0,0,0,.07)"></div>
<div class="a" style="left:119.00px;top:381.60px;width:1.00px;height:8.18px;background:rgba(255,255,255,.4)"></div>
<div class="a" style="left:142.80px;top:381.60px;width:1.00px;height:8.18px;background:rgba(0,0,0,.07)"></div>
<div class="a" style="left:143.80px;top:381.60px;width:1.00px;height:8.18px;background:rgba(255,255,255,.4)"></div>
<div class="a" style="left:371.40px;top:381.60px;width:1.00px;height:8.18px;background:rgba(0,0,0,.07)"></div>
<div class="a" style="left:372.40px;top:381.60px;width:1.00px;height:8.18px;background:rgba(255,255,255,.4)"></div>
<div class="a" style="left:388.60px;top:381.60px;width:1.00px;height:8.18px;background:rgba(0,0,0,.07)"></div>
<div class="a" style="left:389.60px;top:381.60px;width:1.00px;height:8.18px;background:rgba(255,255,255,.4)"></div>
<div class="a" style="left:428.80px;top:381.60px;width:1.00px;height:8.18px;background:rgba(0,0,0,.07)"></div>
<div class="a" style="left:429.80px;top:381.60px;width:1.00px;height:8.18px;background:rgba(255,255,255,.4)"></div>
<div class="a" style="left:463.40px;top:381.60px;width:1.00px;height:8.18px;background:rgba(0,0,0,.07)"></div>
<div class="a" style="left:464.40px;top:381.60px;width:1.00px;height:8.18px;background:rgba(255,255,255,.4)"></div>
<div class="a" style="left:567.80px;top:381.60px;width:1.00px;height:8.18px;background:rgba(0,0,0,.07)"></div>
<div class="a" style="left:568.80px;top:381.60px;width:1.00px;height:8.18px;background:rgba(255,255,255,.4)"></div>
<div class="a" style="left:674.50px;top:381.60px;width:1.00px;height:8.18px;background:rgba(0,0,0,.07)"></div>
<div class="a" style="left:675.50px;top:381.60px;width:1.00px;height:8.18px;background:rgba(255,255,255,.4)"></div>
<div class="t" style="right:657.34px;top:382.65px;font-size:6.7px;color:#1a2c20;transform:scaleX(0.8520);transform-origin:100% 0;-webkit-text-stroke:0.09px #1a2c20;letter-spacing:0.35px;">262</div>
<div class="t" style="left:145.04px;top:382.65px;font-size:6.7px;color:#1a2c20;transform:scaleX(0.8562);transform-origin:0 0;-webkit-text-stroke:0.09px #1a2c20;letter-spacing:0.35px;">APLICAÇÃO HIPOTENSIVO ETILEFRIL AMPOLA</div>
<div class="t" style="left:281.00px;width:200px;text-align:center;top:382.65px;font-size:6.7px;color:#1a2c20;-webkit-text-stroke:0.09px #1a2c20;letter-spacing:0.35px;"><span style="display:inline-block;transform:scaleX(0.8543)">UNI</span></div>
<div class="t" style="right:371.15px;top:382.65px;font-size:6.7px;color:#1a2c20;transform:scaleX(0.8416);transform-origin:100% 0;-webkit-text-stroke:0.09px #1a2c20;letter-spacing:0.35px;">6,00</div>
<div class="t" style="right:336.55px;top:382.65px;font-size:6.7px;color:#1a2c20;transform:scaleX(0.8376);transform-origin:100% 0;-webkit-text-stroke:0.09px #1a2c20;letter-spacing:0.35px;">3,0</div>
<div class="t" style="left:466.34px;top:382.65px;font-size:6.7px;color:#1a2c20;transform:scaleX(0.8579);transform-origin:0 0;-webkit-text-stroke:0.09px #1a2c20;letter-spacing:0.35px;">MEDICAÇÃO CLÍNICA</div>
<div class="t" style="left:571.74px;top:382.65px;font-size:6.7px;color:#1a2c20;transform:scaleX(0.8629);transform-origin:0 0;-webkit-text-stroke:0.09px #1a2c20;letter-spacing:0.35px;">SCHERING PLOUGH</div>
<div class="a" style="left:37.10px;top:389.78px;width:11.10px;height:8.18px;background:#ececec"></div>
<div class="a" style="left:37.10px;top:397.35px;width:11.10px;height:0.60px;background:#d8d8d8"></div>
<svg style="left:37.3px;top:390.08px" width="10.8" height="7.6" viewBox="0 0 10.8 7.6"><rect x="0" y="0" width="10.8" height="7.6" fill="#dcf2f6"/><rect x="1" y=".7" width="8.9" height="6" rx="1.3" fill="#a6dbe8"/><rect x="3.4" y="1.4" width="6.2" height="4.9" rx="1" fill="#8ccbdc"/><ellipse cx="2.3" cy="2" rx="1.8" ry="1.4" fill="#2a7890"/><ellipse cx="5" cy="1.6" rx="1.6" ry=".8" fill="#5aa8c0"/><circle cx="3.3" cy="4.7" r=".7" fill="#7e8ea0"/><circle cx="6.8" cy="4.4" r="1.15" fill="#08141a"/></svg>
<div class="a" style="left:48.20px;top:389.78px;width:1.40px;height:8.18px;background:#bdbdbd"></div>
<div class="a" style="left:49.60px;top:389.78px;width:703.60px;height:8.18px;background:#c3dac4"></div>
<div class="a" style="left:49.60px;top:389.78px;width:703.60px;height:0.70px;background:rgba(255,255,255,.45)"></div>
<div class="a" style="left:49.60px;top:397.15px;width:703.60px;height:0.80px;background:rgba(0,0,0,.09)"></div>
<div class="a" style="left:118.00px;top:389.78px;width:1.00px;height:8.18px;background:rgba(0,0,0,.07)"></div>
<div class="a" style="left:119.00px;top:389.78px;width:1.00px;height:8.18px;background:rgba(255,255,255,.4)"></div>
<div class="a" style="left:142.80px;top:389.78px;width:1.00px;height:8.18px;background:rgba(0,0,0,.07)"></div>
<div class="a" style="left:143.80px;top:389.78px;width:1.00px;height:8.18px;background:rgba(255,255,255,.4)"></div>
<div class="a" style="left:371.40px;top:389.78px;width:1.00px;height:8.18px;background:rgba(0,0,0,.07)"></div>
<div class="a" style="left:372.40px;top:389.78px;width:1.00px;height:8.18px;background:rgba(255,255,255,.4)"></div>
<div class="a" style="left:388.60px;top:389.78px;width:1.00px;height:8.18px;background:rgba(0,0,0,.07)"></div>
<div class="a" style="left:389.60px;top:389.78px;width:1.00px;height:8.18px;background:rgba(255,255,255,.4)"></div>
<div class="a" style="left:428.80px;top:389.78px;width:1.00px;height:8.18px;background:rgba(0,0,0,.07)"></div>
<div class="a" style="left:429.80px;top:389.78px;width:1.00px;height:8.18px;background:rgba(255,255,255,.4)"></div>
<div class="a" style="left:463.40px;top:389.78px;width:1.00px;height:8.18px;background:rgba(0,0,0,.07)"></div>
<div class="a" style="left:464.40px;top:389.78px;width:1.00px;height:8.18px;background:rgba(255,255,255,.4)"></div>
<div class="a" style="left:567.80px;top:389.78px;width:1.00px;height:8.18px;background:rgba(0,0,0,.07)"></div>
<div class="a" style="left:568.80px;top:389.78px;width:1.00px;height:8.18px;background:rgba(255,255,255,.4)"></div>
<div class="a" style="left:674.50px;top:389.78px;width:1.00px;height:8.18px;background:rgba(0,0,0,.07)"></div>
<div class="a" style="left:675.50px;top:389.78px;width:1.00px;height:8.18px;background:rgba(255,255,255,.4)"></div>
<div class="t" style="right:657.34px;top:390.83px;font-size:6.7px;color:#1a2c20;transform:scaleX(0.8520);transform-origin:100% 0;-webkit-text-stroke:0.09px #1a2c20;letter-spacing:0.35px;">269</div>
<div class="t" style="left:145.04px;top:390.83px;font-size:6.7px;color:#1a2c20;transform:scaleX(0.8554);transform-origin:0 0;-webkit-text-stroke:0.09px #1a2c20;letter-spacing:0.35px;">APLICAÇÃO IMIZOL</div>
<div class="t" style="left:281.00px;width:200px;text-align:center;top:390.83px;font-size:6.7px;color:#1a2c20;-webkit-text-stroke:0.09px #1a2c20;letter-spacing:0.35px;"><span style="display:inline-block;transform:scaleX(0.8668)">ML</span></div>
<div class="t" style="right:371.15px;top:390.83px;font-size:6.7px;color:#1a2c20;transform:scaleX(0.8416);transform-origin:100% 0;-webkit-text-stroke:0.09px #1a2c20;letter-spacing:0.35px;">4,00</div>
<div class="t" style="right:336.55px;top:390.83px;font-size:6.7px;color:#1a2c20;transform:scaleX(0.8376);transform-origin:100% 0;-webkit-text-stroke:0.09px #1a2c20;letter-spacing:0.35px;">6,0</div>
<div class="t" style="left:466.34px;top:390.83px;font-size:6.7px;color:#1a2c20;transform:scaleX(0.8579);transform-origin:0 0;-webkit-text-stroke:0.09px #1a2c20;letter-spacing:0.35px;">MEDICAÇÃO CLÍNICA</div>
<div class="t" style="left:571.74px;top:390.83px;font-size:6.7px;color:#1a2c20;transform:scaleX(0.8629);transform-origin:0 0;-webkit-text-stroke:0.09px #1a2c20;letter-spacing:0.35px;">SCHERING PLOUGH</div>
<svg style="left:36.6px;top:419.8px" width="8.6" height="8.6" viewBox="0 0 8.6 8.6"><circle cx="4.3" cy="4.3" r="2.95" fill="#fff" stroke="#0d56a4" stroke-width="2.4"/></svg>
<div class="t" style="left:48.47px;top:421.90px;font-size:6.6px;color:#262626;transform:scaleX(0.9323);transform-origin:0 0;-webkit-text-stroke:0.05px #262626;">&gt; Habilitar o Gerenciamento do Estoque por Cores</div>
<div class="a" style="left:298.60px;top:419.50px;width:8.30px;height:8.90px;background:#c3dac4;border-bottom:1px solid #9cb49c"></div>
<div class="t" style="left:309.52px;top:421.90px;font-size:6.6px;color:#262626;transform:scaleX(0.9596);transform-origin:0 0;-webkit-text-stroke:0.05px #262626;">Em estoque</div>
<div class="a" style="left:371.50px;top:419.50px;width:8.50px;height:8.90px;background:#fdfc6c;border-bottom:1px solid #c4bc50"></div>
<div class="t" style="left:382.62px;top:421.90px;font-size:6.6px;color:#262626;transform:scaleX(0.9444);transform-origin:0 0;-webkit-text-stroke:0.05px #262626;">Estoque Baixo</div>
<div class="a" style="left:444.00px;top:419.50px;width:8.00px;height:8.90px;background:#f9b1b5;border-bottom:1px solid #d09094"></div>
<div class="t" style="left:454.71px;top:421.90px;font-size:6.6px;color:#262626;transform:scaleX(0.9709);transform-origin:0 0;-webkit-text-stroke:0.05px #262626;">Estoque Zerado</div>
<div class="a" style="left:518.60px;top:421.00px;width:1.00px;height:6.00px;background:#333"></div>
<div class="a" style="left:528.40px;top:419.50px;width:8.60px;height:8.90px;background:#e2e2e2;border-bottom:1px solid #c0c0c0"></div>
<div class="t" style="left:539.12px;top:421.90px;font-size:6.6px;color:#262626;transform:scaleX(0.9398);transform-origin:0 0;-webkit-text-stroke:0.05px #262626;">Item Serviço ou sem Controle de Estoque</div>
<div class="t" style="left:681.92px;top:421.90px;font-size:6.6px;color:#262626;transform:scaleX(0.9309);transform-origin:0 0;-webkit-text-stroke:0.05px #262626;">Para sair ESC ou botão SAIR</div>
</div></body></html>
